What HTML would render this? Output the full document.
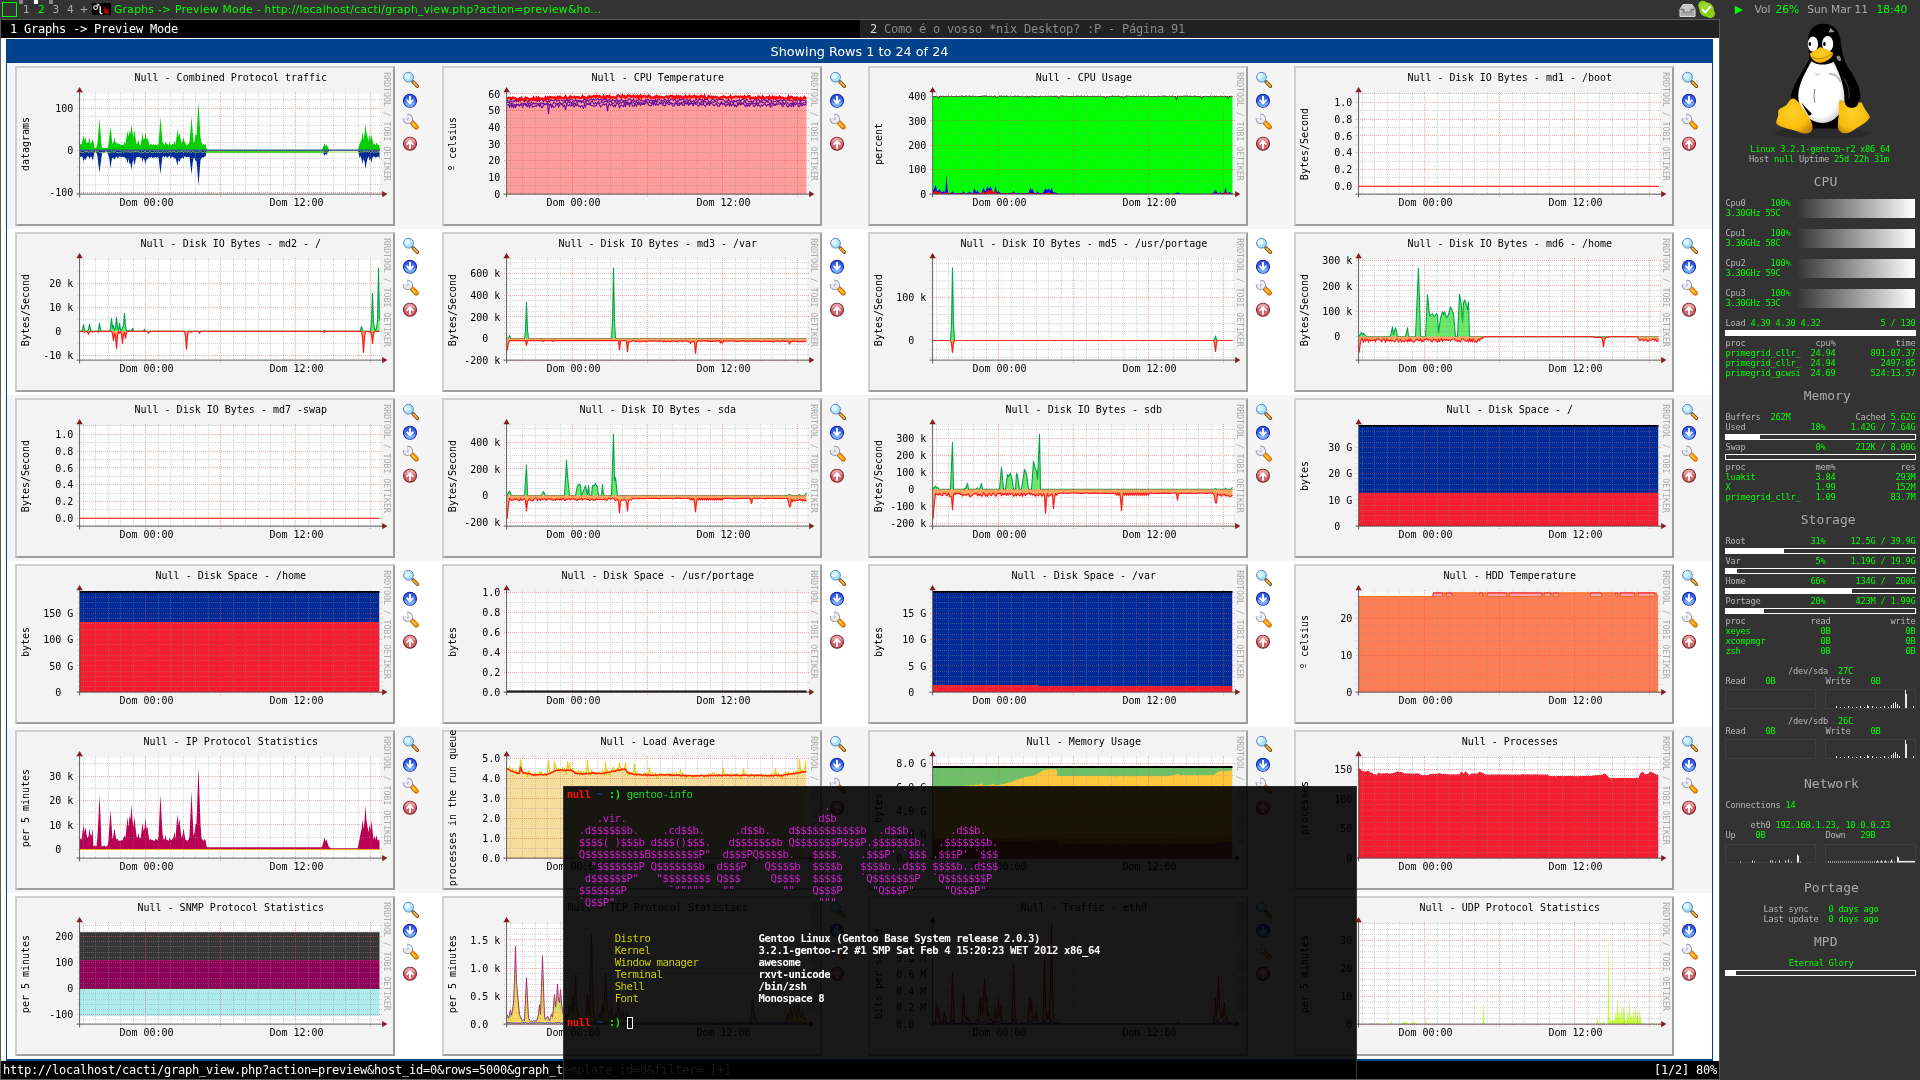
<!DOCTYPE html><html><head><meta charset="utf-8"><title>Graphs -&gt; Preview Mode</title><style>

html,body{margin:0;padding:0}
body{width:1920px;height:1080px;overflow:hidden;background:#333;position:relative;font-family:"DejaVu Sans Mono","Liberation Mono",monospace;will-change:transform}
div,svg,span{position:absolute;box-sizing:border-box}
span.i{position:static}
.g{overflow:visible}
.g text{font-family:"DejaVu Sans Mono","Liberation Mono",monospace;font-size:10px;fill:#000}
.g text.wm{font-size:8.2px;fill:#aaa}
.ic{overflow:visible}
#win{left:0;top:19px;width:1720px;height:1061px;background:#fff;border:1px solid #5a5a5a;overflow:hidden}
#tabs{left:1px;top:20px;width:1718px;height:17.5px;background:#000;font:12px/18.4px "DejaVu Sans Mono","Liberation Mono",monospace;letter-spacing:-0.224px;color:#fff;white-space:pre}
#tab2{left:859px;top:0;width:859px;height:17.5px;background:#222;color:#888}
#hdr{left:6px;top:39px;width:1707px;height:24px;background:#00438c;color:#fff;font:12.8px/25.6px "DejaVu Sans","Liberation Sans",sans-serif;text-align:center}
.row{left:7px;width:1705px;height:166px}
#tbl{left:6px;top:63px;width:1707px;height:998px;border:1px solid #00438c;border-top:0;border-bottom:2px solid #00438c}
#status{left:1px;top:1061px;width:1718px;height:18px;background:#000;color:#fff;font:12px/18.4px "DejaVu Sans Mono","Liberation Mono",monospace;letter-spacing:-0.224px;white-space:pre}

#side{left:1720px;top:19px;width:200px;height:1061px;background:#333}
.sl{left:1725.5px;height:10px;font:8.67px/10px "DejaVu Sans Mono","Liberation Mono",monospace;letter-spacing:-0.22px;white-space:pre;color:#b4b4b4}
.sl span{top:0}
.sl .v,.sl.v{color:#0f0}
.sh{font:13px/16px "DejaVu Sans Mono","Liberation Mono",monospace;color:#aaa;white-space:pre;height:16px}
.bar{left:1725px;width:191px;height:6px;border:1px solid #fff}
.bar div{left:0;top:0;height:4px;background:#fff}
.cpb{left:1795px;width:120px;height:19.5px;background:linear-gradient(90deg,#303030 0%,#3c3c3c 5%,#fff 100%)}
.mg{width:91px;height:20px;border:1px solid #3e3e3e}

#term{left:563px;top:786px;width:794px;height:293px;background:rgba(0,0,0,0.9);border-left:1px solid rgba(60,60,60,.9);border-right:1px solid rgba(60,60,60,.9);border-top:1px solid rgba(40,40,40,.9);font:10.67px/12px "DejaVu Sans Mono","Liberation Mono",monospace;letter-spacing:-0.424px;color:#e5e5e5;white-space:pre;overflow:hidden}
#term span{left:2.7px;height:12px}
#term b{font-weight:bold}
.tm{color:#cd1fcd}.ty{color:#cdcd00}.tw{color:#fff;font-weight:bold}

#top{left:0;top:0;width:1920px;height:19px;background:#333;color:#aaa;font:10.67px/19px "DejaVu Sans","Liberation Sans",sans-serif;white-space:pre}
#top span{top:0}
#top .gr{color:#0f0}
#top i{position:absolute;font-style:normal}

</style></head><body>
<div id="top"><div style="left:2px;top:2px;width:15px;height:15px;border:1px solid #0f0"></div><div style="left:19px;top:0;width:4px;height:3.5px;background:#8a8a8a"></div><div style="left:34px;top:0;width:4px;height:4px;background:#fff"></div><div style="left:49px;top:0;width:4px;height:3.5px;background:#8a8a8a"></div><span class="" style="left:23px">1</span><span class="gr" style="left:38px">2</span><span class="" style="left:52.5px">3</span><span class="" style="left:67px">4</span><span class="" style="left:79.5px">+</span><div style="left:92px;top:3px;width:19px;height:12px;background:#000"></div><svg style="left:92px;top:3px" width="19" height="12" viewBox="0 0 19 12"><circle cx="3.6" cy="4.6" r="1.9" fill="none" stroke="#fff" stroke-width="1.1"/><path d="M5 3.2L6.6 1.4M4.6 1.2h2.2v2" stroke="#fff" stroke-width=".9" fill="none"/><path d="M8.2 3.2v6.2q0 1.2 1.4 1.2h1" stroke="#fff" stroke-width="1.4" fill="none"/><path d="M13.2 4.2v6.6M16.6 6.2l-3 2.4 3.2 2.2" stroke="#e00000" stroke-width="1.5" fill="none"/></svg><span class="gr" style="left:114px;letter-spacing:0.33px">Graphs -&gt; Preview Mode - http://localhost/cacti/graph_view.php?action=preview&amp;ho...</span><svg style="left:1679px;top:3px" width="17" height="15" viewBox="0 0 17 15"><path d="M1 6.2L4 1.6h9l3 4.6v7.2H1z" fill="#a8a8a8" stroke="#e6e6e6" stroke-width="1"/><path d="M1.2 6.4h3.6v2.6h7.2V6.4h3.8" fill="none" stroke="#6e6e6e" stroke-width="1.1"/><path d="M4.6 2.2h7.8l2 3.6h-3v2.6H5.6V5.8h-3z" fill="#c8c8c8"/></svg><svg style="left:1697px;top:0" width="19" height="19" viewBox="0 0 19 19"><circle cx="5.8" cy="5.4" r="4.6" fill="#8ad01a"/><circle cx="13.4" cy="13.6" r="4.6" fill="#8ad01a"/><circle cx="9.6" cy="9.6" r="7.2" fill="#86cc18"/><circle cx="8" cy="7" r="4.6" fill="#a6e03c" opacity=".7"/><path d="M5.6 9.8l2.6 2.8 5-5.8" stroke="#fff" stroke-width="2" fill="none" stroke-linecap="round" stroke-linejoin="round"/></svg><svg style="left:1734px;top:5px" width="10" height="10" viewBox="0 0 10 10"><path d="M0.8 0.8L9 5 0.8 9.2z" fill="#0f0"/></svg><span style="left:1754.6px">Vol</span><span class="gr" style="left:1775.4px">26%</span><span style="left:1807.3px">Sun Mar 11</span><span class="gr" style="left:1876.6px">18:40</span></div>
<div id="win"></div>
<div id="tabs"><span style="left:9px">1 Graphs -&gt; Preview Mode</span><div id="tab2"><span style="left:10px;color:#ddd">2</span><span style="left:24px">Como é o vosso *nix Desktop? :P - Página 91</span></div></div>
<div id="hdr">Showing Rows 1 to 24 of 24</div>
<div class="row" style="top:63px;background:#f5f5f5"></div>
<div class="row" style="top:229px;background:#fff"></div>
<div class="row" style="top:395px;background:#f5f5f5"></div>
<div class="row" style="top:561px;background:#fff"></div>
<div class="row" style="top:727px;background:#f5f5f5"></div>
<div class="row" style="top:893px;background:#fff"></div>
<div id="tbl"></div>
<svg class="g" style="left:15px;top:66px" width="380" height="160" viewBox="0 0 380 160"><rect width="380" height="160" fill="#f3f3f3"/><path d="M0 0H380L378 2H2V158L0 160Z" fill="#cfcfcf"/><path d="M380 160H0L2 158H378V2L380 0Z" fill="#9e9e9e"/><rect x="65" y="28" width="300" height="100" fill="#fff"/><clipPath id="c0"><rect x="65" y="28" width="300" height="100"/></clipPath><clipPath id="c0o"><rect x="65" y="26" width="300" height="103"/></clipPath><g clip-path="url(#c0)"><path d="M65 78l1.5 .4 1 -4.6 1 -4.2 1 5.2 1 -3.7 1 5.7 1 .5 1 -1.2 1 -4.9 1 6.2 1 -.5 1 -4 1 2.8 1 6.3 1 1.6 1 -2.3 1 -4.5 1 -11.9 1 -12.5 1 13.7 1 13 1 3.3 1 1.2 1 -.4 1 -.1 1 .5 1 -1 1 -4 1 -9.4 1 -8.7 1 9.2 1 8.8 1 -2.4 1 -4.7 1 5.7 1 .2 1 0 1 .4 1 .3 1 .9 1 .2 1 -.1 1 .1 1 -3.6 1 2.8 1 -7.4 1 -5.9 1 5.7 1 -6.8 1 4.4 1 -10.1 1 8 1 5.6 1 -8.3 1 8.5 1 5.7 1 -.1 1 -4 1 4.9 1 1 1 -5 1 -7.3 1 6.3 1 -.4 1 -7.2 1 7.2 1 -.7 1 2.9 1 4 1 -1.5 1 .8 1 .6 1 -1.3 1 1.5 1 -1.2 1 1.2 1 -.7 1 -.7 1 -12.9 1 -14.7 1 13.5 1 12.1 1 1.6 1 1.6 1 -3.4 1 1.8 1 .6 1 1.3 1 -3.4 1 3.1 1 -.1 1 -1.3 1 .6 1 -3.6 1 4.2 1 -7.4 1 -8.9 1 8.5 1 -4.9 1 6.9 1 4.2 1 -2.5 1 -3.6 1 4.5 1 1.8 1 1.7 1 0 1 -1.8 1 -.9 1 -12.5 1 -13.7 1 12.5 1 13.3 1 -.6 1 -7.2 1 1.1 1 -16.9 1 -17.1 1 18.3 1 17.7 1 4.9 1 2.7 1 -1.1 1 1.1 1 -1.4 1 5.1 1 1.7 114 0 1 -2.1 1 -2.5 1 -2.6 1 2.6 1 -1.4 1 2.1 1 2.2 1 1.7 28 0 1 -2.6 1 -3.6 1 -2.3 1 -2.3 1 -7.7 1 8 1 -5.8 1 -10.2 1 8.7 1 4.3 1 4.4 1 -6.9 1 5.5 1 -5.7 1 5.6 1 4.7 1 -1.4 1 2.1 1 -2.9 1 1.9 1 1.1 1 -.6V84.5H65Z" fill="#00cf00"/><path d="M65 91.1l1.5 -.5 1 .4 1 5.1 1 -3.5 1 1.7 1 -2.8 1 -1.2 1 .2 1 2.8 1 -2.4 1 -.3 1 3.8 1 -3.3 1 -4.3 1 -1.8 1 2.1 1 3.1 1 9.1 1 7.5 1 -8.2 1 -7.4 1 -6 1 2 1 -.1 1 -2.1 1 1 1 1 1 2.8 1 4 1 8.8 1 -7.5 1 -3.2 1 -.5 1 2.3 1 -1.9 1 -1.3 1 1.6 1 -.3 1 -1.6 1 1 1 0 1 -.4 1 .3 1 .2 1 .8 1 1 1 4.5 1 -5.1 1 5.8 1 -1 1 6.9 1 -7.7 1 -3.3 1 6.4 1 -5.3 1 -3 1 -.3 1 .1 1 -.1 1 1.1 1 -.9 1 5.1 1 -4.4 1 2.1 1 4.4 1 -4.8 1 -.3 1 -1.3 1 -1.1 1 .9 1 -1.3 1 1.6 1 -.6 1 -.1 1 -.7 1 1.4 1 -1 1 .6 1 7.6 1 8.9 1 -10.5 1 -6.7 1 -1.1 1 1.9 1 -1.8 1 1.3 1 .4 1 -1.3 1 -.4 1 2.2 1 -.6 1 -1.2 1 1 1 1 1 -.2 1 3.4 1 4.1 1 -6.4 1 2.9 1 -3.4 1 -.7 1 -.7 1 1.9 1 -3.1 1 .5 1 .9 1 -.7 1 .2 1 -.4 1 9.4 1 8.3 1 -9.8 1 -6.8 1 .1 1 2.5 1 .7 1 11 1 13.6 1 -13 1 -12.6 1 -2.4 1 -.2 1 .1 1 -1 1 -.1 1 -4.8 1 -1.2 114 0 1 1.5 1 1.8 1 1.9 1 -1.9 1 1 1 -1.5 1 -1.6 1 -1.2 28 0 1 1.8 1 5.6 1 -1.8 1 2.9 1 5 1 -5.1 1 2.6 1 7.8 1 -6.9 1 -3.4 1 -2.7 1 4.3 1 -1.9 1 4.1 1 -5.2 1 -1.3 1 .5 1 .6 1 -.1 1 -.9 1 .4 1 1.4V84.5H65Z" fill="#002a97"/><rect x="191" y="84.8" width="118" height="2.3" fill="#00cf00"/><rect x="65" y="81.9" width="126" height="2.2" fill="#00cf00"/><rect x="344" y="81.9" width="21" height="2.2" fill="#00cf00"/><path d="M65 85.8l1.5 .6 1 0 1 .2 1 -.9 1 0 1 -.1 1 .1 1 .7 1 -.8 1 .5 1 -.4 1 .1 1 .2 1 .6 1 -.3 1 -.9 1 .4 1 -.2 1 1 1 -.1 1 0 1 .1 1 -.2 1 .3 1 -.2 1 -.7 1 .8 1 -.5 1 .4 1 -.3 1 -.2 1 -.1 1 .1 1 -.2 1 -.2 1 .9 1 0 1 .3 1 -.4 1 -.2 1 .2 1 -.8 1 .7 1 -.3 1 -.4 1 .1 1 .4 1 -.3 1 .2 1 .2 1 -.2 1 -.4 1 .5 1 -.4 2 0 1 .2 1 -.4 1 .8 1 .4 1 -.8 1 .5 1 .3 1 -1.2 1 .1 1 .9 1 .1 1 -.3 1 -.7 1 .4 1 .6 1 0 1 -.1 1 -.8 1 .9 1 -.7 1 .5 1 -.8 1 1.2 1 -.6 1 .2 1 -.7 1 .6 1 -.1 1 0 1 -.3 1 .5 1 -.5 1 -.1 1 -.2 1 .8 1 -.8 1 .1 1 -.2 1 .8 1 -.1 1 0 1 -.7 1 .5 1 -.1 1 -.4 1 -.1 1 1.4 1 -1.2 1 .2 1 0 1 .4 1 -.7 1 .6 1 -.2 1 .7 1 -1.2 1 .5 1 .2 1 .7 1 -.7 1 0 1 .2 1 -.5 1 -.4 1 .7 1 .6 1 -.3 1 -.6 1 .6 1 -.3 152 0 1 .5 1 -.8 1 .4 1 -.3 1 -.2 1 .1 1 -.1 1 .2 1 -.4 1 .5 1 -.5 1 1 1 -.3 1 -.8 1 1.1 1 -.8 1 .4 1 .1 1 -.3 1 -.1 1 .2" fill="none" stroke="#9fd65c" stroke-width="0.9" stroke-linejoin="round"/><path d="M65 84.2l299.5 0" fill="none" stroke="#1b5f8f" stroke-width="1.4" stroke-linejoin="round"/></g><path d="M62 118.5H367M62 109.5H367M62 101.5H367M62 92.5H367M62 76.5H367M62 67.5H367M62 59.5H367M62 50.5H367M62 33.5H367M68.5 26V130M80.5 26V130M93.5 26V130M105.5 26V130M118.5 26V130M143.5 26V130M155.5 26V130M168.5 26V130M180.5 26V130M193.5 26V130M218.5 26V130M230.5 26V130M243.5 26V130M255.5 26V130M268.5 26V130M293.5 26V130M305.5 26V130M318.5 26V130M330.5 26V130M343.5 26V130" stroke="rgba(143,143,143,0.38)" stroke-width="1" stroke-dasharray="1 1" fill="none" shape-rendering="crispEdges"/><path d="M62 126.5H367M62 84.5H367M62 42.5H367M130.5 26V132M205.5 26V132M280.5 26V132M355.5 26V132" stroke="rgba(222,79,79,0.47)" stroke-width="1" stroke-dasharray="1 1" fill="none" shape-rendering="crispEdges"/><path d="M64.6 26V131.4 M61.6 128.1H368" stroke="#4d4d4d" stroke-width="0.9" fill="none"/><path d="M64.6 21l-3.2 5.2h6.4z M372.4 128.1l-5.2 -3.2v6.4z" fill="#801f1f"/><text x="215.8" y="15.4" text-anchor="middle">Null - Combined Protocol traffic</text><text x="58.3" y="130.4" text-anchor="end">-100</text><text x="58.3" y="88.2" text-anchor="end">0</text><text x="58.3" y="46" text-anchor="end">100</text><text x="131.5" y="140.2" text-anchor="middle">Dom 00:00</text><text x="281.5" y="140.2" text-anchor="middle">Dom 12:00</text><text transform="translate(13.9 78) rotate(-90)" text-anchor="middle">datagrams</text><text class="wm" transform="translate(369.3 6.3) rotate(90)">RRDTOOL / TOBI OETIKER</text></svg>
<svg class="ic" style="left:403px;top:72px" width="17" height="17" viewBox="0 0 17 17"><path d="M10 9.8L14.4 14.2" stroke="#6e4410" stroke-width="3.4" stroke-linecap="round"/><path d="M10.2 10L14.3 14.1" stroke="#f2b03c" stroke-width="1.9" stroke-linecap="round"/><path d="M8.6 8.4l1.6 1.6" stroke="#6a6a8a" stroke-width="1.6"/><circle cx="5.5" cy="5.2" r="4.9" fill="#a8e2f8" stroke="#5f86c4" stroke-width="1"/><circle cx="4.4" cy="4.2" r="2.9" fill="#e6fbff" opacity=".8"/></svg>
<svg class="ic" style="left:403px;top:93px" width="17" height="17" viewBox="0 0 17 17"><circle cx="7" cy="7.8" r="6.5" fill="#3a6cf2" stroke="#141ea0" stroke-width="1.1"/><path d="M1.4 8.6a5.6 5.6 0 0 0 11.2 0c-3 2-8 2-11.2 0z" fill="#7ab2ff" opacity=".9"/><path d="M2.2 5.6a5 5 0 0 1 9.6 0c-3-1.4-6.6-1.4-9.6 0z" fill="#2448d0" opacity=".6"/><path d="M7 3.8v5.8M4.2 7.4l2.8 3 2.8-3" stroke="#fff" stroke-width="2" fill="none" stroke-linejoin="round" stroke-linecap="round"/></svg>
<svg class="ic" style="left:403px;top:114px" width="17" height="17" viewBox="0 0 17 17"><path d="M9.4 9L13.3 12.9" stroke="#b45a00" stroke-width="5" stroke-linecap="round"/><path d="M9.2 8.8L13.2 12.8" stroke="#ff9a0c" stroke-width="3.6" stroke-linecap="round"/><path d="M9.6 9.8L12 12.2" stroke="#ffd040" stroke-width="1.3" stroke-linecap="round"/><path d="M4.45 2.37A2.55 2.55 0 1 1 2.27 4.55" stroke="#8288aa" stroke-width="5.1" fill="none"/><path d="M4.45 2.37A2.55 2.55 0 1 1 2.27 4.55" stroke="#e9eaf1" stroke-width="3.5" fill="none"/><path d="M6.6 2.4A3.6 3.6 0 0 1 7.6 7.4" stroke="#fff" stroke-width="1.2" fill="none" opacity=".8"/></svg>
<svg class="ic" style="left:403px;top:136px" width="17" height="17" viewBox="0 0 17 17"><circle cx="7" cy="7.8" r="6.5" fill="#d2646c" stroke="#7a2226" stroke-width="1.1"/><path d="M1.4 7a5.6 5.6 0 0 1 11.2 0c-3-2-8-2-11.2 0z" fill="#ecb0b4" opacity=".75"/><path d="M7 12v-6.4M4.2 8.2l2.8-3 2.8 3" stroke="#fff" stroke-width="1.9" fill="none" stroke-linejoin="round" stroke-linecap="round"/></svg>
<svg class="g" style="left:442px;top:66px" width="380" height="160" viewBox="0 0 380 160"><rect width="380" height="160" fill="#f3f3f3"/><path d="M0 0H380L378 2H2V158L0 160Z" fill="#cfcfcf"/><path d="M380 160H0L2 158H378V2L380 0Z" fill="#9e9e9e"/><rect x="65" y="28" width="300" height="100" fill="#fff"/><clipPath id="c1"><rect x="65" y="28" width="300" height="100"/></clipPath><clipPath id="c1o"><rect x="65" y="26" width="300" height="103"/></clipPath><g clip-path="url(#c1)"><path d="M65 32.9l1.5 -1.3 1 .1 1 .5 1 .7 1 -1.4 1 0 1 .8 1 .1 1 .7 1 .7 1 -.9 1 -.5 1 1.4 1 -1.9 1 1.5 1 .1 1 .5 1 -2.4 1 .7 1 -.3 1 .7 1 1.4 1 -.8 1 -.4 1 .9 1 -2.2 1 1.5 1 .5 1 -1.8 1 1.8 1 -2.1 1 1.2 1 -.3 1 .5 1 -.4 1 .7 1 .4 1 -2.2 1 1.6 1 -1.5 1 1.5 1 -2 1 .1 1 .3 1 0 1 .4 1 -.4 1 1.5 1 -.9 1 -1 1 1.6 1 -1.9 1 .1 1 1.2 1 0 1 -.2 1 .1 1 -1.6 1 1.5 1 .9 1 -.2 1 -1.6 1 -.7 1 1.2 1 0 1 -.1 1 -.6 1 1.4 1 -1 1 .1 1 -.2 1 1.1 1 0 1 -.4 1 -1.6 1 1.5 1 -.6 1 .7 1 .5 1 .1 1 -2 1 .1 1 1 1 -.8 1 0 1 -.6 1 -.1 1 1.4 1 -1.6 1 .1 1 .9 1 -.7 1 1 1 .3 1 .3 1 -1.7 1 1.9 1 .2 1 -1.9 1 0 1 .8 1 -1 1 2 1 -.5 1 -.1 1 -.4 1 .7 1 .2 1 -.7 1 -1.5 1 -.2 1 .6 1 .7 1 .5 1 -1.8 1 1.1 1 -.5 1 1.8 1 -.5 1 -1.7 1 .1 1 -.2 1 .8 1 .4 1 -.4 1 -.7 1 1.4 1 -.5 1 .6 1 -1.2 1 1.9 1 -1.7 1 -.7 1 2.4 1 -1.4 1 -.2 1 -.5 1 .7 1 .9 1 -.4 1 -1.5 1 .2 1 2 1 .1 1 0 1 .2 1 -1.1 1 .8 1 -1.9 1 .6 1 1.4 1 -1.1 1 .6 1 -.5 1 .7 1 .2 1 0 1 -.5 1 -.9 1 .4 1 1.3 1 -1.7 1 -.4 1 .3 1 -.1 1 2.1 1 -1.2 1 1 1 -1.8 1 1.6 1 -1.4 1 1.2 1 -1.2 1 1 1 .7 1 -.9 1 .3 1 -1.6 1 1.6 1 -.5 1 -.1 1 -1.1 1 2.2 1 -1.3 1 .3 1 -.6 1 -.6 1 1.7 1 -1 1 .5 1 -.1 1 1.3 1 -2 1 -.4 1 1.6 1 .1 1 -1.7 1 2.3 1 .1 1 0 1 -1.9 1 .1 1 .9 1 -.5 1 1.6 1 -1.6 1 .5 1 -.2 1 .4 1 0 1 .4 1 .5 1 -1 1 .5 1 -1.2 1 -.3 1 .3 1 .7 1 .6 1 -.4 1 -.3 1 -.3 1 -.9 1 2.3 1 -1 1 0 1 -.6 1 -.4 1 .3 1 .4 1 -.4 1 .3 1 -.5 1 .4 1 .1 1 1.1 1 -1.7 1 1.4 1 -.6 1 -.5 1 -.4 1 0 1 2.5 1 -.8 1 0 1 -.2 1 .7 1 -1.1 1 1.3 1 -.6 1 -1.6 1 .5 1 .7 1 1 1 -2.2 1 .6 1 1.3 1 -.3 1 -.8 1 -.1 1 1.1 1 -1.7 1 1.6 1 .2 1 -1.5 1 1.8 1 -1.4 1 1.3 1 -1.1 1 .9 1 -.3 1 -1.4 1 1.2 1 .1 1 -.4 1 .8 1 .3 1 -.5 1 .3 1 .2 1 -2 1 2.4 1 -2 1 -.3 1 .6 1 1.8 1 -1.2 1 1.2 1 -1.5 1 -.2 1 1.2 1 .6 1 -1.4 1 1.2 1 -.5 1 -.4 1 -1.1 1 1.3 1 .6V128H65Z" fill="#ff9c9c"/><path d="M65 39.1l1.5 -.6 1 2.9 1 -3.6 1 3.5 1 -2.1 1 2.5 1 -2.9 1 2.7 1 -2.5 1 -.1 1 -.2 1 1.5 1 -1.9 1 -.6 1 3.9 1 -1.8 1 -2 1 1 1 1.3 1 .6 1 -2.9 1 3.8 1 -2.9 1 -.4 1 3 1 -.8 1 .1 1 -1 1 .7 1 -2.3 1 -.1 1 2.6 1 -2.5 1 3.6 1 -.1 1 -2.5 1 -.6 1 -.1 1 -.8 1 .6 1 9.6 1 -9.1 1 -.8 1 3.6 1 -1.8 1 1.5 1 .1 1 -1.5 1 -.9 1 -1.3 1 3.7 1 -1.7 1 -2.1 1 1 1 1 1 1.3 1 -1.8 1 4.7 1 -4.7 1 -.1 1 1.2 1 -1.8 1 1.7 1 -.3 1 -1.6 1 2.5 1 .3 1 -1.8 1 .6 1 -1.9 1 2.7 1 -.5 1 1.3 1 -1.7 1 .6 1 2.4 1 -4.4 1 3.1 1 -4.2 1 1.2 1 -.4 1 1.2 1 -.2 1 .7 1 0 1 .8 1 -.4 1 0 1 -.2 1 -2.5 1 .5 1 .6 1 2.8 1 -1.1 1 -1.3 1 -.6 1 1.1 1 -.9 1 -1.2 1 7.8 1 -5.6 1 -1.6 1 1.9 1 -1.8 1 1.4 1 1.6 1 -1.9 1 1.7 1 -3.2 1 -.3 1 1.4 1 3.4 1 -2 1 -1.1 1 1.2 1 .6 1 -3.5 1 3.4 1 -3.9 1 1.7 1 -.7 1 2.8 1 -3.7 1 .4 1 3.1 1 -.4 1 .2 1 -1.7 1 1.9 1 -3.2 1 1.3 1 -.9 1 2 1 -1.8 1 .9 1 -.9 1 1 1 -2.6 1 .7 1 0 1 2.1 1 .7 1 .1 1 .1 1 -3.7 1 3 1 -2.6 1 2.8 1 -1.7 1 1.6 1 -.2 1 -2 1 .7 1 -1.5 1 3.1 1 -.1 1 .9 1 -.7 1 -3.3 1 1.8 1 .4 1 .6 1 -1.8 1 .3 1 2.4 1 .5 1 -.6 1 -2.8 1 .4 1 2.2 1 0 1 -.3 1 -1.7 1 -.3 1 2.3 1 -.4 1 .4 1 -3.1 1 1.8 1 -1.7 1 3 1 -1.7 1 .3 1 -1.6 1 2.5 1 .7 1 -2.6 1 -.6 1 2 1 .7 1 1.1 1 -1.5 1 -2.1 1 2.5 1 -.4 1 -.5 1 1.4 1 .6 1 -1.8 1 -2 1 .5 1 2.5 1 -2.1 1 -.2 1 1.1 1 1 1 .7 1 -2.2 1 .1 1 2.1 1 .3 1 .1 1 -3.1 1 -.3 1 1.7 1 -.4 1 -.4 1 2.4 1 -1.6 1 .3 1 -1.8 1 3.1 1 -3 1 3.1 1 -2 1 -1.3 1 3.6 1 -1.7 1 2.1 1 -2.2 1 .1 1 -2.1 1 2.1 1 -1.9 1 .8 1 -.4 1 2.1 1 1.2 1 -2.4 1 2.3 1 -2.2 1 1.9 1 -1.8 1 -.7 1 -.9 1 3.4 1 .1 1 -1.1 1 -2.4 1 3.2 1 -1 1 .4 1 1.5 1 -2.1 1 1 1 -.7 1 -1.2 1 .4 1 1.8 1 -1.7 1 .5 1 -1 1 3.3 1 -1.2 1 -1.7 1 .5 1 .3 1 -.1 1 -.4 1 -.5 1 -.5 1 .3 1 -.6 1 1.5 1 1.8 1 -.9 1 -2.1 1 .4 1 .7 1 2.1 1 -.1 1 -2.2 1 1.1 1 1 1 -3.4 1 3.3 1 -3.1 1 1.4 1 -1.5 1 .8 1 2.5 1 -.1 1 -2.8 1 1.9 1 -.3 1 -1 1 .6 1 -.5 1 .9" fill="none" stroke="#6a0a9a" stroke-width="1.1" stroke-linejoin="round"/><path d="M65 36.5l1.5 -.1 1 .2 1 2.9 1 -1.9 1 .6 1 -.4 1 1.4 1 -.2 1 -.9 1 .8 1 -.9 1 1.5 1 -.2 1 -2.3 1 1.1 1 -.4 1 -.8 1 1.3 1 1.1 1 -2.6 1 .7 1 -.3 1 .1 1 -1.3 1 2.2 1 -1.4 1 1.4 1 -.8 1 -.3 1 1.2 1 .8 1 -1.4 1 -.9 1 .5 1 .5 1 -.8 1 1.7 1 0 1 -.5 1 -1.8 1 2.2 1 .3 1 0 1 .2 1 -.9 1 -1.1 1 -.9 1 1.8 1 -.2 1 .3 1 -.1 1 -1.7 1 .8 1 1.1 1 .5 1 -2.5 1 .3 1 -.5 1 2.2 1 -1.2 1 -1.3 1 1.1 1 -1.2 1 2.7 1 -2.9 1 3.3 1 -1.3 1 1.4 1 -2.8 1 .4 1 -1.1 1 .6 1 -.5 1 1.5 1 -1.7 1 .9 1 1.4 1 -2.3 1 2.2 1 .6 1 .4 1 -1.4 1 .9 1 -2.6 1 -.1 1 2.6 1 .4 1 -1.5 1 1.3 1 -1.4 1 -1 1 2 1 -.6 1 -1.8 1 1.7 1 .3 1 -2 1 .3 1 -.3 1 .7 1 1 1 -1 1 -.5 1 .7 1 1.5 1 -.2 1 -.5 1 -1.3 1 .8 1 0 1 -.9 1 2.5 1 -1.8 1 1 1 -.8 1 -1 1 2.1 1 -2.5 1 3.2 1 -1.8 1 .1 1 1.1 1 -1.2 1 .4 1 0 1 -.9 1 2.6 1 -1.4 1 -1.5 1 2.4 1 -2.6 1 2.3 1 -1.7 1 1.9 1 -1 1 .1 1 1.2 1 -2.2 1 .8 1 -.8 1 .6 1 -.1 1 .1 1 .8 1 -2.1 1 2.9 1 -2.8 1 0 1 1.3 1 -1 1 .4 1 .3 1 1.1 1 -.1 1 -.1 1 .2 1 -2.4 1 2.2 1 -.1 1 -.2 1 -1.4 1 1.2 1 -.2 1 1 1 0 1 .6 1 -.4 1 -.2 1 -2.1 1 1.3 1 1.4 1 -1.3 1 1.2 1 -1.6 1 .5 1 -1.5 1 2.2 1 -2.2 1 2.2 1 -2.6 1 1.2 1 2.2 1 -2.8 1 1.9 1 -.3 1 .8 1 -2.5 1 2.7 1 -2.3 1 1.2 1 -1 1 1.4 1 .8 1 -3.1 1 1 1 1.7 1 -2.9 1 .3 1 2.6 1 .6 1 -2.1 1 1.7 1 -2.2 1 1 1 -.9 1 .5 1 -.7 1 -.2 1 .8 1 0 1 1 1 .7 1 .2 1 -2.8 1 2.3 1 -.7 1 .4 1 -1.1 1 .3 1 -1.2 1 1.5 1 .3 1 -1 1 -.4 1 -.6 1 2.2 1 -2.1 1 -.3 1 0 1 3.1 1 -.9 1 -1.5 1 -.2 1 2.9 1 -1.3 1 -1.2 1 -.1 1 .8 1 1.2 1 -.7 1 1.2 1 -.9 1 -.4 1 -1.4 1 .8 1 .7 1 .6 1 -.3 1 -1.2 1 .8 1 1 1 -2.4 1 .9 1 -1.4 1 1.6 1 -.4 1 .8 1 -.7 1 -1.1 1 -.2 1 1.1 1 .9 1 1.3 1 -2.8 1 1.6 1 0 1 1.2 1 .1 1 -1.3 1 -2.1 1 .9 1 .1 1 .1 1 1.5 1 .3 1 -1.5 1 1.9 1 -1.9 1 .3 1 -.1 1 1.5 1 .2 1 -1.4 1 1.1 1 -1.7 1 1.2 1 -1.2 1 -.4 1 .5 1 .3 1 1.2 1 -.6 1 -2.2 1 2.5 1 0 1 -.8 1 -.2 1 -.8 1 1.7" fill="none" stroke="#6a0a9a" stroke-width="1.1" stroke-linejoin="round"/><path d="M65 33.5l1.5 2.6 1 .4 1 -3.1 1 2.6 1 .2 1 -1.7 1 .9 1 -1.7 1 2.1 1 -2.4 1 2.1 1 -.9 1 -1.1 1 .8 1 -.8 1 .7 1 2.1 1 -2.7 1 .9 1 .9 1 .4 1 -2.1 1 .8 1 -1.1 1 .5 1 -.6 1 1.2 1 -.4 1 .3 1 1.1 1 -2.3 1 2.1 1 -1.5 1 -.6 1 1 1 1.6 1 -2.2 1 .5 1 1.5 1 .4 1 -1.5 1 1.6 1 -2.9 1 1.3 1 0 1 .3 1 -.8 1 -.8 1 1.9 1 -.2 1 -.7 1 .9 1 -.9 1 .1 1 .4 1 -.8 1 .4 1 1.4 1 -2.9 1 2.1 1 -.3 1 .1 1 -1.7 1 -.1 1 1.4 1 .4 1 .9 1 -2.5 1 2.3 1 -1.2 1 .6 1 0 1 -.1 1 .5 1 .5 1 -1.6 1 -.8 1 .4 1 1.5 1 -1.6 1 2 1 -1.1 1 -1.4 1 -.3 1 1.5 1 -1.3 1 1.1 1 -.1 1 -.2 1 -1.3 1 .8 1 .9 1 -.9 1 .3 1 .9 1 -1.4 1 -.1 1 .7 1 -1.1 1 2.9 1 -1.5 1 -.4 1 .9 1 .6 1 -1.7 1 .8 1 .6 1 .7 1 -3 1 2 1 .7 1 -.3 1 -.1 1 -1.9 1 2.2 1 -.3 1 .5 1 -1.2 1 .9 1 -.5 1 -1.2 1 -.6 1 .3 1 2.5 1 -1 1 -1.6 1 2.7 1 -.6 1 -.9 1 .4 1 -1.2 1 .1 1 .8 1 .7 1 0 1 -.1 1 .7 1 -1.9 1 1.6 1 -2.3 1 .7 1 1.9 1 -1.4 1 -.3 1 1.8 1 -1.4 1 1.4 1 -2.3 1 2.4 1 -2 1 -1.1 1 .4 1 2 1 -1 1 1.3 1 -.7 1 -1.6 1 .1 1 2.6 1 -1.2 1 -.8 1 1.5 1 -2 1 -.3 1 1.1 1 .6 1 -1.5 1 1 1 1.1 1 -.3 1 .4 1 -2.2 1 1.1 1 -.6 1 -.4 1 -.5 1 2.5 1 -.7 1 -1.5 1 .4 1 1.2 1 -.9 1 1.5 1 .1 1 .4 1 -1.1 1 .5 1 -.9 1 -1.5 1 2.6 1 -1.3 1 -.9 1 .8 1 .2 1 -.7 1 2.4 1 -3 1 .8 1 -.3 1 -.1 1 2.3 1 .1 1 -.3 1 -1.1 1 -1.3 1 .1 1 1.6 1 -.7 1 -.4 1 1.3 1 -2 1 .1 1 .7 1 -.6 1 .3 1 .5 1 1.1 1 .1 1 .1 1 .6 1 -2.8 1 2.1 1 .8 1 -.9 1 .7 1 -1.1 1 .4 1 .5 1 -1 1 .2 1 .2 1 -1.5 1 1.7 1 -.8 1 -1.1 1 -.2 1 1.8 1 1.1 1 -2.9 1 1.4 1 1 1 .2 1 -.3 1 -.2 1 .5 1 .3 1 -3 1 .5 1 2.3 1 -1.2 1 -1 1 1 1 1.4 1 -.9 1 -.1 1 -1.7 1 1 1 .4 1 -.5 1 1.8 1 -2 1 -.4 1 .5 1 1 1 .2 1 .9 1 -.2 1 -.3 1 -.9 1 -1.1 1 1.8 1 -.8 1 -.5 1 0 1 2 1 -2.9 1 1.1 1 .9 1 .2 1 -1.5 1 -.7 1 1.9 1 -.2 1 -.5 1 1.2 1 -.7 1 -1.7 1 1.2 1 -.9 1 1.8 1 -1.9 1 .3 1 1.8 1 -1 1 -.5 1 .4 1 -.1 1 1.1 1 -1" fill="none" stroke="#6a0a9a" stroke-width="1.1" stroke-linejoin="round"/></g><path d="M62 119.5H367M62 102.5H367M62 86.5H367M62 69.5H367M62 52.5H367M62 36.5H367M68.5 26V130M80.5 26V130M93.5 26V130M105.5 26V130M118.5 26V130M143.5 26V130M155.5 26V130M168.5 26V130M180.5 26V130M193.5 26V130M218.5 26V130M230.5 26V130M243.5 26V130M255.5 26V130M268.5 26V130M293.5 26V130M305.5 26V130M318.5 26V130M330.5 26V130M343.5 26V130" stroke="rgba(143,143,143,0.38)" stroke-width="1" stroke-dasharray="1 1" fill="none" shape-rendering="crispEdges"/><path d="M62 128.5H367M62 111.5H367M62 94.5H367M62 77.5H367M62 61.5H367M62 44.5H367M62 27.5H367M130.5 26V132M205.5 26V132M280.5 26V132M355.5 26V132" stroke="rgba(222,79,79,0.47)" stroke-width="1" stroke-dasharray="1 1" fill="none" shape-rendering="crispEdges"/><path d="M65 32.9l1.5 -1.3 1 .1 1 .5 1 .7 1 -1.4 1 0 1 .8 1 .1 1 .7 1 .7 1 -.9 1 -.5 1 1.4 1 -1.9 1 1.5 1 .1 1 .5 1 -2.4 1 .7 1 -.3 1 .7 1 1.4 1 -.8 1 -.4 1 .9 1 -2.2 1 1.5 1 .5 1 -1.8 1 1.8 1 -2.1 1 1.2 1 -.3 1 .5 1 -.4 1 .7 1 .4 1 -2.2 1 1.6 1 -1.5 1 1.5 1 -2 1 .1 1 .3 1 0 1 .4 1 -.4 1 1.5 1 -.9 1 -1 1 1.6 1 -1.9 1 .1 1 1.2 1 0 1 -.2 1 .1 1 -1.6 1 1.5 1 .9 1 -.2 1 -1.6 1 -.7 1 1.2 1 0 1 -.1 1 -.6 1 1.4 1 -1 1 .1 1 -.2 1 1.1 1 0 1 -.4 1 -1.6 1 1.5 1 -.6 1 .7 1 .5 1 .1 1 -2 1 .1 1 1 1 -.8 1 0 1 -.6 1 -.1 1 1.4 1 -1.6 1 .1 1 .9 1 -.7 1 1 1 .3 1 .3 1 -1.7 1 1.9 1 .2 1 -1.9 1 0 1 .8 1 -1 1 2 1 -.5 1 -.1 1 -.4 1 .7 1 .2 1 -.7 1 -1.5 1 -.2 1 .6 1 .7 1 .5 1 -1.8 1 1.1 1 -.5 1 1.8 1 -.5 1 -1.7 1 .1 1 -.2 1 .8 1 .4 1 -.4 1 -.7 1 1.4 1 -.5 1 .6 1 -1.2 1 1.9 1 -1.7 1 -.7 1 2.4 1 -1.4 1 -.2 1 -.5 1 .7 1 .9 1 -.4 1 -1.5 1 .2 1 2 1 .1 1 0 1 .2 1 -1.1 1 .8 1 -1.9 1 .6 1 1.4 1 -1.1 1 .6 1 -.5 1 .7 1 .2 1 0 1 -.5 1 -.9 1 .4 1 1.3 1 -1.7 1 -.4 1 .3 1 -.1 1 2.1 1 -1.2 1 1 1 -1.8 1 1.6 1 -1.4 1 1.2 1 -1.2 1 1 1 .7 1 -.9 1 .3 1 -1.6 1 1.6 1 -.5 1 -.1 1 -1.1 1 2.2 1 -1.3 1 .3 1 -.6 1 -.6 1 1.7 1 -1 1 .5 1 -.1 1 1.3 1 -2 1 -.4 1 1.6 1 .1 1 -1.7 1 2.3 1 .1 1 0 1 -1.9 1 .1 1 .9 1 -.5 1 1.6 1 -1.6 1 .5 1 -.2 1 .4 1 0 1 .4 1 .5 1 -1 1 .5 1 -1.2 1 -.3 1 .3 1 .7 1 .6 1 -.4 1 -.3 1 -.3 1 -.9 1 2.3 1 -1 1 0 1 -.6 1 -.4 1 .3 1 .4 1 -.4 1 .3 1 -.5 1 .4 1 .1 1 1.1 1 -1.7 1 1.4 1 -.6 1 -.5 1 -.4 1 0 1 2.5 1 -.8 1 0 1 -.2 1 .7 1 -1.1 1 1.3 1 -.6 1 -1.6 1 .5 1 .7 1 1 1 -2.2 1 .6 1 1.3 1 -.3 1 -.8 1 -.1 1 1.1 1 -1.7 1 1.6 1 .2 1 -1.5 1 1.8 1 -1.4 1 1.3 1 -1.1 1 .9 1 -.3 1 -1.4 1 1.2 1 .1 1 -.4 1 .8 1 .3 1 -.5 1 .3 1 .2 1 -2 1 2.4 1 -2 1 -.3 1 .6 1 1.8 1 -1.2 1 1.2 1 -1.5 1 -.2 1 1.2 1 .6 1 -1.4 1 1.2 1 -.5 1 -.4 1 -1.1 1 1.3 1 .6" fill="none" stroke="#ff0000" stroke-width="2.2" clip-path="url(#c1o)"/><path d="M64.6 26V131.4 M61.6 128.1H368" stroke="#4d4d4d" stroke-width="0.9" fill="none"/><path d="M64.6 21l-3.2 5.2h6.4z M372.4 128.1l-5.2 -3.2v6.4z" fill="#801f1f"/><text x="215.8" y="15.4" text-anchor="middle">Null - CPU Temperature</text><text x="58.3" y="131.7" text-anchor="end">0</text><text x="58.3" y="115.03" text-anchor="end">10</text><text x="58.3" y="98.36" text-anchor="end">20</text><text x="58.3" y="81.69" text-anchor="end">30</text><text x="58.3" y="65.02" text-anchor="end">40</text><text x="58.3" y="48.35" text-anchor="end">50</text><text x="58.3" y="31.68" text-anchor="end">60</text><text x="131.5" y="140.2" text-anchor="middle">Dom 00:00</text><text x="281.5" y="140.2" text-anchor="middle">Dom 12:00</text><text transform="translate(13.9 78) rotate(-90)" text-anchor="middle">º celsius</text><text class="wm" transform="translate(369.3 6.3) rotate(90)">RRDTOOL / TOBI OETIKER</text></svg>
<svg class="ic" style="left:830px;top:72px" width="17" height="17" viewBox="0 0 17 17"><path d="M10 9.8L14.4 14.2" stroke="#6e4410" stroke-width="3.4" stroke-linecap="round"/><path d="M10.2 10L14.3 14.1" stroke="#f2b03c" stroke-width="1.9" stroke-linecap="round"/><path d="M8.6 8.4l1.6 1.6" stroke="#6a6a8a" stroke-width="1.6"/><circle cx="5.5" cy="5.2" r="4.9" fill="#a8e2f8" stroke="#5f86c4" stroke-width="1"/><circle cx="4.4" cy="4.2" r="2.9" fill="#e6fbff" opacity=".8"/></svg>
<svg class="ic" style="left:830px;top:93px" width="17" height="17" viewBox="0 0 17 17"><circle cx="7" cy="7.8" r="6.5" fill="#3a6cf2" stroke="#141ea0" stroke-width="1.1"/><path d="M1.4 8.6a5.6 5.6 0 0 0 11.2 0c-3 2-8 2-11.2 0z" fill="#7ab2ff" opacity=".9"/><path d="M2.2 5.6a5 5 0 0 1 9.6 0c-3-1.4-6.6-1.4-9.6 0z" fill="#2448d0" opacity=".6"/><path d="M7 3.8v5.8M4.2 7.4l2.8 3 2.8-3" stroke="#fff" stroke-width="2" fill="none" stroke-linejoin="round" stroke-linecap="round"/></svg>
<svg class="ic" style="left:830px;top:114px" width="17" height="17" viewBox="0 0 17 17"><path d="M9.4 9L13.3 12.9" stroke="#b45a00" stroke-width="5" stroke-linecap="round"/><path d="M9.2 8.8L13.2 12.8" stroke="#ff9a0c" stroke-width="3.6" stroke-linecap="round"/><path d="M9.6 9.8L12 12.2" stroke="#ffd040" stroke-width="1.3" stroke-linecap="round"/><path d="M4.45 2.37A2.55 2.55 0 1 1 2.27 4.55" stroke="#8288aa" stroke-width="5.1" fill="none"/><path d="M4.45 2.37A2.55 2.55 0 1 1 2.27 4.55" stroke="#e9eaf1" stroke-width="3.5" fill="none"/><path d="M6.6 2.4A3.6 3.6 0 0 1 7.6 7.4" stroke="#fff" stroke-width="1.2" fill="none" opacity=".8"/></svg>
<svg class="ic" style="left:830px;top:136px" width="17" height="17" viewBox="0 0 17 17"><circle cx="7" cy="7.8" r="6.5" fill="#d2646c" stroke="#7a2226" stroke-width="1.1"/><path d="M1.4 7a5.6 5.6 0 0 1 11.2 0c-3-2-8-2-11.2 0z" fill="#ecb0b4" opacity=".75"/><path d="M7 12v-6.4M4.2 8.2l2.8-3 2.8 3" stroke="#fff" stroke-width="1.9" fill="none" stroke-linejoin="round" stroke-linecap="round"/></svg>
<svg class="g" style="left:868px;top:66px" width="380" height="160" viewBox="0 0 380 160"><rect width="380" height="160" fill="#f3f3f3"/><path d="M0 0H380L378 2H2V158L0 160Z" fill="#cfcfcf"/><path d="M380 160H0L2 158H378V2L380 0Z" fill="#9e9e9e"/><rect x="65" y="28" width="300" height="100" fill="#fff"/><clipPath id="c2"><rect x="65" y="28" width="300" height="100"/></clipPath><clipPath id="c2o"><rect x="65" y="26" width="300" height="103"/></clipPath><g clip-path="url(#c2)"><path d="M65 30.8l1.5 -.1 1 -.2 1 -.3 1 .5 1 1.8 1 -1.9 1 -.4 1 .5 1 -.5 1 .1 1 .4 1 -.3 1 0 1 .1 1 -.5 1 .8 1 0 1 -.8 1 .5 1 .2 1 -.1 1 -.1 1 -.5 1 .7 1 0 1 -.4 1 .1 1 -.4 1 .1 1 .4 1 .2 1 -.6 1 -.1 1 .8 1 -.6 1 -.1 1 .2 1 .4 1 -.6 1 .1 1 .5 1 -.4 1 .4 1 .1 1 -.3 2 0 1 -.2 1 -.2 1 -.1 2 0 1 .1 1 .5 1 .1 1 -.4 1 .1 1 -.2 1 .6 1 -.1 1 -.7 1 .3 1 1.7 1 -1.2 1 -.3 1 -.5 1 .3 1 -.3 1 .7 1 -.3 1 -.3 1 .3 1 -.3 1 .2 1 .4 1 .1 1 -.8 1 .7 1 0 1 -.2 1 -.3 1 -.1 1 .3 1 0 1 -.3 1 .5 1 -.1 1 -.2 1 0 1 .5 1 -.1 1 0 1 -.5 1 0 1 1.6 1 -1.6 1 .4 1 -.4 1 -.2 1 .5 1 .3 1 -.3 1 .1 1 .1 1 .1 1 -.1 1 -.6 1 .7 1 -.5 1 .4 1 0 1 -.6 1 .5 1 .1 1 -.3 1 -.2 1 .2 1 -.3 1 .4 1 -.1 1 -.2 1 .2 1 -.2 1 .2 1 2.1 1 -1.8 1 -.6 1 .1 1 -.2 1 .2 1 .1 1 .4 1 -.6 1 .6 1 -.2 1 .2 1 -.2 1 .1 1 -.1 1 -.3 1 .2 1 .2 1 -.5 1 .1 1 -.1 1 .7 1 -.5 1 -.3 1 .6 1 .1 1 -.6 1 .4 1 0 1 -.4 1 .4 1 .2 1 0 1 -.2 1 -.3 1 .3 1 -.3 1 .6 1 -.2 1 -.3 1 .1 1 0 1 -.4 1 .6 1 .1 1 .1 1 -.4 1 2 1 -2 1 .4 1 0 1 -.3 1 -.3 1 .4 1 -.6 1 .3 1 .2 1 -.3 1 .4 1 -.3 1 -.2 1 .3 1 .2 1 .2 1 -.5 1 2.2 1 -2 1 -.1 1 -.4 1 .2 1 .2 1 -.3 1 .5 1 -.1 1 -.3 1 .2 1 .3 1 -.2 1 -.4 1 .5 1 -.4 1 .6 1 -.8 1 .2 1 .4 1 -.6 1 .1 1 .7 1 -.2 1 -.2 1 -.4 1 .7 1 .1 1 -.2 1 .2 1 -.3 1 -.1 1 .1 1 .2 1 .1 1 -.7 1 .4 1 -.1 1 0 1 -.2 1 -.2 1 .1 1 .1 1 .3 1 .2 1 .1 1 -.7 1 .7 1 -.5 1 -.3 1 .6 1 -.1 1 0 1 3.1 1 -3.4 1 -.1 1 .7 1 -.6 1 .2 1 .1 1 -.4 1 .1 1 -.2 1 .2 1 -.2 1 .5 1 -.2 1 -.2 1 .3 1 .3 1 -.4 1 -.2 1 0 1 .6 1 -.2 1 .1 1 -.1 1 -.5 1 2.3 1 -1.7 1 0 1 -.1 1 -.3 1 .3 1 .2 1 -.1 1 0 1 -.6 1 .7 1 -.5 1 .6 1 -.7 1 .5 1 -.5 1 .4 1 .3 1 0 1 -.7 1 .3 1 0 1 .1 1 -.3 1 .2 1 .4 1 -.5 1 2.1 1 -2.3 1 .3 1 -.2 1 .5V128H65Z" fill="#00ff00"/><path d="M65 125l1.5 -3 1 -3 1 3 1 3 1 -.3 1 -1.7 1 1.7 1 1.6 1 -.3 1 -1 1 1 1 -2.6 1 -15.4 1 15.4 1 3.6 2 0 1 -.5 1 -1.5 1 1.5 1 .5 7 0 1 -.5 1 -1.5 1 1.5 1 .5 2 0 1 -.5 1 -1.5 1 1.5 1 .5 1 0 1 -2 1 -3 1 3 1 1 1 -2 1 2 1 1 2 0 1 -2.5 1 -3.5 1 3.5 1 .8 1 -2.6 1 -2.7 1 2.7 1 0 1 -2.7 1 2.7 1 2.6 1 1.7 1 -2 1 -6 1 6 1 1 1 -1 1 1 1 1 11 0 1 -.5 1 -1.5 1 1.5 1 .5 13 0 1 -2.5 1 -3.5 1 3.5 1 -1.5 1 2.5 1 1.5 1 0 1 -.5 1 -1.5 1 1.5 1 .5 3 0 1 -1 1 -2 1 -2 1 2 1 0 1 -2 1 2 1 .5 1 -3.5 1 3.5 1 2.2 1 -.7 1 .7 1 .3 1 0 1 .8 116 0 1 -.5 1 -.6 1 -.7 1 .7 1 .6 1 .5 31 0 1 -.8 1 -.3 1 -1.4 1 -1.3 1 1.3 1 1.4 1 .3 1 0 1 -1 1 1 2 0 1 -1.3 1 -4.7 1 4.7 1 1.3 1 -.3 1 -.7 1 .7 1 .3 1 0V128H65Z" fill="#0000ff"/><path d="M65 126.7l1.5 -1.4 1 -1.3 1 1.3 1 1.4 1 -.7 1 -1 1 1 1 1 1 .6 2 0 1 -1.1 1 -1.5 1 1.5 1 1.1 32 0 1 -.6 1 -1 1 -1 1 1 1 .9 1 -1.1 1 -1.2 1 -1.1 1 1.1 1 .4 1 -1.5 1 1.5 1 1.5 1 -.2 1 -3.3 1 3.3 1 1.3 30 0 1 -.1 1 -.5 1 -.5 1 .5 1 .5 1 .1 11 0 1 -.4 1 -.4 1 -.4 1 -.4 1 .4 1 .4 1 .4 1 .4 5 0 1 .4 153 0 1 -.4 11 0 1 -.6 1 -2 1 2 1 .6 5 0V128H65Z" fill="#ff0000"/><path d="M65 30.8l1.5 -.1 1 -.2 1 -.3 1 .5 1 1.8 1 -1.9 1 -.4 1 .5 1 -.5 1 .1 1 .4 1 -.3 1 0 1 .1 1 -.5 1 .8 1 0 1 -.8 1 .5 1 .2 1 -.1 1 -.1 1 -.5 1 .7 1 0 1 -.4 1 .1 1 -.4 1 .1 1 .4 1 .2 1 -.6 1 -.1 1 .8 1 -.6 1 -.1 1 .2 1 .4 1 -.6 1 .1 1 .5 1 -.4 1 .4 1 .1 1 -.3 2 0 1 -.2 1 -.2 1 -.1 2 0 1 .1 1 .5 1 .1 1 -.4 1 .1 1 -.2 1 .6 1 -.1 1 -.7 1 .3 1 1.7 1 -1.2 1 -.3 1 -.5 1 .3 1 -.3 1 .7 1 -.3 1 -.3 1 .3 1 -.3 1 .2 1 .4 1 .1 1 -.8 1 .7 1 0 1 -.2 1 -.3 1 -.1 1 .3 1 0 1 -.3 1 .5 1 -.1 1 -.2 1 0 1 .5 1 -.1 1 0 1 -.5 1 0 1 1.6 1 -1.6 1 .4 1 -.4 1 -.2 1 .5 1 .3 1 -.3 1 .1 1 .1 1 .1 1 -.1 1 -.6 1 .7 1 -.5 1 .4 1 0 1 -.6 1 .5 1 .1 1 -.3 1 -.2 1 .2 1 -.3 1 .4 1 -.1 1 -.2 1 .2 1 -.2 1 .2 1 2.1 1 -1.8 1 -.6 1 .1 1 -.2 1 .2 1 .1 1 .4 1 -.6 1 .6 1 -.2 1 .2 1 -.2 1 .1 1 -.1 1 -.3 1 .2 1 .2 1 -.5 1 .1 1 -.1 1 .7 1 -.5 1 -.3 1 .6 1 .1 1 -.6 1 .4 1 0 1 -.4 1 .4 1 .2 1 0 1 -.2 1 -.3 1 .3 1 -.3 1 .6 1 -.2 1 -.3 1 .1 1 0 1 -.4 1 .6 1 .1 1 .1 1 -.4 1 2 1 -2 1 .4 1 0 1 -.3 1 -.3 1 .4 1 -.6 1 .3 1 .2 1 -.3 1 .4 1 -.3 1 -.2 1 .3 1 .2 1 .2 1 -.5 1 2.2 1 -2 1 -.1 1 -.4 1 .2 1 .2 1 -.3 1 .5 1 -.1 1 -.3 1 .2 1 .3 1 -.2 1 -.4 1 .5 1 -.4 1 .6 1 -.8 1 .2 1 .4 1 -.6 1 .1 1 .7 1 -.2 1 -.2 1 -.4 1 .7 1 .1 1 -.2 1 .2 1 -.3 1 -.1 1 .1 1 .2 1 .1 1 -.7 1 .4 1 -.1 1 0 1 -.2 1 -.2 1 .1 1 .1 1 .3 1 .2 1 .1 1 -.7 1 .7 1 -.5 1 -.3 1 .6 1 -.1 1 0 1 3.1 1 -3.4 1 -.1 1 .7 1 -.6 1 .2 1 .1 1 -.4 1 .1 1 -.2 1 .2 1 -.2 1 .5 1 -.2 1 -.2 1 .3 1 .3 1 -.4 1 -.2 1 0 1 .6 1 -.2 1 .1 1 -.1 1 -.5 1 2.3 1 -1.7 1 0 1 -.1 1 -.3 1 .3 1 .2 1 -.1 1 0 1 -.6 1 .7 1 -.5 1 .6 1 -.7 1 .5 1 -.5 1 .4 1 .3 1 0 1 -.7 1 .3 1 0 1 .1 1 -.3 1 .2 1 .4 1 -.5 1 2.1 1 -2.3 1 .3 1 -.2 1 .5" fill="none" stroke="#000" stroke-width="0.9" stroke-linejoin="round"/></g><path d="M62 115.5H367M62 91.5H367M62 67.5H367M62 42.5H367M68.5 26V130M80.5 26V130M93.5 26V130M105.5 26V130M118.5 26V130M143.5 26V130M155.5 26V130M168.5 26V130M180.5 26V130M193.5 26V130M218.5 26V130M230.5 26V130M243.5 26V130M255.5 26V130M268.5 26V130M293.5 26V130M305.5 26V130M318.5 26V130M330.5 26V130M343.5 26V130" stroke="rgba(143,143,143,0.38)" stroke-width="1" stroke-dasharray="1 1" fill="none" shape-rendering="crispEdges"/><path d="M62 128.5H367M62 103.5H367M62 79.5H367M62 54.5H367M62 30.5H367M130.5 26V132M205.5 26V132M280.5 26V132M355.5 26V132" stroke="rgba(222,79,79,0.47)" stroke-width="1" stroke-dasharray="1 1" fill="none" shape-rendering="crispEdges"/><path d="M64.6 26V131.4 M61.6 128.1H368" stroke="#4d4d4d" stroke-width="0.9" fill="none"/><path d="M64.6 21l-3.2 5.2h6.4z M372.4 128.1l-5.2 -3.2v6.4z" fill="#801f1f"/><text x="215.8" y="15.4" text-anchor="middle">Null - CPU Usage</text><text x="58.3" y="131.7" text-anchor="end">0</text><text x="58.3" y="107.3" text-anchor="end">100</text><text x="58.3" y="82.9" text-anchor="end">200</text><text x="58.3" y="58.5" text-anchor="end">300</text><text x="58.3" y="34.1" text-anchor="end">400</text><text x="131.5" y="140.2" text-anchor="middle">Dom 00:00</text><text x="281.5" y="140.2" text-anchor="middle">Dom 12:00</text><text transform="translate(13.9 78) rotate(-90)" text-anchor="middle">percent</text><text class="wm" transform="translate(369.3 6.3) rotate(90)">RRDTOOL / TOBI OETIKER</text></svg>
<svg class="ic" style="left:1256px;top:72px" width="17" height="17" viewBox="0 0 17 17"><path d="M10 9.8L14.4 14.2" stroke="#6e4410" stroke-width="3.4" stroke-linecap="round"/><path d="M10.2 10L14.3 14.1" stroke="#f2b03c" stroke-width="1.9" stroke-linecap="round"/><path d="M8.6 8.4l1.6 1.6" stroke="#6a6a8a" stroke-width="1.6"/><circle cx="5.5" cy="5.2" r="4.9" fill="#a8e2f8" stroke="#5f86c4" stroke-width="1"/><circle cx="4.4" cy="4.2" r="2.9" fill="#e6fbff" opacity=".8"/></svg>
<svg class="ic" style="left:1256px;top:93px" width="17" height="17" viewBox="0 0 17 17"><circle cx="7" cy="7.8" r="6.5" fill="#3a6cf2" stroke="#141ea0" stroke-width="1.1"/><path d="M1.4 8.6a5.6 5.6 0 0 0 11.2 0c-3 2-8 2-11.2 0z" fill="#7ab2ff" opacity=".9"/><path d="M2.2 5.6a5 5 0 0 1 9.6 0c-3-1.4-6.6-1.4-9.6 0z" fill="#2448d0" opacity=".6"/><path d="M7 3.8v5.8M4.2 7.4l2.8 3 2.8-3" stroke="#fff" stroke-width="2" fill="none" stroke-linejoin="round" stroke-linecap="round"/></svg>
<svg class="ic" style="left:1256px;top:114px" width="17" height="17" viewBox="0 0 17 17"><path d="M9.4 9L13.3 12.9" stroke="#b45a00" stroke-width="5" stroke-linecap="round"/><path d="M9.2 8.8L13.2 12.8" stroke="#ff9a0c" stroke-width="3.6" stroke-linecap="round"/><path d="M9.6 9.8L12 12.2" stroke="#ffd040" stroke-width="1.3" stroke-linecap="round"/><path d="M4.45 2.37A2.55 2.55 0 1 1 2.27 4.55" stroke="#8288aa" stroke-width="5.1" fill="none"/><path d="M4.45 2.37A2.55 2.55 0 1 1 2.27 4.55" stroke="#e9eaf1" stroke-width="3.5" fill="none"/><path d="M6.6 2.4A3.6 3.6 0 0 1 7.6 7.4" stroke="#fff" stroke-width="1.2" fill="none" opacity=".8"/></svg>
<svg class="ic" style="left:1256px;top:136px" width="17" height="17" viewBox="0 0 17 17"><circle cx="7" cy="7.8" r="6.5" fill="#d2646c" stroke="#7a2226" stroke-width="1.1"/><path d="M1.4 7a5.6 5.6 0 0 1 11.2 0c-3-2-8-2-11.2 0z" fill="#ecb0b4" opacity=".75"/><path d="M7 12v-6.4M4.2 8.2l2.8-3 2.8 3" stroke="#fff" stroke-width="1.9" fill="none" stroke-linejoin="round" stroke-linecap="round"/></svg>
<svg class="g" style="left:1294px;top:66px" width="380" height="160" viewBox="0 0 380 160"><rect width="380" height="160" fill="#f3f3f3"/><path d="M0 0H380L378 2H2V158L0 160Z" fill="#cfcfcf"/><path d="M380 160H0L2 158H378V2L380 0Z" fill="#9e9e9e"/><rect x="65" y="28" width="300" height="100" fill="#fff"/><clipPath id="c3"><rect x="65" y="28" width="300" height="100"/></clipPath><clipPath id="c3o"><rect x="65" y="26" width="300" height="103"/></clipPath><g clip-path="url(#c3)"></g><path d="M62 128.5H367M62 111.5H367M62 95.5H367M62 78.5H367M62 61.5H367M62 44.5H367M62 27.5H367M68.5 26V130M80.5 26V130M93.5 26V130M105.5 26V130M118.5 26V130M143.5 26V130M155.5 26V130M168.5 26V130M180.5 26V130M193.5 26V130M218.5 26V130M230.5 26V130M243.5 26V130M255.5 26V130M268.5 26V130M293.5 26V130M305.5 26V130M318.5 26V130M330.5 26V130M343.5 26V130" stroke="rgba(143,143,143,0.38)" stroke-width="1" stroke-dasharray="1 1" fill="none" shape-rendering="crispEdges"/><path d="M62 120.5H367M62 103.5H367M62 86.5H367M62 69.5H367M62 53.5H367M62 36.5H367M130.5 26V132M205.5 26V132M280.5 26V132M355.5 26V132" stroke="rgba(222,79,79,0.47)" stroke-width="1" stroke-dasharray="1 1" fill="none" shape-rendering="crispEdges"/><path d="M65 120.3l299.5 0" fill="none" stroke="#ff0000" stroke-width="1.1" clip-path="url(#c3o)"/><path d="M64.6 26V131.4 M61.6 128.1H368" stroke="#4d4d4d" stroke-width="0.9" fill="none"/><path d="M64.6 21l-3.2 5.2h6.4z M372.4 128.1l-5.2 -3.2v6.4z" fill="#801f1f"/><text x="215.8" y="15.4" text-anchor="middle">Null - Disk IO Bytes - md1 - /boot</text><text x="58.3" y="124" text-anchor="end">0.0</text><text x="58.3" y="107.2" text-anchor="end">0.2</text><text x="58.3" y="90.4" text-anchor="end">0.4</text><text x="58.3" y="73.6" text-anchor="end">0.6</text><text x="58.3" y="56.8" text-anchor="end">0.8</text><text x="58.3" y="40" text-anchor="end">1.0</text><text x="131.5" y="140.2" text-anchor="middle">Dom 00:00</text><text x="281.5" y="140.2" text-anchor="middle">Dom 12:00</text><text transform="translate(13.9 78) rotate(-90)" text-anchor="middle">Bytes/Second</text><text class="wm" transform="translate(369.3 6.3) rotate(90)">RRDTOOL / TOBI OETIKER</text></svg>
<svg class="ic" style="left:1682px;top:72px" width="17" height="17" viewBox="0 0 17 17"><path d="M10 9.8L14.4 14.2" stroke="#6e4410" stroke-width="3.4" stroke-linecap="round"/><path d="M10.2 10L14.3 14.1" stroke="#f2b03c" stroke-width="1.9" stroke-linecap="round"/><path d="M8.6 8.4l1.6 1.6" stroke="#6a6a8a" stroke-width="1.6"/><circle cx="5.5" cy="5.2" r="4.9" fill="#a8e2f8" stroke="#5f86c4" stroke-width="1"/><circle cx="4.4" cy="4.2" r="2.9" fill="#e6fbff" opacity=".8"/></svg>
<svg class="ic" style="left:1682px;top:93px" width="17" height="17" viewBox="0 0 17 17"><circle cx="7" cy="7.8" r="6.5" fill="#3a6cf2" stroke="#141ea0" stroke-width="1.1"/><path d="M1.4 8.6a5.6 5.6 0 0 0 11.2 0c-3 2-8 2-11.2 0z" fill="#7ab2ff" opacity=".9"/><path d="M2.2 5.6a5 5 0 0 1 9.6 0c-3-1.4-6.6-1.4-9.6 0z" fill="#2448d0" opacity=".6"/><path d="M7 3.8v5.8M4.2 7.4l2.8 3 2.8-3" stroke="#fff" stroke-width="2" fill="none" stroke-linejoin="round" stroke-linecap="round"/></svg>
<svg class="ic" style="left:1682px;top:114px" width="17" height="17" viewBox="0 0 17 17"><path d="M9.4 9L13.3 12.9" stroke="#b45a00" stroke-width="5" stroke-linecap="round"/><path d="M9.2 8.8L13.2 12.8" stroke="#ff9a0c" stroke-width="3.6" stroke-linecap="round"/><path d="M9.6 9.8L12 12.2" stroke="#ffd040" stroke-width="1.3" stroke-linecap="round"/><path d="M4.45 2.37A2.55 2.55 0 1 1 2.27 4.55" stroke="#8288aa" stroke-width="5.1" fill="none"/><path d="M4.45 2.37A2.55 2.55 0 1 1 2.27 4.55" stroke="#e9eaf1" stroke-width="3.5" fill="none"/><path d="M6.6 2.4A3.6 3.6 0 0 1 7.6 7.4" stroke="#fff" stroke-width="1.2" fill="none" opacity=".8"/></svg>
<svg class="ic" style="left:1682px;top:136px" width="17" height="17" viewBox="0 0 17 17"><circle cx="7" cy="7.8" r="6.5" fill="#d2646c" stroke="#7a2226" stroke-width="1.1"/><path d="M1.4 7a5.6 5.6 0 0 1 11.2 0c-3-2-8-2-11.2 0z" fill="#ecb0b4" opacity=".75"/><path d="M7 12v-6.4M4.2 8.2l2.8-3 2.8 3" stroke="#fff" stroke-width="1.9" fill="none" stroke-linejoin="round" stroke-linecap="round"/></svg>
<svg class="g" style="left:15px;top:232px" width="380" height="160" viewBox="0 0 380 160"><rect width="380" height="160" fill="#f3f3f3"/><path d="M0 0H380L378 2H2V158L0 160Z" fill="#cfcfcf"/><path d="M380 160H0L2 158H378V2L380 0Z" fill="#9e9e9e"/><rect x="65" y="28" width="300" height="100" fill="#fff"/><clipPath id="c4"><rect x="65" y="28" width="300" height="100"/></clipPath><clipPath id="c4o"><rect x="65" y="26" width="300" height="103"/></clipPath><g clip-path="url(#c4)"><path d="M65 99.3l1.5 0 1 -1.6 1 -5.4 1 5.4 1 1.6 2 0 1 -1.6 1 -5.4 1 5.4 1 1.6 6 0 1 -1.8 1 -6.2 1 6.2 1 1.8 8 0 1 -3 1 -10 1 10 1 -3 1 5 1 -2.2 1 -10.8 1 10.8 1 1.9 1 -6.7 1 6.7 1 .6 1 -3.3 1 -1.1 1 -12.9 1 12.9 1 5.1 1 -.5 1 -.5 1 .5 1 .5 1 -.5 1 -2.5 1 2.5 1 .5 8 0 1 -.3 1 -1.7 1 1.7 1 .3 176 0 1 -.2 1 -.8 1 .8 1 .2 33 0 1 -1.2 1 -3.8 1 3.8 1 1.2 7 0 1 -8.8 1 -29.2 1 29.2 1 5.8 1 2 1 -2 1 -7.5 1 -52.5 1 52.5V99.3H65Z" fill="#6aea6a"/><path d="M65 99.3l1.5 0 1 -1.6 1 -5.4 1 5.4 1 1.6 2 0 1 -1.6 1 -5.4 1 5.4 1 1.6 6 0 1 -1.8 1 -6.2 1 6.2 1 1.8 8 0 1 -3 1 -10 1 10 1 -3 1 5 1 -2.2 1 -10.8 1 10.8 1 1.9 1 -6.7 1 6.7 1 .6 1 -3.3 1 -1.1 1 -12.9 1 12.9 1 5.1 1 -.5 1 -.5 1 .5 1 .5 1 -.5 1 -2.5 1 2.5 1 .5 8 0 1 -.3 1 -1.7 1 1.7 1 .3 176 0 1 -.2 1 -.8 1 .8 1 .2 33 0 1 -1.2 1 -3.8 1 3.8 1 1.2 7 0 1 -8.8 1 -29.2 1 29.2 1 5.8 1 2 1 -2 1 -7.5 1 -52.5 1 52.5" fill="none" stroke="#00a348" stroke-width="1.1" stroke-linejoin="round"/><path d="M65 99.3l2.5 0 1 .2 1 .8 1 -.8 1 -.2 1 .7 1 2.3 1 -2.3 1 -.7 1 .2 1 .8 1 -.8 1 -.2 2 0 1 .2 1 .8 1 -.8 1 -.2 11 0 1 2.1 1 6.9 1 -6.9 1 2.8 1 12.1 1 -12.1 1 -4.6 1 1.7 1 -1.7 1 2.5 1 9.2 1 -9.2 1 -1.6 1 5.8 1 -5.8 1 -1.2 19 0 1 .3 1 1.7 1 -1.7 1 -.3 34 0 1 4.2 1 13.8 1 -13.8 1 -4.2 1 0 1 .2 1 .8 1 -.8 1 -.2 4 0 1 .3 1 1.7 1 -1.7 1 -.3 121 0 1 .2 1 .8 1 -.8 1 -.2 35 0 1 6 1 15 1 -15 1 -6 2 0 1 .2 1 .8 1 -.8 1 2.6 1 9.2 1 -9.2 1 -2.8 5 0V99.3H65Z" fill="#ffa660"/><path d="M65 99.3l2.5 0 1 .2 1 .8 1 -.8 1 -.2 1 .7 1 2.3 1 -2.3 1 -.7 1 .2 1 .8 1 -.8 1 -.2 2 0 1 .2 1 .8 1 -.8 1 -.2 11 0 1 2.1 1 6.9 1 -6.9 1 2.8 1 12.1 1 -12.1 1 -4.6 1 1.7 1 -1.7 1 2.5 1 9.2 1 -9.2 1 -1.6 1 5.8 1 -5.8 1 -1.2 19 0 1 .3 1 1.7 1 -1.7 1 -.3 34 0 1 4.2 1 13.8 1 -13.8 1 -4.2 1 0 1 .2 1 .8 1 -.8 1 -.2 4 0 1 .3 1 1.7 1 -1.7 1 -.3 121 0 1 .2 1 .8 1 -.8 1 -.2 35 0 1 6 1 15 1 -15 1 -6 2 0 1 .2 1 .8 1 -.8 1 2.6 1 9.2 1 -9.2 1 -2.8 5 0" fill="none" stroke="#ff1a1a" stroke-width="1.2" stroke-linejoin="round"/></g><path d="M62 111.5H367M62 87.5H367M62 63.5H367M62 39.5H367M68.5 26V130M80.5 26V130M93.5 26V130M105.5 26V130M118.5 26V130M143.5 26V130M155.5 26V130M168.5 26V130M180.5 26V130M193.5 26V130M218.5 26V130M230.5 26V130M243.5 26V130M255.5 26V130M268.5 26V130M293.5 26V130M305.5 26V130M318.5 26V130M330.5 26V130M343.5 26V130" stroke="rgba(143,143,143,0.38)" stroke-width="1" stroke-dasharray="1 1" fill="none" shape-rendering="crispEdges"/><path d="M62 123.5H367M62 99.5H367M62 75.5H367M62 51.5H367M130.5 26V132M205.5 26V132M280.5 26V132M355.5 26V132" stroke="rgba(222,79,79,0.47)" stroke-width="1" stroke-dasharray="1 1" fill="none" shape-rendering="crispEdges"/><path d="M64.6 26V131.4 M61.6 128.1H368" stroke="#4d4d4d" stroke-width="0.9" fill="none"/><path d="M64.6 21l-3.2 5.2h6.4z M372.4 128.1l-5.2 -3.2v6.4z" fill="#801f1f"/><text x="215.8" y="15.4" text-anchor="middle">Null - Disk IO Bytes - md2 - /</text><text x="58.3" y="127" text-anchor="end">-10 k</text><text x="46.3" y="103" text-anchor="end">0</text><text x="58.3" y="79" text-anchor="end">10 k</text><text x="58.3" y="55" text-anchor="end">20 k</text><text x="131.5" y="140.2" text-anchor="middle">Dom 00:00</text><text x="281.5" y="140.2" text-anchor="middle">Dom 12:00</text><text transform="translate(13.9 78) rotate(-90)" text-anchor="middle">Bytes/Second</text><text class="wm" transform="translate(369.3 6.3) rotate(90)">RRDTOOL / TOBI OETIKER</text></svg>
<svg class="ic" style="left:403px;top:238px" width="17" height="17" viewBox="0 0 17 17"><path d="M10 9.8L14.4 14.2" stroke="#6e4410" stroke-width="3.4" stroke-linecap="round"/><path d="M10.2 10L14.3 14.1" stroke="#f2b03c" stroke-width="1.9" stroke-linecap="round"/><path d="M8.6 8.4l1.6 1.6" stroke="#6a6a8a" stroke-width="1.6"/><circle cx="5.5" cy="5.2" r="4.9" fill="#a8e2f8" stroke="#5f86c4" stroke-width="1"/><circle cx="4.4" cy="4.2" r="2.9" fill="#e6fbff" opacity=".8"/></svg>
<svg class="ic" style="left:403px;top:259px" width="17" height="17" viewBox="0 0 17 17"><circle cx="7" cy="7.8" r="6.5" fill="#3a6cf2" stroke="#141ea0" stroke-width="1.1"/><path d="M1.4 8.6a5.6 5.6 0 0 0 11.2 0c-3 2-8 2-11.2 0z" fill="#7ab2ff" opacity=".9"/><path d="M2.2 5.6a5 5 0 0 1 9.6 0c-3-1.4-6.6-1.4-9.6 0z" fill="#2448d0" opacity=".6"/><path d="M7 3.8v5.8M4.2 7.4l2.8 3 2.8-3" stroke="#fff" stroke-width="2" fill="none" stroke-linejoin="round" stroke-linecap="round"/></svg>
<svg class="ic" style="left:403px;top:280px" width="17" height="17" viewBox="0 0 17 17"><path d="M9.4 9L13.3 12.9" stroke="#b45a00" stroke-width="5" stroke-linecap="round"/><path d="M9.2 8.8L13.2 12.8" stroke="#ff9a0c" stroke-width="3.6" stroke-linecap="round"/><path d="M9.6 9.8L12 12.2" stroke="#ffd040" stroke-width="1.3" stroke-linecap="round"/><path d="M4.45 2.37A2.55 2.55 0 1 1 2.27 4.55" stroke="#8288aa" stroke-width="5.1" fill="none"/><path d="M4.45 2.37A2.55 2.55 0 1 1 2.27 4.55" stroke="#e9eaf1" stroke-width="3.5" fill="none"/><path d="M6.6 2.4A3.6 3.6 0 0 1 7.6 7.4" stroke="#fff" stroke-width="1.2" fill="none" opacity=".8"/></svg>
<svg class="ic" style="left:403px;top:302px" width="17" height="17" viewBox="0 0 17 17"><circle cx="7" cy="7.8" r="6.5" fill="#d2646c" stroke="#7a2226" stroke-width="1.1"/><path d="M1.4 7a5.6 5.6 0 0 1 11.2 0c-3-2-8-2-11.2 0z" fill="#ecb0b4" opacity=".75"/><path d="M7 12v-6.4M4.2 8.2l2.8-3 2.8 3" stroke="#fff" stroke-width="1.9" fill="none" stroke-linejoin="round" stroke-linecap="round"/></svg>
<svg class="g" style="left:442px;top:232px" width="380" height="160" viewBox="0 0 380 160"><rect width="380" height="160" fill="#f3f3f3"/><path d="M0 0H380L378 2H2V158L0 160Z" fill="#cfcfcf"/><path d="M380 160H0L2 158H378V2L380 0Z" fill="#9e9e9e"/><rect x="65" y="28" width="300" height="100" fill="#fff"/><clipPath id="c5"><rect x="65" y="28" width="300" height="100"/></clipPath><clipPath id="c5o"><rect x="65" y="26" width="300" height="103"/></clipPath><g clip-path="url(#c5)"><path d="M65 106.6l1.5 -.7 1 -2.3 1 2.3 1 .7 13 0 1 -8.4 1 -28 1 28 1 8.4 83 0 1 -16.3 1 -54.3 1 54.3 1 16.3 191 0V106.6H65Z" fill="#6aea6a"/><path d="M65 106.6l1.5 -.7 1 -2.3 1 2.3 1 .7 13 0 1 -8.4 1 -28 1 28 1 8.4 83 0 1 -16.3 1 -54.3 1 54.3 1 16.3 191 0" fill="none" stroke="#00a348" stroke-width="1.1" stroke-linejoin="round"/><path d="M65 118.6l1.5 -8 1 -2 16 0 1 5 1 -5 15 0 1 1 1 -1 7 0 1 1 1 -1 64 0 1 .5 1 8.5 1 -8.5 1 -.5 4 0 1 .8 1 10.2 1 -10 1 0 1 .1 1 -.5 1 -.5 1 -.1 1 .8 1 -.2 1 .2 1 -.4 1 0 1 .9 1 -.3 1 -.7 1 .8 1 -.5 1 0 1 .4 1 .1 1 -1.1 1 .2 1 .4 1 -.3 1 .4 1 -.5 1 .3 1 -.1 1 -.1 1 .4 1 -.3 1 -.3 1 .9 1 -.9 1 .3 1 .2 1 .6 1 -.7 1 .5 1 -.2 2 0 1 .2 1 .1 1 -.9 1 .4 1 -.2 1 -.1 1 .6 1 -.2 1 .6 1 -1 1 .1 1 0 1 -.3 1 1.1 1 -.9 1 -.1 1 .1 1 -.2 1 .9 1 -.2 1 .3 1 1.8 1 -1.7 1 -.1 1 -.7 1 1.7 1 10.8 1 -9.8 1 -2.9 1 -.1 1 .1 1 .8 1 -.6 1 .1 1 -.4 1 -.1 1 .6 1 -.5 1 .8 1 -.8 1 .7 1 .2 1 -.5 1 .3 1 -.7 1 .6 1 .3 1 -.9 1 -.1 1 .6 1 -.5 1 2.3 1 -1.7 1 1.8 1 -2.2 1 -.2 1 .6 1 -.4 1 .1 1 .5 1 -.7 1 0 1 .4 1 -.5 1 .4 1 -.2 1 .2 1 .4 1 -.2 1 .4 1 -.9 1 .4 1 .1 1 -.3 1 -.3 1 .1 1 1 1 -.5 1 -.7 1 1 1 -.1 1 -.9 1 .3 1 .2 1 .7 1 -1 1 .4 1 -.2 1 .1 1 -.3 1 .7 2 0 1 .1 1 -.6 1 .6 1 -.8 1 .7 1 0 1 -.5 1 .4 1 -.1 1 .5 1 -.8 1 .9 1 -.3 1 -.9 1 .4 1 -.4 1 .3 1 .7 1 0 1 -.7 1 -.4 1 .7 1 -.1 1 .2 1 -.7 1 .4 1 .6 1 2.2 1 -2.5 1 .2 1 0 1 -.7 1 .8 1 -.3 1 .1 1 -.5 1 .8 1 -.3 1 .2 1 -.4 1 .5 1 -.1 1 -.8 1 .4 1 -.3V106.6H65Z" fill="#ffa660"/><path d="M65 118.6l1.5 -8 1 -2 16 0 1 5 1 -5 15 0 1 1 1 -1 7 0 1 1 1 -1 64 0 1 .5 1 8.5 1 -8.5 1 -.5 4 0 1 .8 1 10.2 1 -10 1 0 1 .1 1 -.5 1 -.5 1 -.1 1 .8 1 -.2 1 .2 1 -.4 1 0 1 .9 1 -.3 1 -.7 1 .8 1 -.5 1 0 1 .4 1 .1 1 -1.1 1 .2 1 .4 1 -.3 1 .4 1 -.5 1 .3 1 -.1 1 -.1 1 .4 1 -.3 1 -.3 1 .9 1 -.9 1 .3 1 .2 1 .6 1 -.7 1 .5 1 -.2 2 0 1 .2 1 .1 1 -.9 1 .4 1 -.2 1 -.1 1 .6 1 -.2 1 .6 1 -1 1 .1 1 0 1 -.3 1 1.1 1 -.9 1 -.1 1 .1 1 -.2 1 .9 1 -.2 1 .3 1 1.8 1 -1.7 1 -.1 1 -.7 1 1.7 1 10.8 1 -9.8 1 -2.9 1 -.1 1 .1 1 .8 1 -.6 1 .1 1 -.4 1 -.1 1 .6 1 -.5 1 .8 1 -.8 1 .7 1 .2 1 -.5 1 .3 1 -.7 1 .6 1 .3 1 -.9 1 -.1 1 .6 1 -.5 1 2.3 1 -1.7 1 1.8 1 -2.2 1 -.2 1 .6 1 -.4 1 .1 1 .5 1 -.7 1 0 1 .4 1 -.5 1 .4 1 -.2 1 .2 1 .4 1 -.2 1 .4 1 -.9 1 .4 1 .1 1 -.3 1 -.3 1 .1 1 1 1 -.5 1 -.7 1 1 1 -.1 1 -.9 1 .3 1 .2 1 .7 1 -1 1 .4 1 -.2 1 .1 1 -.3 1 .7 2 0 1 .1 1 -.6 1 .6 1 -.8 1 .7 1 0 1 -.5 1 .4 1 -.1 1 .5 1 -.8 1 .9 1 -.3 1 -.9 1 .4 1 -.4 1 .3 1 .7 1 0 1 -.7 1 -.4 1 .7 1 -.1 1 .2 1 -.7 1 .4 1 .6 1 2.2 1 -2.5 1 .2 1 0 1 -.7 1 .8 1 -.3 1 .1 1 -.5 1 .8 1 -.3 1 .2 1 -.4 1 .5 1 -.1 1 -.8 1 .4 1 -.3" fill="none" stroke="#ff1a1a" stroke-width="1.2" stroke-linejoin="round"/></g><path d="M62 122.5H367M62 117.5H367M62 112.5H367M62 101.5H367M62 95.5H367M62 90.5H367M62 79.5H367M62 74.5H367M62 68.5H367M62 57.5H367M62 52.5H367M62 46.5H367M62 36.5H367M62 30.5H367M68.5 26V130M80.5 26V130M93.5 26V130M105.5 26V130M118.5 26V130M143.5 26V130M155.5 26V130M168.5 26V130M180.5 26V130M193.5 26V130M218.5 26V130M230.5 26V130M243.5 26V130M255.5 26V130M268.5 26V130M293.5 26V130M305.5 26V130M318.5 26V130M330.5 26V130M343.5 26V130" stroke="rgba(143,143,143,0.38)" stroke-width="1" stroke-dasharray="1 1" fill="none" shape-rendering="crispEdges"/><path d="M62 128.5H367M62 106.5H367M62 84.5H367M62 63.5H367M62 41.5H367M130.5 26V132M205.5 26V132M280.5 26V132M355.5 26V132" stroke="rgba(222,79,79,0.47)" stroke-width="1" stroke-dasharray="1 1" fill="none" shape-rendering="crispEdges"/><path d="M64.6 26V131.4 M61.6 128.1H368" stroke="#4d4d4d" stroke-width="0.9" fill="none"/><path d="M64.6 21l-3.2 5.2h6.4z M372.4 128.1l-5.2 -3.2v6.4z" fill="#801f1f"/><text x="215.8" y="15.4" text-anchor="middle">Null - Disk IO Bytes - md3 - /var</text><text x="58.3" y="132" text-anchor="end">-200 k</text><text x="46.3" y="110.3" text-anchor="end">0</text><text x="58.3" y="88.6" text-anchor="end">200 k</text><text x="58.3" y="66.9" text-anchor="end">400 k</text><text x="58.3" y="45.2" text-anchor="end">600 k</text><text x="131.5" y="140.2" text-anchor="middle">Dom 00:00</text><text x="281.5" y="140.2" text-anchor="middle">Dom 12:00</text><text transform="translate(13.9 78) rotate(-90)" text-anchor="middle">Bytes/Second</text><text class="wm" transform="translate(369.3 6.3) rotate(90)">RRDTOOL / TOBI OETIKER</text></svg>
<svg class="ic" style="left:830px;top:238px" width="17" height="17" viewBox="0 0 17 17"><path d="M10 9.8L14.4 14.2" stroke="#6e4410" stroke-width="3.4" stroke-linecap="round"/><path d="M10.2 10L14.3 14.1" stroke="#f2b03c" stroke-width="1.9" stroke-linecap="round"/><path d="M8.6 8.4l1.6 1.6" stroke="#6a6a8a" stroke-width="1.6"/><circle cx="5.5" cy="5.2" r="4.9" fill="#a8e2f8" stroke="#5f86c4" stroke-width="1"/><circle cx="4.4" cy="4.2" r="2.9" fill="#e6fbff" opacity=".8"/></svg>
<svg class="ic" style="left:830px;top:259px" width="17" height="17" viewBox="0 0 17 17"><circle cx="7" cy="7.8" r="6.5" fill="#3a6cf2" stroke="#141ea0" stroke-width="1.1"/><path d="M1.4 8.6a5.6 5.6 0 0 0 11.2 0c-3 2-8 2-11.2 0z" fill="#7ab2ff" opacity=".9"/><path d="M2.2 5.6a5 5 0 0 1 9.6 0c-3-1.4-6.6-1.4-9.6 0z" fill="#2448d0" opacity=".6"/><path d="M7 3.8v5.8M4.2 7.4l2.8 3 2.8-3" stroke="#fff" stroke-width="2" fill="none" stroke-linejoin="round" stroke-linecap="round"/></svg>
<svg class="ic" style="left:830px;top:280px" width="17" height="17" viewBox="0 0 17 17"><path d="M9.4 9L13.3 12.9" stroke="#b45a00" stroke-width="5" stroke-linecap="round"/><path d="M9.2 8.8L13.2 12.8" stroke="#ff9a0c" stroke-width="3.6" stroke-linecap="round"/><path d="M9.6 9.8L12 12.2" stroke="#ffd040" stroke-width="1.3" stroke-linecap="round"/><path d="M4.45 2.37A2.55 2.55 0 1 1 2.27 4.55" stroke="#8288aa" stroke-width="5.1" fill="none"/><path d="M4.45 2.37A2.55 2.55 0 1 1 2.27 4.55" stroke="#e9eaf1" stroke-width="3.5" fill="none"/><path d="M6.6 2.4A3.6 3.6 0 0 1 7.6 7.4" stroke="#fff" stroke-width="1.2" fill="none" opacity=".8"/></svg>
<svg class="ic" style="left:830px;top:302px" width="17" height="17" viewBox="0 0 17 17"><circle cx="7" cy="7.8" r="6.5" fill="#d2646c" stroke="#7a2226" stroke-width="1.1"/><path d="M1.4 7a5.6 5.6 0 0 1 11.2 0c-3-2-8-2-11.2 0z" fill="#ecb0b4" opacity=".75"/><path d="M7 12v-6.4M4.2 8.2l2.8-3 2.8 3" stroke="#fff" stroke-width="1.9" fill="none" stroke-linejoin="round" stroke-linecap="round"/></svg>
<svg class="g" style="left:868px;top:232px" width="380" height="160" viewBox="0 0 380 160"><rect width="380" height="160" fill="#f3f3f3"/><path d="M0 0H380L378 2H2V158L0 160Z" fill="#cfcfcf"/><path d="M380 160H0L2 158H378V2L380 0Z" fill="#9e9e9e"/><rect x="65" y="28" width="300" height="100" fill="#fff"/><clipPath id="c6"><rect x="65" y="28" width="300" height="100"/></clipPath><clipPath id="c6o"><rect x="65" y="26" width="300" height="103"/></clipPath><g clip-path="url(#c6)"><path d="M65 108.5l17.5 0 1 -16.8 1 -55.8 1 55.8 1 16.8 259 0 1 -.7 1 -3.8 1 3.8 1 .7 15 0V108.5H65Z" fill="#6aea6a"/><path d="M65 108.5l17.5 0 1 -16.8 1 -55.8 1 55.8 1 16.8 259 0 1 -.7 1 -3.8 1 3.8 1 .7 15 0" fill="none" stroke="#00a348" stroke-width="1.1" stroke-linejoin="round"/><path d="M65 108.5l17.5 0 1 2.8 1 9.2 1 -9.2 1 -2.8 259 0 1 2.5 1 8.5 1 -8.5 1 -2.5 15 0V108.5H65Z" fill="#ffa660"/><path d="M65 108.5l17.5 0 1 2.8 1 9.2 1 -9.2 1 -2.8 259 0 1 2.5 1 8.5 1 -8.5 1 -2.5 15 0" fill="none" stroke="#ff1a1a" stroke-width="1.2" stroke-linejoin="round"/></g><path d="M62 125.5H367M62 117.5H367M62 99.5H367M62 91.5H367M62 82.5H367M62 74.5H367M62 56.5H367M62 48.5H367M62 39.5H367M62 31.5H367M68.5 26V130M80.5 26V130M93.5 26V130M105.5 26V130M118.5 26V130M143.5 26V130M155.5 26V130M168.5 26V130M180.5 26V130M193.5 26V130M218.5 26V130M230.5 26V130M243.5 26V130M255.5 26V130M268.5 26V130M293.5 26V130M305.5 26V130M318.5 26V130M330.5 26V130M343.5 26V130" stroke="rgba(143,143,143,0.38)" stroke-width="1" stroke-dasharray="1 1" fill="none" shape-rendering="crispEdges"/><path d="M62 108.5H367M62 65.5H367M130.5 26V132M205.5 26V132M280.5 26V132M355.5 26V132" stroke="rgba(222,79,79,0.47)" stroke-width="1" stroke-dasharray="1 1" fill="none" shape-rendering="crispEdges"/><path d="M64.6 26V131.4 M61.6 128.1H368" stroke="#4d4d4d" stroke-width="0.9" fill="none"/><path d="M64.6 21l-3.2 5.2h6.4z M372.4 128.1l-5.2 -3.2v6.4z" fill="#801f1f"/><text x="215.8" y="15.4" text-anchor="middle">Null - Disk IO Bytes - md5 - /usr/portage</text><text x="46.3" y="112.2" text-anchor="end">0</text><text x="58.3" y="69.2" text-anchor="end">100 k</text><text x="131.5" y="140.2" text-anchor="middle">Dom 00:00</text><text x="281.5" y="140.2" text-anchor="middle">Dom 12:00</text><text transform="translate(13.9 78) rotate(-90)" text-anchor="middle">Bytes/Second</text><text class="wm" transform="translate(369.3 6.3) rotate(90)">RRDTOOL / TOBI OETIKER</text></svg>
<svg class="ic" style="left:1256px;top:238px" width="17" height="17" viewBox="0 0 17 17"><path d="M10 9.8L14.4 14.2" stroke="#6e4410" stroke-width="3.4" stroke-linecap="round"/><path d="M10.2 10L14.3 14.1" stroke="#f2b03c" stroke-width="1.9" stroke-linecap="round"/><path d="M8.6 8.4l1.6 1.6" stroke="#6a6a8a" stroke-width="1.6"/><circle cx="5.5" cy="5.2" r="4.9" fill="#a8e2f8" stroke="#5f86c4" stroke-width="1"/><circle cx="4.4" cy="4.2" r="2.9" fill="#e6fbff" opacity=".8"/></svg>
<svg class="ic" style="left:1256px;top:259px" width="17" height="17" viewBox="0 0 17 17"><circle cx="7" cy="7.8" r="6.5" fill="#3a6cf2" stroke="#141ea0" stroke-width="1.1"/><path d="M1.4 8.6a5.6 5.6 0 0 0 11.2 0c-3 2-8 2-11.2 0z" fill="#7ab2ff" opacity=".9"/><path d="M2.2 5.6a5 5 0 0 1 9.6 0c-3-1.4-6.6-1.4-9.6 0z" fill="#2448d0" opacity=".6"/><path d="M7 3.8v5.8M4.2 7.4l2.8 3 2.8-3" stroke="#fff" stroke-width="2" fill="none" stroke-linejoin="round" stroke-linecap="round"/></svg>
<svg class="ic" style="left:1256px;top:280px" width="17" height="17" viewBox="0 0 17 17"><path d="M9.4 9L13.3 12.9" stroke="#b45a00" stroke-width="5" stroke-linecap="round"/><path d="M9.2 8.8L13.2 12.8" stroke="#ff9a0c" stroke-width="3.6" stroke-linecap="round"/><path d="M9.6 9.8L12 12.2" stroke="#ffd040" stroke-width="1.3" stroke-linecap="round"/><path d="M4.45 2.37A2.55 2.55 0 1 1 2.27 4.55" stroke="#8288aa" stroke-width="5.1" fill="none"/><path d="M4.45 2.37A2.55 2.55 0 1 1 2.27 4.55" stroke="#e9eaf1" stroke-width="3.5" fill="none"/><path d="M6.6 2.4A3.6 3.6 0 0 1 7.6 7.4" stroke="#fff" stroke-width="1.2" fill="none" opacity=".8"/></svg>
<svg class="ic" style="left:1256px;top:302px" width="17" height="17" viewBox="0 0 17 17"><circle cx="7" cy="7.8" r="6.5" fill="#d2646c" stroke="#7a2226" stroke-width="1.1"/><path d="M1.4 7a5.6 5.6 0 0 1 11.2 0c-3-2-8-2-11.2 0z" fill="#ecb0b4" opacity=".75"/><path d="M7 12v-6.4M4.2 8.2l2.8-3 2.8 3" stroke="#fff" stroke-width="1.9" fill="none" stroke-linejoin="round" stroke-linecap="round"/></svg>
<svg class="g" style="left:1294px;top:232px" width="380" height="160" viewBox="0 0 380 160"><rect width="380" height="160" fill="#f3f3f3"/><path d="M0 0H380L378 2H2V158L0 160Z" fill="#cfcfcf"/><path d="M380 160H0L2 158H378V2L380 0Z" fill="#9e9e9e"/><rect x="65" y="28" width="300" height="100" fill="#fff"/><clipPath id="c7"><rect x="65" y="28" width="300" height="100"/></clipPath><clipPath id="c7o"><rect x="65" y="26" width="300" height="103"/></clipPath><g clip-path="url(#c7)"><path d="M65 104.7l1.5 -3 1 -1 1 2 1 -1.5 1 1.5 1 1 1 1 24 0 1 -5 1 -5 1 8 1 -3.5 1 -3.5 1 4.5 1 4.5 8 0 1 -4.5 1 -4.5 1 9 7 0 1 -22.8 1 -22.9 1 -22.8 1 34.2 1 34.3 5 0 1 -20.9 1 -20.9 1 10.4 1 10.4 1 -.7 1 -.6 1 -.7 1 1.5 1 1.5 1 -1.5 1 -1.5 1 1 1 18 1 -7 1 -7 1 -3.5 1 -3.5 1 3 1 -3 1 3 1 3 1 -1.5 1 -1.5 1 -4 1 -4 1 2 1 2.5 1 2.5 1 11.5 1 11.5 2 0 1 -21.3 1 -21.2 1 6.2 1 6.3 1 16 1 -19 1 -4 1 2 1 4 1 4 1 -8 1 35 189 0V104.7H65Z" fill="#6aea6a"/><path d="M65 104.7l1.5 -3 1 -1 1 2 1 -1.5 1 1.5 1 1 1 1 24 0 1 -5 1 -5 1 8 1 -3.5 1 -3.5 1 4.5 1 4.5 8 0 1 -4.5 1 -4.5 1 9 7 0 1 -22.8 1 -22.9 1 -22.8 1 34.2 1 34.3 5 0 1 -20.9 1 -20.9 1 10.4 1 10.4 1 -.7 1 -.6 1 -.7 1 1.5 1 1.5 1 -1.5 1 -1.5 1 1 1 18 1 -7 1 -7 1 -3.5 1 -3.5 1 3 1 -3 1 3 1 3 1 -1.5 1 -1.5 1 -4 1 -4 1 2 1 2.5 1 2.5 1 11.5 1 11.5 2 0 1 -21.3 1 -21.2 1 6.2 1 6.3 1 16 1 -19 1 -4 1 2 1 4 1 4 1 -8 1 35 189 0" fill="none" stroke="#00a348" stroke-width="1.1" stroke-linejoin="round"/><path d="M65 120.7l1.5 -10.7 1 -3.3 1 .8 1 2.7 1 -3 1 2 1 -2.2 1 .6 1 2.7 1 -2.8 1 1.5 1 -.6 1 -.1 1 .2 1 -1.1 1 2.3 1 -2.7 1 .5 1 -.7 1 .9 1 .5 1 1.7 1 -1.8 1 -1 1 .5 1 2.7 1 -3.4 1 2 1 -.8 1 1 1 -1.2 1 1.3 1 -.7 1 .5 1 .9 1 -1.1 1 -1.6 1 -.3 1 3.2 1 -1.6 1 -1.1 1 2.7 1 -1.3 1 .5 1 .6 1 -2.2 1 .3 1 1.9 1 -2.7 1 2.3 1 -2.4 1 2.1 1 0 1 .9 1 -.4 1 -1.2 1 -1.1 1 -.2 1 1.4 1 -.1 1 -1.5 1 3 1 -1.5 1 .7 1 -1.7 1 .1 1 -.9 1 1.2 1 -.2 1 .5 1 -.1 1 1.6 1 .2 1 -2.6 1 .8 1 -.8 1 1.8 1 1.1 1 -2.8 1 2.1 1 -1.7 1 -1.1 1 2.8 1 -1.6 1 -.6 1 1 1 -.8 1 .7 1 .1 1 -.1 1 .6 1 -1.1 1 -.7 1 0 1 .1 1 1.5 1 -.6 1 1.6 1 -1.1 1 .7 1 1 1 -3.3 1 -.1 1 .4 1 .9 1 .7 1 .6 1 -1.4 1 2.2 1 -3.5 1 3 1 -2.2 1 2.4 1 -3.1 1 3.4 1 -.8 1 .9 1 -1.5 1 -1.8 1 1.8 1 -1.9 1 -1 1 .4 1 -1.1 1 -.5 109 0 1 .8 7 0 1 2.5 1 6.7 1 -6.7 1 -2.5 3 0 1 -.8 28 0 1 2 1 1.8 1 -.1 1 -1.1 1 -.2 1 1.7 1 -.5 1 -1.1 1 1.1 1 1 1 0 1 -.9 1 -.3 1 -.1 1 -.5 1 -.1 1 .9 1 -1.2 1 2.2 1 -.1 1 -2.5V104.7H65Z" fill="#ffa660"/><path d="M65 120.7l1.5 -10.7 1 -3.3 1 .8 1 2.7 1 -3 1 2 1 -2.2 1 .6 1 2.7 1 -2.8 1 1.5 1 -.6 1 -.1 1 .2 1 -1.1 1 2.3 1 -2.7 1 .5 1 -.7 1 .9 1 .5 1 1.7 1 -1.8 1 -1 1 .5 1 2.7 1 -3.4 1 2 1 -.8 1 1 1 -1.2 1 1.3 1 -.7 1 .5 1 .9 1 -1.1 1 -1.6 1 -.3 1 3.2 1 -1.6 1 -1.1 1 2.7 1 -1.3 1 .5 1 .6 1 -2.2 1 .3 1 1.9 1 -2.7 1 2.3 1 -2.4 1 2.1 1 0 1 .9 1 -.4 1 -1.2 1 -1.1 1 -.2 1 1.4 1 -.1 1 -1.5 1 3 1 -1.5 1 .7 1 -1.7 1 .1 1 -.9 1 1.2 1 -.2 1 .5 1 -.1 1 1.6 1 .2 1 -2.6 1 .8 1 -.8 1 1.8 1 1.1 1 -2.8 1 2.1 1 -1.7 1 -1.1 1 2.8 1 -1.6 1 -.6 1 1 1 -.8 1 .7 1 .1 1 -.1 1 .6 1 -1.1 1 -.7 1 0 1 .1 1 1.5 1 -.6 1 1.6 1 -1.1 1 .7 1 1 1 -3.3 1 -.1 1 .4 1 .9 1 .7 1 .6 1 -1.4 1 2.2 1 -3.5 1 3 1 -2.2 1 2.4 1 -3.1 1 3.4 1 -.8 1 .9 1 -1.5 1 -1.8 1 1.8 1 -1.9 1 -1 1 .4 1 -1.1 1 -.5 109 0 1 .8 7 0 1 2.5 1 6.7 1 -6.7 1 -2.5 3 0 1 -.8 28 0 1 2 1 1.8 1 -.1 1 -1.1 1 -.2 1 1.7 1 -.5 1 -1.1 1 1.1 1 1 1 0 1 -.9 1 -.3 1 -.1 1 -.5 1 -.1 1 .9 1 -1.2 1 2.2 1 -.1 1 -2.5" fill="none" stroke="#ff1a1a" stroke-width="1.2" stroke-linejoin="round"/></g><path d="M62 125.5H367M62 119.5H367M62 114.5H367M62 109.5H367M62 99.5H367M62 94.5H367M62 89.5H367M62 84.5H367M62 74.5H367M62 69.5H367M62 64.5H367M62 58.5H367M62 48.5H367M62 43.5H367M62 38.5H367M62 33.5H367M68.5 26V130M80.5 26V130M93.5 26V130M105.5 26V130M118.5 26V130M143.5 26V130M155.5 26V130M168.5 26V130M180.5 26V130M193.5 26V130M218.5 26V130M230.5 26V130M243.5 26V130M255.5 26V130M268.5 26V130M293.5 26V130M305.5 26V130M318.5 26V130M330.5 26V130M343.5 26V130" stroke="rgba(143,143,143,0.38)" stroke-width="1" stroke-dasharray="1 1" fill="none" shape-rendering="crispEdges"/><path d="M62 104.5H367M62 79.5H367M62 53.5H367M62 28.5H367M130.5 26V132M205.5 26V132M280.5 26V132M355.5 26V132" stroke="rgba(222,79,79,0.47)" stroke-width="1" stroke-dasharray="1 1" fill="none" shape-rendering="crispEdges"/><path d="M64.6 26V131.4 M61.6 128.1H368" stroke="#4d4d4d" stroke-width="0.9" fill="none"/><path d="M64.6 21l-3.2 5.2h6.4z M372.4 128.1l-5.2 -3.2v6.4z" fill="#801f1f"/><text x="215.8" y="15.4" text-anchor="middle">Null - Disk IO Bytes - md6 - /home</text><text x="46.3" y="108.4" text-anchor="end">0</text><text x="58.3" y="83" text-anchor="end">100 k</text><text x="58.3" y="57.6" text-anchor="end">200 k</text><text x="58.3" y="32.2" text-anchor="end">300 k</text><text x="131.5" y="140.2" text-anchor="middle">Dom 00:00</text><text x="281.5" y="140.2" text-anchor="middle">Dom 12:00</text><text transform="translate(13.9 78) rotate(-90)" text-anchor="middle">Bytes/Second</text><text class="wm" transform="translate(369.3 6.3) rotate(90)">RRDTOOL / TOBI OETIKER</text></svg>
<svg class="ic" style="left:1682px;top:238px" width="17" height="17" viewBox="0 0 17 17"><path d="M10 9.8L14.4 14.2" stroke="#6e4410" stroke-width="3.4" stroke-linecap="round"/><path d="M10.2 10L14.3 14.1" stroke="#f2b03c" stroke-width="1.9" stroke-linecap="round"/><path d="M8.6 8.4l1.6 1.6" stroke="#6a6a8a" stroke-width="1.6"/><circle cx="5.5" cy="5.2" r="4.9" fill="#a8e2f8" stroke="#5f86c4" stroke-width="1"/><circle cx="4.4" cy="4.2" r="2.9" fill="#e6fbff" opacity=".8"/></svg>
<svg class="ic" style="left:1682px;top:259px" width="17" height="17" viewBox="0 0 17 17"><circle cx="7" cy="7.8" r="6.5" fill="#3a6cf2" stroke="#141ea0" stroke-width="1.1"/><path d="M1.4 8.6a5.6 5.6 0 0 0 11.2 0c-3 2-8 2-11.2 0z" fill="#7ab2ff" opacity=".9"/><path d="M2.2 5.6a5 5 0 0 1 9.6 0c-3-1.4-6.6-1.4-9.6 0z" fill="#2448d0" opacity=".6"/><path d="M7 3.8v5.8M4.2 7.4l2.8 3 2.8-3" stroke="#fff" stroke-width="2" fill="none" stroke-linejoin="round" stroke-linecap="round"/></svg>
<svg class="ic" style="left:1682px;top:280px" width="17" height="17" viewBox="0 0 17 17"><path d="M9.4 9L13.3 12.9" stroke="#b45a00" stroke-width="5" stroke-linecap="round"/><path d="M9.2 8.8L13.2 12.8" stroke="#ff9a0c" stroke-width="3.6" stroke-linecap="round"/><path d="M9.6 9.8L12 12.2" stroke="#ffd040" stroke-width="1.3" stroke-linecap="round"/><path d="M4.45 2.37A2.55 2.55 0 1 1 2.27 4.55" stroke="#8288aa" stroke-width="5.1" fill="none"/><path d="M4.45 2.37A2.55 2.55 0 1 1 2.27 4.55" stroke="#e9eaf1" stroke-width="3.5" fill="none"/><path d="M6.6 2.4A3.6 3.6 0 0 1 7.6 7.4" stroke="#fff" stroke-width="1.2" fill="none" opacity=".8"/></svg>
<svg class="ic" style="left:1682px;top:302px" width="17" height="17" viewBox="0 0 17 17"><circle cx="7" cy="7.8" r="6.5" fill="#d2646c" stroke="#7a2226" stroke-width="1.1"/><path d="M1.4 7a5.6 5.6 0 0 1 11.2 0c-3-2-8-2-11.2 0z" fill="#ecb0b4" opacity=".75"/><path d="M7 12v-6.4M4.2 8.2l2.8-3 2.8 3" stroke="#fff" stroke-width="1.9" fill="none" stroke-linejoin="round" stroke-linecap="round"/></svg>
<svg class="g" style="left:15px;top:398px" width="380" height="160" viewBox="0 0 380 160"><rect width="380" height="160" fill="#f3f3f3"/><path d="M0 0H380L378 2H2V158L0 160Z" fill="#cfcfcf"/><path d="M380 160H0L2 158H378V2L380 0Z" fill="#9e9e9e"/><rect x="65" y="28" width="300" height="100" fill="#fff"/><clipPath id="c8"><rect x="65" y="28" width="300" height="100"/></clipPath><clipPath id="c8o"><rect x="65" y="26" width="300" height="103"/></clipPath><g clip-path="url(#c8)"></g><path d="M62 128.5H367M62 111.5H367M62 95.5H367M62 78.5H367M62 61.5H367M62 44.5H367M62 27.5H367M68.5 26V130M80.5 26V130M93.5 26V130M105.5 26V130M118.5 26V130M143.5 26V130M155.5 26V130M168.5 26V130M180.5 26V130M193.5 26V130M218.5 26V130M230.5 26V130M243.5 26V130M255.5 26V130M268.5 26V130M293.5 26V130M305.5 26V130M318.5 26V130M330.5 26V130M343.5 26V130" stroke="rgba(143,143,143,0.38)" stroke-width="1" stroke-dasharray="1 1" fill="none" shape-rendering="crispEdges"/><path d="M62 120.5H367M62 103.5H367M62 86.5H367M62 69.5H367M62 53.5H367M62 36.5H367M130.5 26V132M205.5 26V132M280.5 26V132M355.5 26V132" stroke="rgba(222,79,79,0.47)" stroke-width="1" stroke-dasharray="1 1" fill="none" shape-rendering="crispEdges"/><path d="M65 120.3l299.5 0" fill="none" stroke="#ff0000" stroke-width="1.1" clip-path="url(#c8o)"/><path d="M64.6 26V131.4 M61.6 128.1H368" stroke="#4d4d4d" stroke-width="0.9" fill="none"/><path d="M64.6 21l-3.2 5.2h6.4z M372.4 128.1l-5.2 -3.2v6.4z" fill="#801f1f"/><text x="215.8" y="15.4" text-anchor="middle">Null - Disk IO Bytes - md7 -swap</text><text x="58.3" y="124" text-anchor="end">0.0</text><text x="58.3" y="107.2" text-anchor="end">0.2</text><text x="58.3" y="90.4" text-anchor="end">0.4</text><text x="58.3" y="73.6" text-anchor="end">0.6</text><text x="58.3" y="56.8" text-anchor="end">0.8</text><text x="58.3" y="40" text-anchor="end">1.0</text><text x="131.5" y="140.2" text-anchor="middle">Dom 00:00</text><text x="281.5" y="140.2" text-anchor="middle">Dom 12:00</text><text transform="translate(13.9 78) rotate(-90)" text-anchor="middle">Bytes/Second</text><text class="wm" transform="translate(369.3 6.3) rotate(90)">RRDTOOL / TOBI OETIKER</text></svg>
<svg class="ic" style="left:403px;top:404px" width="17" height="17" viewBox="0 0 17 17"><path d="M10 9.8L14.4 14.2" stroke="#6e4410" stroke-width="3.4" stroke-linecap="round"/><path d="M10.2 10L14.3 14.1" stroke="#f2b03c" stroke-width="1.9" stroke-linecap="round"/><path d="M8.6 8.4l1.6 1.6" stroke="#6a6a8a" stroke-width="1.6"/><circle cx="5.5" cy="5.2" r="4.9" fill="#a8e2f8" stroke="#5f86c4" stroke-width="1"/><circle cx="4.4" cy="4.2" r="2.9" fill="#e6fbff" opacity=".8"/></svg>
<svg class="ic" style="left:403px;top:425px" width="17" height="17" viewBox="0 0 17 17"><circle cx="7" cy="7.8" r="6.5" fill="#3a6cf2" stroke="#141ea0" stroke-width="1.1"/><path d="M1.4 8.6a5.6 5.6 0 0 0 11.2 0c-3 2-8 2-11.2 0z" fill="#7ab2ff" opacity=".9"/><path d="M2.2 5.6a5 5 0 0 1 9.6 0c-3-1.4-6.6-1.4-9.6 0z" fill="#2448d0" opacity=".6"/><path d="M7 3.8v5.8M4.2 7.4l2.8 3 2.8-3" stroke="#fff" stroke-width="2" fill="none" stroke-linejoin="round" stroke-linecap="round"/></svg>
<svg class="ic" style="left:403px;top:446px" width="17" height="17" viewBox="0 0 17 17"><path d="M9.4 9L13.3 12.9" stroke="#b45a00" stroke-width="5" stroke-linecap="round"/><path d="M9.2 8.8L13.2 12.8" stroke="#ff9a0c" stroke-width="3.6" stroke-linecap="round"/><path d="M9.6 9.8L12 12.2" stroke="#ffd040" stroke-width="1.3" stroke-linecap="round"/><path d="M4.45 2.37A2.55 2.55 0 1 1 2.27 4.55" stroke="#8288aa" stroke-width="5.1" fill="none"/><path d="M4.45 2.37A2.55 2.55 0 1 1 2.27 4.55" stroke="#e9eaf1" stroke-width="3.5" fill="none"/><path d="M6.6 2.4A3.6 3.6 0 0 1 7.6 7.4" stroke="#fff" stroke-width="1.2" fill="none" opacity=".8"/></svg>
<svg class="ic" style="left:403px;top:468px" width="17" height="17" viewBox="0 0 17 17"><circle cx="7" cy="7.8" r="6.5" fill="#d2646c" stroke="#7a2226" stroke-width="1.1"/><path d="M1.4 7a5.6 5.6 0 0 1 11.2 0c-3-2-8-2-11.2 0z" fill="#ecb0b4" opacity=".75"/><path d="M7 12v-6.4M4.2 8.2l2.8-3 2.8 3" stroke="#fff" stroke-width="1.9" fill="none" stroke-linejoin="round" stroke-linecap="round"/></svg>
<svg class="g" style="left:442px;top:398px" width="380" height="160" viewBox="0 0 380 160"><rect width="380" height="160" fill="#f3f3f3"/><path d="M0 0H380L378 2H2V158L0 160Z" fill="#cfcfcf"/><path d="M380 160H0L2 158H378V2L380 0Z" fill="#9e9e9e"/><rect x="65" y="28" width="300" height="100" fill="#fff"/><clipPath id="c9"><rect x="65" y="28" width="300" height="100"/></clipPath><clipPath id="c9o"><rect x="65" y="26" width="300" height="103"/></clipPath><g clip-path="url(#c9)"><path d="M65 97.6l1.5 -3 1 -1.5 1 2.3 1 2.2 13 0 1 -15.2 1 -15.3 1 30.5 14 0 1 -2 1 -2 1 2 1 2 19 0 1 -17.7 1 -17.7 1 15.4 1 10 1 10 6 0 1 -5 1 -5 1 -.8 1 -.7 1 1.5 1 10 1 -2.5 1 -2.5 1 -2.5 1 -2.5 1 4.5 1 4.5 1 -9 1 10 2 0 1 -10 2 0 1 -2 1 2 1 2 1 8 3 0 1 -11 1 11 8 0 1 -30.7 1 -30.7 1 46.4 1 -3 1 9 1 9 170 0 1 -.5 1 -.5 1 .5 1 .5 7 0 1 -1.2 1 1.2 4 0 1 -1.5 1 -1.5V97.6H65Z" fill="#6aea6a"/><path d="M65 97.6l1.5 -3 1 -1.5 1 2.3 1 2.2 13 0 1 -15.2 1 -15.3 1 30.5 14 0 1 -2 1 -2 1 2 1 2 19 0 1 -17.7 1 -17.7 1 15.4 1 10 1 10 6 0 1 -5 1 -5 1 -.8 1 -.7 1 1.5 1 10 1 -2.5 1 -2.5 1 -2.5 1 -2.5 1 4.5 1 4.5 1 -9 1 10 2 0 1 -10 2 0 1 -2 1 2 1 2 1 8 3 0 1 -11 1 11 8 0 1 -30.7 1 -30.7 1 46.4 1 -3 1 9 1 9 170 0 1 -.5 1 -.5 1 .5 1 .5 7 0 1 -1.2 1 1.2 4 0 1 -1.5 1 -1.5" fill="none" stroke="#00a348" stroke-width="1.1" stroke-linejoin="round"/><path d="M65 120.9l1.5 -14.5 1 -5.9 1 .2 1 1.6 1 0 1 -.4 1 -1.3 1 1 1 -.5 1 -.3 1 1.9 1 .1 1 -2.5 1 2.1 1 -.6 1 -.6 1 -.3 1 2.5 1 9.4 1 -9.4 1 -1.5 1 -1.4 1 1.7 1 .6 1 -.1 1 -.9 1 -1.5 1 -.1 1 .3 1 2.1 1 -1.6 1 .2 1 1.3 1 -1.5 1 .6 1 -.3 1 -.9 1 1.3 1 .7 1 -1.8 1 .2 1 .5 1 -1 1 1.2 1 .8 1 -.4 1 -.3 1 .8 1 -1.8 1 1.1 1 -.5 1 .6 1 -1.3 1 1.7 1 -1.7 1 .1 1 1.7 1 .4 1 -1.4 1 0 1 -.5 1 .1 1 .9 1 -1.1 1 -.2 1 .9 1 -.8 1 1.3 1 .4 1 -.1 1 -.8 1 -.3 1 .2 1 -1.1 1 1.9 1 -1 1 -.1 1 -.6 1 1 1 .3 1 -.5 1 1.3 1 -.5 1 -1.2 1 .8 1 1 1 -1 1 .2 1 -1.4 1 1.1 1 -.1 1 -.2 1 .1 1 .4 1 -.1 1 -.1 1 -.9 1 .7 1 1.4 1 -1.4 1 -1 1 -.1 1 1.4 1 -1.3 1 .1 1 .1 1 .9 1 1.4 1 -1.3 1 -.1 1 1.9 1 11.6 1 -11.6 1 -1.2 1 .4 1 -.5 1 -.7 1 .6 1 2.4 1 8.7 1 -10.5 1 -.7 1 .2 1 -.1 1 -1.4 1 .1 1 -.2 1 .2 1 .1 1 -.3 1 .2 2 0 1 -.4 1 .5 1 -.1 1 .1 1 0 1 -.4 1 .2 1 -.2 1 .2 1 .2 1 -.4 1 .1 1 -.2 1 .1 1 0 1 -.1 1 .5 1 -.1 1 -.2 1 .2 1 -.1 1 0 1 -.1 1 .1 1 0 1 -.2 1 .1 1 .1 1 0 1 -.2 1 .2 1 .1 1 0 1 -.1 1 -.3 1 .2 1 -.2 1 0 1 .1 1 .1 1 .2 1 -.1 1 -.2 1 .2 2 0 1 -.2 1 .1 1 0 1 1.6 1 -1.6 1 1.6 1 -1.6 1 3.6 1 9.8 1 -9.8 1 -3.6 1 1.6 1 -1.6 1 1.6 1 -1.6 1 1.6 1 -1.6 1 1.6 1 -1.6 1 1.6 1 -1.6 1 1.6 1 -1.6 1 1.6 1 -1.6 1 1.6 1 -1.6 1 1.6 1 -1.6 1 1.6 1 -1.6 1 1.6 1 -1.6 1 1.6 1 -1.6 1 1.6 1 -1.6 1 .2 1 -.2 3 0 1 .1 1 .1 1 0 1 -.2 1 .2 1 .1 1 0 1 -.1 1 -.4 1 .4 1 0 1 -.4 1 .2 1 0 1 .2 1 -.1 1 -.2 2 0 1 -.1 1 .4 1 .5 1 4.6 1 -4.7 1 -.3 1 -.4 1 .2 1 -.1 1 .3 1 -.1 1 -.4 1 .1 1 .3 1 -.1 1 0 1 .1 1 0 1 .1 1 -.3 1 -.2 1 .3 1 -.3 1 .3 1 .1 1 -.2 1 .1 1 -.2 1 0 1 .2 1 .1 1 .1 1 -.5 1 .5 1 -.2 1 -.1 1 0 1 .1 1 -.1 1 -.1 1 3.7 1 5 1 -1.1 1 -6.6 1 2.1 1 -1.8 1 1.4 1 0 1 -1 1 .4 1 -.2 1 -.6 1 .6 1 -.7 1 1.8 1 -1.7 1 1 1 -.1 1 .8V97.6H65Z" fill="#ffa660"/><path d="M65 120.9l1.5 -14.5 1 -5.9 1 .2 1 1.6 1 0 1 -.4 1 -1.3 1 1 1 -.5 1 -.3 1 1.9 1 .1 1 -2.5 1 2.1 1 -.6 1 -.6 1 -.3 1 2.5 1 9.4 1 -9.4 1 -1.5 1 -1.4 1 1.7 1 .6 1 -.1 1 -.9 1 -1.5 1 -.1 1 .3 1 2.1 1 -1.6 1 .2 1 1.3 1 -1.5 1 .6 1 -.3 1 -.9 1 1.3 1 .7 1 -1.8 1 .2 1 .5 1 -1 1 1.2 1 .8 1 -.4 1 -.3 1 .8 1 -1.8 1 1.1 1 -.5 1 .6 1 -1.3 1 1.7 1 -1.7 1 .1 1 1.7 1 .4 1 -1.4 1 0 1 -.5 1 .1 1 .9 1 -1.1 1 -.2 1 .9 1 -.8 1 1.3 1 .4 1 -.1 1 -.8 1 -.3 1 .2 1 -1.1 1 1.9 1 -1 1 -.1 1 -.6 1 1 1 .3 1 -.5 1 1.3 1 -.5 1 -1.2 1 .8 1 1 1 -1 1 .2 1 -1.4 1 1.1 1 -.1 1 -.2 1 .1 1 .4 1 -.1 1 -.1 1 -.9 1 .7 1 1.4 1 -1.4 1 -1 1 -.1 1 1.4 1 -1.3 1 .1 1 .1 1 .9 1 1.4 1 -1.3 1 -.1 1 1.9 1 11.6 1 -11.6 1 -1.2 1 .4 1 -.5 1 -.7 1 .6 1 2.4 1 8.7 1 -10.5 1 -.7 1 .2 1 -.1 1 -1.4 1 .1 1 -.2 1 .2 1 .1 1 -.3 1 .2 2 0 1 -.4 1 .5 1 -.1 1 .1 1 0 1 -.4 1 .2 1 -.2 1 .2 1 .2 1 -.4 1 .1 1 -.2 1 .1 1 0 1 -.1 1 .5 1 -.1 1 -.2 1 .2 1 -.1 1 0 1 -.1 1 .1 1 0 1 -.2 1 .1 1 .1 1 0 1 -.2 1 .2 1 .1 1 0 1 -.1 1 -.3 1 .2 1 -.2 1 0 1 .1 1 .1 1 .2 1 -.1 1 -.2 1 .2 2 0 1 -.2 1 .1 1 0 1 1.6 1 -1.6 1 1.6 1 -1.6 1 3.6 1 9.8 1 -9.8 1 -3.6 1 1.6 1 -1.6 1 1.6 1 -1.6 1 1.6 1 -1.6 1 1.6 1 -1.6 1 1.6 1 -1.6 1 1.6 1 -1.6 1 1.6 1 -1.6 1 1.6 1 -1.6 1 1.6 1 -1.6 1 1.6 1 -1.6 1 1.6 1 -1.6 1 1.6 1 -1.6 1 1.6 1 -1.6 1 .2 1 -.2 3 0 1 .1 1 .1 1 0 1 -.2 1 .2 1 .1 1 0 1 -.1 1 -.4 1 .4 1 0 1 -.4 1 .2 1 0 1 .2 1 -.1 1 -.2 2 0 1 -.1 1 .4 1 .5 1 4.6 1 -4.7 1 -.3 1 -.4 1 .2 1 -.1 1 .3 1 -.1 1 -.4 1 .1 1 .3 1 -.1 1 0 1 .1 1 0 1 .1 1 -.3 1 -.2 1 .3 1 -.3 1 .3 1 .1 1 -.2 1 .1 1 -.2 1 0 1 .2 1 .1 1 .1 1 -.5 1 .5 1 -.2 1 -.1 1 0 1 .1 1 -.1 1 -.1 1 3.7 1 5 1 -1.1 1 -6.6 1 2.1 1 -1.8 1 1.4 1 0 1 -1 1 .4 1 -.2 1 -.6 1 .6 1 -.7 1 1.8 1 -1.7 1 1 1 -.1 1 .8" fill="none" stroke="#ff1a1a" stroke-width="1.2" stroke-linejoin="round"/></g><path d="M62 117.5H367M62 110.5H367M62 104.5H367M62 90.5H367M62 84.5H367M62 77.5H367M62 64.5H367M62 57.5H367M62 50.5H367M62 37.5H367M62 30.5H367M68.5 26V130M80.5 26V130M93.5 26V130M105.5 26V130M118.5 26V130M143.5 26V130M155.5 26V130M168.5 26V130M180.5 26V130M193.5 26V130M218.5 26V130M230.5 26V130M243.5 26V130M255.5 26V130M268.5 26V130M293.5 26V130M305.5 26V130M318.5 26V130M330.5 26V130M343.5 26V130" stroke="rgba(143,143,143,0.38)" stroke-width="1" stroke-dasharray="1 1" fill="none" shape-rendering="crispEdges"/><path d="M62 124.5H367M62 97.5H367M62 70.5H367M62 44.5H367M130.5 26V132M205.5 26V132M280.5 26V132M355.5 26V132" stroke="rgba(222,79,79,0.47)" stroke-width="1" stroke-dasharray="1 1" fill="none" shape-rendering="crispEdges"/><path d="M64.6 26V131.4 M61.6 128.1H368" stroke="#4d4d4d" stroke-width="0.9" fill="none"/><path d="M64.6 21l-3.2 5.2h6.4z M372.4 128.1l-5.2 -3.2v6.4z" fill="#801f1f"/><text x="215.8" y="15.4" text-anchor="middle">Null - Disk IO Bytes - sda</text><text x="58.3" y="128" text-anchor="end">-200 k</text><text x="46.3" y="101.3" text-anchor="end">0</text><text x="58.3" y="74.6" text-anchor="end">200 k</text><text x="58.3" y="47.9" text-anchor="end">400 k</text><text x="131.5" y="140.2" text-anchor="middle">Dom 00:00</text><text x="281.5" y="140.2" text-anchor="middle">Dom 12:00</text><text transform="translate(13.9 78) rotate(-90)" text-anchor="middle">Bytes/Second</text><text class="wm" transform="translate(369.3 6.3) rotate(90)">RRDTOOL / TOBI OETIKER</text></svg>
<svg class="ic" style="left:830px;top:404px" width="17" height="17" viewBox="0 0 17 17"><path d="M10 9.8L14.4 14.2" stroke="#6e4410" stroke-width="3.4" stroke-linecap="round"/><path d="M10.2 10L14.3 14.1" stroke="#f2b03c" stroke-width="1.9" stroke-linecap="round"/><path d="M8.6 8.4l1.6 1.6" stroke="#6a6a8a" stroke-width="1.6"/><circle cx="5.5" cy="5.2" r="4.9" fill="#a8e2f8" stroke="#5f86c4" stroke-width="1"/><circle cx="4.4" cy="4.2" r="2.9" fill="#e6fbff" opacity=".8"/></svg>
<svg class="ic" style="left:830px;top:425px" width="17" height="17" viewBox="0 0 17 17"><circle cx="7" cy="7.8" r="6.5" fill="#3a6cf2" stroke="#141ea0" stroke-width="1.1"/><path d="M1.4 8.6a5.6 5.6 0 0 0 11.2 0c-3 2-8 2-11.2 0z" fill="#7ab2ff" opacity=".9"/><path d="M2.2 5.6a5 5 0 0 1 9.6 0c-3-1.4-6.6-1.4-9.6 0z" fill="#2448d0" opacity=".6"/><path d="M7 3.8v5.8M4.2 7.4l2.8 3 2.8-3" stroke="#fff" stroke-width="2" fill="none" stroke-linejoin="round" stroke-linecap="round"/></svg>
<svg class="ic" style="left:830px;top:446px" width="17" height="17" viewBox="0 0 17 17"><path d="M9.4 9L13.3 12.9" stroke="#b45a00" stroke-width="5" stroke-linecap="round"/><path d="M9.2 8.8L13.2 12.8" stroke="#ff9a0c" stroke-width="3.6" stroke-linecap="round"/><path d="M9.6 9.8L12 12.2" stroke="#ffd040" stroke-width="1.3" stroke-linecap="round"/><path d="M4.45 2.37A2.55 2.55 0 1 1 2.27 4.55" stroke="#8288aa" stroke-width="5.1" fill="none"/><path d="M4.45 2.37A2.55 2.55 0 1 1 2.27 4.55" stroke="#e9eaf1" stroke-width="3.5" fill="none"/><path d="M6.6 2.4A3.6 3.6 0 0 1 7.6 7.4" stroke="#fff" stroke-width="1.2" fill="none" opacity=".8"/></svg>
<svg class="ic" style="left:830px;top:468px" width="17" height="17" viewBox="0 0 17 17"><circle cx="7" cy="7.8" r="6.5" fill="#d2646c" stroke="#7a2226" stroke-width="1.1"/><path d="M1.4 7a5.6 5.6 0 0 1 11.2 0c-3-2-8-2-11.2 0z" fill="#ecb0b4" opacity=".75"/><path d="M7 12v-6.4M4.2 8.2l2.8-3 2.8 3" stroke="#fff" stroke-width="1.9" fill="none" stroke-linejoin="round" stroke-linecap="round"/></svg>
<svg class="g" style="left:868px;top:398px" width="380" height="160" viewBox="0 0 380 160"><rect width="380" height="160" fill="#f3f3f3"/><path d="M0 0H380L378 2H2V158L0 160Z" fill="#cfcfcf"/><path d="M380 160H0L2 158H378V2L380 0Z" fill="#9e9e9e"/><rect x="65" y="28" width="300" height="100" fill="#fff"/><clipPath id="c10"><rect x="65" y="28" width="300" height="100"/></clipPath><clipPath id="c10o"><rect x="65" y="26" width="300" height="103"/></clipPath><g clip-path="url(#c10)"><path d="M65 91.4l1.5 -2.5 1 -.7 1 1.7 1 -.5 1 1 1 1 11 0 1 -23.5 1 -23.5 1 47 10 0 1 -1 1 .5 1 -2.7 1 -2.8 1 6 7 0 1 -.8 1 -.7 1 1.5 1 0 1 -3 1 -3 1 6 17 0 1 -11 1 -11 1 11 1 11 2 0 1 -7.5 1 -7.5 1 2 1 -1.5 1 -1.5 1 3 1 6.5 1 6.5 2 0 1 -16 1 2 1 7 1 7 2 0 1 -6.7 1 -6.6 1 -6.7 1 2 1 2 1 8 1 8 3 0 1 -14 1 -14 1 4 1 4 1 1 1 9 1 -22.5 1 -22.5 1 55 173 0 1 -.5 1 -.5 1 .5 1 .5 7 0 1 -1.2 1 1.2 4 0 1 -1 1 -1V91.4H65Z" fill="#6aea6a"/><path d="M65 91.4l1.5 -2.5 1 -.7 1 1.7 1 -.5 1 1 1 1 11 0 1 -23.5 1 -23.5 1 47 10 0 1 -1 1 .5 1 -2.7 1 -2.8 1 6 7 0 1 -.8 1 -.7 1 1.5 1 0 1 -3 1 -3 1 6 17 0 1 -11 1 -11 1 11 1 11 2 0 1 -7.5 1 -7.5 1 2 1 -1.5 1 -1.5 1 3 1 6.5 1 6.5 2 0 1 -16 1 2 1 7 1 7 2 0 1 -6.7 1 -6.6 1 -6.7 1 2 1 2 1 8 1 8 3 0 1 -14 1 -14 1 4 1 4 1 1 1 9 1 -22.5 1 -22.5 1 55 173 0 1 -.5 1 -.5 1 .5 1 .5 7 0 1 -1.2 1 1.2 4 0 1 -1 1 -1" fill="none" stroke="#00a348" stroke-width="1.1" stroke-linejoin="round"/><path d="M65 121.3l1.5 -18.4 1 -7.4 1 1 1 .1 1 .3 1 -1.4 1 1.1 1 .5 1 .6 1 -2.6 1 .8 1 -.8 1 2.6 1 -.4 1 -2.3 1 3.3 1 0 1 .6 1 12.7 1 -14.5 1 -2.2 1 1.8 1 -1.7 1 .5 1 .2 1 -.8 1 1.6 1 -.1 1 1.4 1 -1.1 1 .4 1 -.5 1 .6 1 -.8 1 -.6 1 2.6 1 0 1 -.6 1 -.5 1 -1.4 1 -.3 1 .2 1 -.7 1 2.5 1 -1.4 1 1.6 1 -1.6 1 2 1 -.3 1 -3.1 1 .8 1 2.5 1 -1.6 1 1.8 1 -2.1 1 -1.1 1 2 1 .5 1 -1.8 1 -.7 1 .9 1 2.3 1 -.8 1 -2.3 1 .5 1 -.5 1 -.2 1 2.7 1 -2.3 1 1.4 1 -.4 1 -.9 1 1.9 1 -2.1 1 1.8 1 -1.9 1 1.1 1 -.7 1 .2 1 2.5 1 -.6 1 -1.8 1 2.1 1 -2.4 1 .6 1 1.7 1 -.8 1 -1.9 1 3.2 1 -2.8 1 .1 1 1.9 1 -1.6 1 -.1 1 -.8 1 0 1 1.8 1 -1.2 1 1.3 1 -.9 1 .3 1 1.9 1 -1.8 1 .4 1 1 1 -2.4 1 -.1 1 2.7 1 -.4 1 -2 1 2.4 1 17 1 -14.3 1 -5.3 1 2.7 1 -.2 1 -1 1 -.7 1 .9 1 13.3 1 -10.2 1 -4.6 1 1.6 1 -1.6 1 -.2 1 -.2 1 -.3 1 -.1 1 .5 1 -.5 1 .1 1 .2 1 .3 1 -.2 1 -.3 1 .5 1 -.5 1 -.2 1 .2 1 .2 1 -.4 1 .1 1 .2 1 .2 1 -.4 1 .2 1 .4 1 .1 1 -.3 1 .1 1 -.1 1 -.4 1 -.1 1 0 1 .7 1 -.1 1 .2 1 -.8 1 .5 1 -.1 1 .2 1 -.3 1 .5 1 -.7 1 .3 1 .2 1 .1 1 -.1 2 0 1 .1 1 -.4 1 .2 1 .2 1 0 1 -.4 1 .3 1 .1 1 -.2 1 0 1 -.2 1 .2 1 1.9 1 -2.2 1 2.2 1 -2.2 1 4.8 1 12.8 1 -12.8 1 -4.8 1 2.2 1 -2.2 1 2.2 1 -2.2 1 2.2 1 -2.2 1 2.2 1 -2.2 1 2.2 1 -2.2 1 2.2 1 -2.2 1 2.2 1 -2.2 1 2.2 1 -2.2 1 2.2 1 -2.2 1 2.2 1 -2.2 1 2.2 1 -2.2 1 2.2 1 -2.2 1 2.2 1 -2.2 1 .3 1 -.4 1 .4 1 .3 1 -.1 1 -.1 1 -.3 1 .3 1 -.1 1 -.1 1 .3 1 -.6 1 .5 1 -.6 1 .5 1 -.1 1 -.2 1 .4 1 -.2 1 .1 1 .2 1 -.5 1 -.2 1 .2 1 .3 1 -.3 1 .3 1 6.8 1 -6.4 1 -.5 1 .3 1 -.4 1 .2 1 -.3 1 .1 1 .3 1 .1 1 0 1 -.4 1 .2 1 -.2 1 -.2 1 .3 1 .3 1 0 1 -.1 1 .2 1 -.6 1 -.1 1 .3 1 -.2 1 0 1 .1 1 .2 1 -.1 1 -.1 1 .4 1 .1 1 -.4 1 -.3 1 -.1 1 .7 1 -.7 1 .6 1 3.5 1 5.7 1 .4 1 -9.3 1 .9 1 .8 1 -1 1 1.9 1 -1.4 1 -.3 1 -.2 1 1.4 1 -.4 1 .4 1 .1 1 .3 1 .4 1 -.7 1 -1.1V91.4H65Z" fill="#ffa660"/><path d="M65 121.3l1.5 -18.4 1 -7.4 1 1 1 .1 1 .3 1 -1.4 1 1.1 1 .5 1 .6 1 -2.6 1 .8 1 -.8 1 2.6 1 -.4 1 -2.3 1 3.3 1 0 1 .6 1 12.7 1 -14.5 1 -2.2 1 1.8 1 -1.7 1 .5 1 .2 1 -.8 1 1.6 1 -.1 1 1.4 1 -1.1 1 .4 1 -.5 1 .6 1 -.8 1 -.6 1 2.6 1 0 1 -.6 1 -.5 1 -1.4 1 -.3 1 .2 1 -.7 1 2.5 1 -1.4 1 1.6 1 -1.6 1 2 1 -.3 1 -3.1 1 .8 1 2.5 1 -1.6 1 1.8 1 -2.1 1 -1.1 1 2 1 .5 1 -1.8 1 -.7 1 .9 1 2.3 1 -.8 1 -2.3 1 .5 1 -.5 1 -.2 1 2.7 1 -2.3 1 1.4 1 -.4 1 -.9 1 1.9 1 -2.1 1 1.8 1 -1.9 1 1.1 1 -.7 1 .2 1 2.5 1 -.6 1 -1.8 1 2.1 1 -2.4 1 .6 1 1.7 1 -.8 1 -1.9 1 3.2 1 -2.8 1 .1 1 1.9 1 -1.6 1 -.1 1 -.8 1 0 1 1.8 1 -1.2 1 1.3 1 -.9 1 .3 1 1.9 1 -1.8 1 .4 1 1 1 -2.4 1 -.1 1 2.7 1 -.4 1 -2 1 2.4 1 17 1 -14.3 1 -5.3 1 2.7 1 -.2 1 -1 1 -.7 1 .9 1 13.3 1 -10.2 1 -4.6 1 1.6 1 -1.6 1 -.2 1 -.2 1 -.3 1 -.1 1 .5 1 -.5 1 .1 1 .2 1 .3 1 -.2 1 -.3 1 .5 1 -.5 1 -.2 1 .2 1 .2 1 -.4 1 .1 1 .2 1 .2 1 -.4 1 .2 1 .4 1 .1 1 -.3 1 .1 1 -.1 1 -.4 1 -.1 1 0 1 .7 1 -.1 1 .2 1 -.8 1 .5 1 -.1 1 .2 1 -.3 1 .5 1 -.7 1 .3 1 .2 1 .1 1 -.1 2 0 1 .1 1 -.4 1 .2 1 .2 1 0 1 -.4 1 .3 1 .1 1 -.2 1 0 1 -.2 1 .2 1 1.9 1 -2.2 1 2.2 1 -2.2 1 4.8 1 12.8 1 -12.8 1 -4.8 1 2.2 1 -2.2 1 2.2 1 -2.2 1 2.2 1 -2.2 1 2.2 1 -2.2 1 2.2 1 -2.2 1 2.2 1 -2.2 1 2.2 1 -2.2 1 2.2 1 -2.2 1 2.2 1 -2.2 1 2.2 1 -2.2 1 2.2 1 -2.2 1 2.2 1 -2.2 1 2.2 1 -2.2 1 .3 1 -.4 1 .4 1 .3 1 -.1 1 -.1 1 -.3 1 .3 1 -.1 1 -.1 1 .3 1 -.6 1 .5 1 -.6 1 .5 1 -.1 1 -.2 1 .4 1 -.2 1 .1 1 .2 1 -.5 1 -.2 1 .2 1 .3 1 -.3 1 .3 1 6.8 1 -6.4 1 -.5 1 .3 1 -.4 1 .2 1 -.3 1 .1 1 .3 1 .1 1 0 1 -.4 1 .2 1 -.2 1 -.2 1 .3 1 .3 1 0 1 -.1 1 .2 1 -.6 1 -.1 1 .3 1 -.2 1 0 1 .1 1 .2 1 -.1 1 -.1 1 .4 1 .1 1 -.4 1 -.3 1 -.1 1 .7 1 -.7 1 .6 1 3.5 1 5.7 1 .4 1 -9.3 1 .9 1 .8 1 -1 1 1.9 1 -1.4 1 -.3 1 -.2 1 1.4 1 -.4 1 .4 1 .1 1 .3 1 .4 1 -.7 1 -1.1" fill="none" stroke="#ff1a1a" stroke-width="1.2" stroke-linejoin="round"/></g><path d="M62 117.5H367M62 99.5H367M62 82.5H367M62 65.5H367M62 48.5H367M62 31.5H367M68.5 26V130M80.5 26V130M93.5 26V130M105.5 26V130M118.5 26V130M143.5 26V130M155.5 26V130M168.5 26V130M180.5 26V130M193.5 26V130M218.5 26V130M230.5 26V130M243.5 26V130M255.5 26V130M268.5 26V130M293.5 26V130M305.5 26V130M318.5 26V130M330.5 26V130M343.5 26V130" stroke="rgba(143,143,143,0.38)" stroke-width="1" stroke-dasharray="1 1" fill="none" shape-rendering="crispEdges"/><path d="M62 125.5H367M62 108.5H367M62 91.5H367M62 74.5H367M62 57.5H367M62 40.5H367M130.5 26V132M205.5 26V132M280.5 26V132M355.5 26V132" stroke="rgba(222,79,79,0.47)" stroke-width="1" stroke-dasharray="1 1" fill="none" shape-rendering="crispEdges"/><path d="M64.6 26V131.4 M61.6 128.1H368" stroke="#4d4d4d" stroke-width="0.9" fill="none"/><path d="M64.6 21l-3.2 5.2h6.4z M372.4 128.1l-5.2 -3.2v6.4z" fill="#801f1f"/><text x="215.8" y="15.4" text-anchor="middle">Null - Disk IO Bytes - sdb</text><text x="58.3" y="129.3" text-anchor="end">-200 k</text><text x="58.3" y="112.2" text-anchor="end">-100 k</text><text x="46.3" y="95.1" text-anchor="end">0</text><text x="58.3" y="78" text-anchor="end">100 k</text><text x="58.3" y="60.9" text-anchor="end">200 k</text><text x="58.3" y="43.8" text-anchor="end">300 k</text><text x="131.5" y="140.2" text-anchor="middle">Dom 00:00</text><text x="281.5" y="140.2" text-anchor="middle">Dom 12:00</text><text transform="translate(13.9 78) rotate(-90)" text-anchor="middle">Bytes/Second</text><text class="wm" transform="translate(369.3 6.3) rotate(90)">RRDTOOL / TOBI OETIKER</text></svg>
<svg class="ic" style="left:1256px;top:404px" width="17" height="17" viewBox="0 0 17 17"><path d="M10 9.8L14.4 14.2" stroke="#6e4410" stroke-width="3.4" stroke-linecap="round"/><path d="M10.2 10L14.3 14.1" stroke="#f2b03c" stroke-width="1.9" stroke-linecap="round"/><path d="M8.6 8.4l1.6 1.6" stroke="#6a6a8a" stroke-width="1.6"/><circle cx="5.5" cy="5.2" r="4.9" fill="#a8e2f8" stroke="#5f86c4" stroke-width="1"/><circle cx="4.4" cy="4.2" r="2.9" fill="#e6fbff" opacity=".8"/></svg>
<svg class="ic" style="left:1256px;top:425px" width="17" height="17" viewBox="0 0 17 17"><circle cx="7" cy="7.8" r="6.5" fill="#3a6cf2" stroke="#141ea0" stroke-width="1.1"/><path d="M1.4 8.6a5.6 5.6 0 0 0 11.2 0c-3 2-8 2-11.2 0z" fill="#7ab2ff" opacity=".9"/><path d="M2.2 5.6a5 5 0 0 1 9.6 0c-3-1.4-6.6-1.4-9.6 0z" fill="#2448d0" opacity=".6"/><path d="M7 3.8v5.8M4.2 7.4l2.8 3 2.8-3" stroke="#fff" stroke-width="2" fill="none" stroke-linejoin="round" stroke-linecap="round"/></svg>
<svg class="ic" style="left:1256px;top:446px" width="17" height="17" viewBox="0 0 17 17"><path d="M9.4 9L13.3 12.9" stroke="#b45a00" stroke-width="5" stroke-linecap="round"/><path d="M9.2 8.8L13.2 12.8" stroke="#ff9a0c" stroke-width="3.6" stroke-linecap="round"/><path d="M9.6 9.8L12 12.2" stroke="#ffd040" stroke-width="1.3" stroke-linecap="round"/><path d="M4.45 2.37A2.55 2.55 0 1 1 2.27 4.55" stroke="#8288aa" stroke-width="5.1" fill="none"/><path d="M4.45 2.37A2.55 2.55 0 1 1 2.27 4.55" stroke="#e9eaf1" stroke-width="3.5" fill="none"/><path d="M6.6 2.4A3.6 3.6 0 0 1 7.6 7.4" stroke="#fff" stroke-width="1.2" fill="none" opacity=".8"/></svg>
<svg class="ic" style="left:1256px;top:468px" width="17" height="17" viewBox="0 0 17 17"><circle cx="7" cy="7.8" r="6.5" fill="#d2646c" stroke="#7a2226" stroke-width="1.1"/><path d="M1.4 7a5.6 5.6 0 0 1 11.2 0c-3-2-8-2-11.2 0z" fill="#ecb0b4" opacity=".75"/><path d="M7 12v-6.4M4.2 8.2l2.8-3 2.8 3" stroke="#fff" stroke-width="1.9" fill="none" stroke-linejoin="round" stroke-linecap="round"/></svg>
<svg class="g" style="left:1294px;top:398px" width="380" height="160" viewBox="0 0 380 160"><rect width="380" height="160" fill="#f3f3f3"/><path d="M0 0H380L378 2H2V158L0 160Z" fill="#cfcfcf"/><path d="M380 160H0L2 158H378V2L380 0Z" fill="#9e9e9e"/><rect x="65" y="28" width="300" height="100" fill="#fff"/><clipPath id="c11"><rect x="65" y="28" width="300" height="100"/></clipPath><clipPath id="c11o"><rect x="65" y="26" width="300" height="103"/></clipPath><g clip-path="url(#c11)"><rect x="65" y="27" width="299.5" height="102" fill="#002a97"/><path d="M65 94.8l299.5 0V129.2H65Z" fill="#f51d30"/><rect x="364.5" y="27" width="1" height="102" fill="#fff"/></g><path d="M62 122.5H367M62 117.5H367M62 112.5H367M62 107.5H367M62 96.5H367M62 91.5H367M62 86.5H367M62 80.5H367M62 70.5H367M62 65.5H367M62 59.5H367M62 54.5H367M62 44.5H367M62 38.5H367M62 33.5H367M62 28.5H367M68.5 26V130M80.5 26V130M93.5 26V130M105.5 26V130M118.5 26V130M143.5 26V130M155.5 26V130M168.5 26V130M180.5 26V130M193.5 26V130M218.5 26V130M230.5 26V130M243.5 26V130M255.5 26V130M268.5 26V130M293.5 26V130M305.5 26V130M318.5 26V130M330.5 26V130M343.5 26V130" stroke="rgba(143,143,143,0.38)" stroke-width="1" stroke-dasharray="1 1" fill="none" shape-rendering="crispEdges"/><path d="M62 128.5H367M62 101.5H367M62 75.5H367M62 49.5H367M130.5 26V132M205.5 26V132M280.5 26V132M355.5 26V132" stroke="rgba(222,79,79,0.47)" stroke-width="1" stroke-dasharray="1 1" fill="none" shape-rendering="crispEdges"/><path d="M65 27.9l299.5 0" fill="none" stroke="#000" stroke-width="1.9" clip-path="url(#c11o)"/><path d="M64.6 26V131.4 M61.6 128.1H368" stroke="#4d4d4d" stroke-width="0.9" fill="none"/><path d="M64.6 21l-3.2 5.2h6.4z M372.4 128.1l-5.2 -3.2v6.4z" fill="#801f1f"/><text x="215.8" y="15.4" text-anchor="middle">Null - Disk Space - /</text><text x="46.3" y="131.9" text-anchor="end">0</text><text x="58.3" y="105.6" text-anchor="end">10 G</text><text x="58.3" y="79.3" text-anchor="end">20 G</text><text x="58.3" y="53" text-anchor="end">30 G</text><text x="131.5" y="140.2" text-anchor="middle">Dom 00:00</text><text x="281.5" y="140.2" text-anchor="middle">Dom 12:00</text><text transform="translate(13.9 78) rotate(-90)" text-anchor="middle">bytes</text><text class="wm" transform="translate(369.3 6.3) rotate(90)">RRDTOOL / TOBI OETIKER</text></svg>
<svg class="ic" style="left:1682px;top:404px" width="17" height="17" viewBox="0 0 17 17"><path d="M10 9.8L14.4 14.2" stroke="#6e4410" stroke-width="3.4" stroke-linecap="round"/><path d="M10.2 10L14.3 14.1" stroke="#f2b03c" stroke-width="1.9" stroke-linecap="round"/><path d="M8.6 8.4l1.6 1.6" stroke="#6a6a8a" stroke-width="1.6"/><circle cx="5.5" cy="5.2" r="4.9" fill="#a8e2f8" stroke="#5f86c4" stroke-width="1"/><circle cx="4.4" cy="4.2" r="2.9" fill="#e6fbff" opacity=".8"/></svg>
<svg class="ic" style="left:1682px;top:425px" width="17" height="17" viewBox="0 0 17 17"><circle cx="7" cy="7.8" r="6.5" fill="#3a6cf2" stroke="#141ea0" stroke-width="1.1"/><path d="M1.4 8.6a5.6 5.6 0 0 0 11.2 0c-3 2-8 2-11.2 0z" fill="#7ab2ff" opacity=".9"/><path d="M2.2 5.6a5 5 0 0 1 9.6 0c-3-1.4-6.6-1.4-9.6 0z" fill="#2448d0" opacity=".6"/><path d="M7 3.8v5.8M4.2 7.4l2.8 3 2.8-3" stroke="#fff" stroke-width="2" fill="none" stroke-linejoin="round" stroke-linecap="round"/></svg>
<svg class="ic" style="left:1682px;top:446px" width="17" height="17" viewBox="0 0 17 17"><path d="M9.4 9L13.3 12.9" stroke="#b45a00" stroke-width="5" stroke-linecap="round"/><path d="M9.2 8.8L13.2 12.8" stroke="#ff9a0c" stroke-width="3.6" stroke-linecap="round"/><path d="M9.6 9.8L12 12.2" stroke="#ffd040" stroke-width="1.3" stroke-linecap="round"/><path d="M4.45 2.37A2.55 2.55 0 1 1 2.27 4.55" stroke="#8288aa" stroke-width="5.1" fill="none"/><path d="M4.45 2.37A2.55 2.55 0 1 1 2.27 4.55" stroke="#e9eaf1" stroke-width="3.5" fill="none"/><path d="M6.6 2.4A3.6 3.6 0 0 1 7.6 7.4" stroke="#fff" stroke-width="1.2" fill="none" opacity=".8"/></svg>
<svg class="ic" style="left:1682px;top:468px" width="17" height="17" viewBox="0 0 17 17"><circle cx="7" cy="7.8" r="6.5" fill="#d2646c" stroke="#7a2226" stroke-width="1.1"/><path d="M1.4 7a5.6 5.6 0 0 1 11.2 0c-3-2-8-2-11.2 0z" fill="#ecb0b4" opacity=".75"/><path d="M7 12v-6.4M4.2 8.2l2.8-3 2.8 3" stroke="#fff" stroke-width="1.9" fill="none" stroke-linejoin="round" stroke-linecap="round"/></svg>
<svg class="g" style="left:15px;top:564px" width="380" height="160" viewBox="0 0 380 160"><rect width="380" height="160" fill="#f3f3f3"/><path d="M0 0H380L378 2H2V158L0 160Z" fill="#cfcfcf"/><path d="M380 160H0L2 158H378V2L380 0Z" fill="#9e9e9e"/><rect x="65" y="28" width="300" height="100" fill="#fff"/><clipPath id="c12"><rect x="65" y="28" width="300" height="100"/></clipPath><clipPath id="c12o"><rect x="65" y="26" width="300" height="103"/></clipPath><g clip-path="url(#c12)"><rect x="65" y="27" width="299.5" height="102" fill="#002a97"/><path d="M65 58l299.5 0V129.2H65Z" fill="#f51d30"/><rect x="364.5" y="27" width="1" height="102" fill="#fff"/></g><path d="M62 122.5H367M62 117.5H367M62 112.5H367M62 107.5H367M62 96.5H367M62 91.5H367M62 86.5H367M62 80.5H367M62 70.5H367M62 65.5H367M62 59.5H367M62 54.5H367M62 44.5H367M62 38.5H367M62 33.5H367M62 28.5H367M68.5 26V130M80.5 26V130M93.5 26V130M105.5 26V130M118.5 26V130M143.5 26V130M155.5 26V130M168.5 26V130M180.5 26V130M193.5 26V130M218.5 26V130M230.5 26V130M243.5 26V130M255.5 26V130M268.5 26V130M293.5 26V130M305.5 26V130M318.5 26V130M330.5 26V130M343.5 26V130" stroke="rgba(143,143,143,0.38)" stroke-width="1" stroke-dasharray="1 1" fill="none" shape-rendering="crispEdges"/><path d="M62 128.5H367M62 101.5H367M62 75.5H367M62 49.5H367M130.5 26V132M205.5 26V132M280.5 26V132M355.5 26V132" stroke="rgba(222,79,79,0.47)" stroke-width="1" stroke-dasharray="1 1" fill="none" shape-rendering="crispEdges"/><path d="M65 27.9l299.5 0" fill="none" stroke="#000" stroke-width="1.9" clip-path="url(#c12o)"/><path d="M64.6 26V131.4 M61.6 128.1H368" stroke="#4d4d4d" stroke-width="0.9" fill="none"/><path d="M64.6 21l-3.2 5.2h6.4z M372.4 128.1l-5.2 -3.2v6.4z" fill="#801f1f"/><text x="215.8" y="15.4" text-anchor="middle">Null - Disk Space - /home</text><text x="46.3" y="131.9" text-anchor="end">0</text><text x="58.3" y="105.6" text-anchor="end">50 G</text><text x="58.3" y="79.3" text-anchor="end">100 G</text><text x="58.3" y="53" text-anchor="end">150 G</text><text x="131.5" y="140.2" text-anchor="middle">Dom 00:00</text><text x="281.5" y="140.2" text-anchor="middle">Dom 12:00</text><text transform="translate(13.9 78) rotate(-90)" text-anchor="middle">bytes</text><text class="wm" transform="translate(369.3 6.3) rotate(90)">RRDTOOL / TOBI OETIKER</text></svg>
<svg class="ic" style="left:403px;top:570px" width="17" height="17" viewBox="0 0 17 17"><path d="M10 9.8L14.4 14.2" stroke="#6e4410" stroke-width="3.4" stroke-linecap="round"/><path d="M10.2 10L14.3 14.1" stroke="#f2b03c" stroke-width="1.9" stroke-linecap="round"/><path d="M8.6 8.4l1.6 1.6" stroke="#6a6a8a" stroke-width="1.6"/><circle cx="5.5" cy="5.2" r="4.9" fill="#a8e2f8" stroke="#5f86c4" stroke-width="1"/><circle cx="4.4" cy="4.2" r="2.9" fill="#e6fbff" opacity=".8"/></svg>
<svg class="ic" style="left:403px;top:591px" width="17" height="17" viewBox="0 0 17 17"><circle cx="7" cy="7.8" r="6.5" fill="#3a6cf2" stroke="#141ea0" stroke-width="1.1"/><path d="M1.4 8.6a5.6 5.6 0 0 0 11.2 0c-3 2-8 2-11.2 0z" fill="#7ab2ff" opacity=".9"/><path d="M2.2 5.6a5 5 0 0 1 9.6 0c-3-1.4-6.6-1.4-9.6 0z" fill="#2448d0" opacity=".6"/><path d="M7 3.8v5.8M4.2 7.4l2.8 3 2.8-3" stroke="#fff" stroke-width="2" fill="none" stroke-linejoin="round" stroke-linecap="round"/></svg>
<svg class="ic" style="left:403px;top:612px" width="17" height="17" viewBox="0 0 17 17"><path d="M9.4 9L13.3 12.9" stroke="#b45a00" stroke-width="5" stroke-linecap="round"/><path d="M9.2 8.8L13.2 12.8" stroke="#ff9a0c" stroke-width="3.6" stroke-linecap="round"/><path d="M9.6 9.8L12 12.2" stroke="#ffd040" stroke-width="1.3" stroke-linecap="round"/><path d="M4.45 2.37A2.55 2.55 0 1 1 2.27 4.55" stroke="#8288aa" stroke-width="5.1" fill="none"/><path d="M4.45 2.37A2.55 2.55 0 1 1 2.27 4.55" stroke="#e9eaf1" stroke-width="3.5" fill="none"/><path d="M6.6 2.4A3.6 3.6 0 0 1 7.6 7.4" stroke="#fff" stroke-width="1.2" fill="none" opacity=".8"/></svg>
<svg class="ic" style="left:403px;top:634px" width="17" height="17" viewBox="0 0 17 17"><circle cx="7" cy="7.8" r="6.5" fill="#d2646c" stroke="#7a2226" stroke-width="1.1"/><path d="M1.4 7a5.6 5.6 0 0 1 11.2 0c-3-2-8-2-11.2 0z" fill="#ecb0b4" opacity=".75"/><path d="M7 12v-6.4M4.2 8.2l2.8-3 2.8 3" stroke="#fff" stroke-width="1.9" fill="none" stroke-linejoin="round" stroke-linecap="round"/></svg>
<svg class="g" style="left:442px;top:564px" width="380" height="160" viewBox="0 0 380 160"><rect width="380" height="160" fill="#f3f3f3"/><path d="M0 0H380L378 2H2V158L0 160Z" fill="#cfcfcf"/><path d="M380 160H0L2 158H378V2L380 0Z" fill="#9e9e9e"/><rect x="65" y="28" width="300" height="100" fill="#fff"/><clipPath id="c13"><rect x="65" y="28" width="300" height="100"/></clipPath><clipPath id="c13o"><rect x="65" y="26" width="300" height="103"/></clipPath><g clip-path="url(#c13)"></g><path d="M62 118.5H367M62 98.5H367M62 78.5H367M62 58.5H367M62 38.5H367M68.5 26V130M80.5 26V130M93.5 26V130M105.5 26V130M118.5 26V130M143.5 26V130M155.5 26V130M168.5 26V130M180.5 26V130M193.5 26V130M218.5 26V130M230.5 26V130M243.5 26V130M255.5 26V130M268.5 26V130M293.5 26V130M305.5 26V130M318.5 26V130M330.5 26V130M343.5 26V130" stroke="rgba(143,143,143,0.38)" stroke-width="1" stroke-dasharray="1 1" fill="none" shape-rendering="crispEdges"/><path d="M62 128.5H367M62 108.5H367M62 88.5H367M62 68.5H367M62 48.5H367M62 28.5H367M130.5 26V132M205.5 26V132M280.5 26V132M355.5 26V132" stroke="rgba(222,79,79,0.47)" stroke-width="1" stroke-dasharray="1 1" fill="none" shape-rendering="crispEdges"/><path d="M65 127.6l299.5 0" fill="none" stroke="#000" stroke-width="2.0" clip-path="url(#c13o)"/><path d="M64.6 26V131.4 M61.6 128.1H368" stroke="#4d4d4d" stroke-width="0.9" fill="none"/><path d="M64.6 21l-3.2 5.2h6.4z M372.4 128.1l-5.2 -3.2v6.4z" fill="#801f1f"/><text x="215.8" y="15.4" text-anchor="middle">Null - Disk Space - /usr/portage</text><text x="58.3" y="131.9" text-anchor="end">0.0</text><text x="58.3" y="111.9" text-anchor="end">0.2</text><text x="58.3" y="91.9" text-anchor="end">0.4</text><text x="58.3" y="71.9" text-anchor="end">0.6</text><text x="58.3" y="51.9" text-anchor="end">0.8</text><text x="58.3" y="31.9" text-anchor="end">1.0</text><text x="131.5" y="140.2" text-anchor="middle">Dom 00:00</text><text x="281.5" y="140.2" text-anchor="middle">Dom 12:00</text><text transform="translate(13.9 78) rotate(-90)" text-anchor="middle">bytes</text><text class="wm" transform="translate(369.3 6.3) rotate(90)">RRDTOOL / TOBI OETIKER</text></svg>
<svg class="ic" style="left:830px;top:570px" width="17" height="17" viewBox="0 0 17 17"><path d="M10 9.8L14.4 14.2" stroke="#6e4410" stroke-width="3.4" stroke-linecap="round"/><path d="M10.2 10L14.3 14.1" stroke="#f2b03c" stroke-width="1.9" stroke-linecap="round"/><path d="M8.6 8.4l1.6 1.6" stroke="#6a6a8a" stroke-width="1.6"/><circle cx="5.5" cy="5.2" r="4.9" fill="#a8e2f8" stroke="#5f86c4" stroke-width="1"/><circle cx="4.4" cy="4.2" r="2.9" fill="#e6fbff" opacity=".8"/></svg>
<svg class="ic" style="left:830px;top:591px" width="17" height="17" viewBox="0 0 17 17"><circle cx="7" cy="7.8" r="6.5" fill="#3a6cf2" stroke="#141ea0" stroke-width="1.1"/><path d="M1.4 8.6a5.6 5.6 0 0 0 11.2 0c-3 2-8 2-11.2 0z" fill="#7ab2ff" opacity=".9"/><path d="M2.2 5.6a5 5 0 0 1 9.6 0c-3-1.4-6.6-1.4-9.6 0z" fill="#2448d0" opacity=".6"/><path d="M7 3.8v5.8M4.2 7.4l2.8 3 2.8-3" stroke="#fff" stroke-width="2" fill="none" stroke-linejoin="round" stroke-linecap="round"/></svg>
<svg class="ic" style="left:830px;top:612px" width="17" height="17" viewBox="0 0 17 17"><path d="M9.4 9L13.3 12.9" stroke="#b45a00" stroke-width="5" stroke-linecap="round"/><path d="M9.2 8.8L13.2 12.8" stroke="#ff9a0c" stroke-width="3.6" stroke-linecap="round"/><path d="M9.6 9.8L12 12.2" stroke="#ffd040" stroke-width="1.3" stroke-linecap="round"/><path d="M4.45 2.37A2.55 2.55 0 1 1 2.27 4.55" stroke="#8288aa" stroke-width="5.1" fill="none"/><path d="M4.45 2.37A2.55 2.55 0 1 1 2.27 4.55" stroke="#e9eaf1" stroke-width="3.5" fill="none"/><path d="M6.6 2.4A3.6 3.6 0 0 1 7.6 7.4" stroke="#fff" stroke-width="1.2" fill="none" opacity=".8"/></svg>
<svg class="ic" style="left:830px;top:634px" width="17" height="17" viewBox="0 0 17 17"><circle cx="7" cy="7.8" r="6.5" fill="#d2646c" stroke="#7a2226" stroke-width="1.1"/><path d="M1.4 7a5.6 5.6 0 0 1 11.2 0c-3-2-8-2-11.2 0z" fill="#ecb0b4" opacity=".75"/><path d="M7 12v-6.4M4.2 8.2l2.8-3 2.8 3" stroke="#fff" stroke-width="1.9" fill="none" stroke-linejoin="round" stroke-linecap="round"/></svg>
<svg class="g" style="left:868px;top:564px" width="380" height="160" viewBox="0 0 380 160"><rect width="380" height="160" fill="#f3f3f3"/><path d="M0 0H380L378 2H2V158L0 160Z" fill="#cfcfcf"/><path d="M380 160H0L2 158H378V2L380 0Z" fill="#9e9e9e"/><rect x="65" y="28" width="300" height="100" fill="#fff"/><clipPath id="c14"><rect x="65" y="28" width="300" height="100"/></clipPath><clipPath id="c14o"><rect x="65" y="26" width="300" height="103"/></clipPath><g clip-path="url(#c14)"><rect x="65" y="27" width="299.5" height="102" fill="#002a97"/><path d="M65 120.9l105.5 0 1 1.2 193 0V129.2H65Z" fill="#f51d30"/><rect x="364.5" y="27" width="1" height="102" fill="#fff"/></g><path d="M62 122.5H367M62 117.5H367M62 112.5H367M62 107.5H367M62 96.5H367M62 91.5H367M62 86.5H367M62 80.5H367M62 70.5H367M62 65.5H367M62 59.5H367M62 54.5H367M62 44.5H367M62 38.5H367M62 33.5H367M62 28.5H367M68.5 26V130M80.5 26V130M93.5 26V130M105.5 26V130M118.5 26V130M143.5 26V130M155.5 26V130M168.5 26V130M180.5 26V130M193.5 26V130M218.5 26V130M230.5 26V130M243.5 26V130M255.5 26V130M268.5 26V130M293.5 26V130M305.5 26V130M318.5 26V130M330.5 26V130M343.5 26V130" stroke="rgba(143,143,143,0.38)" stroke-width="1" stroke-dasharray="1 1" fill="none" shape-rendering="crispEdges"/><path d="M62 128.5H367M62 101.5H367M62 75.5H367M62 49.5H367M130.5 26V132M205.5 26V132M280.5 26V132M355.5 26V132" stroke="rgba(222,79,79,0.47)" stroke-width="1" stroke-dasharray="1 1" fill="none" shape-rendering="crispEdges"/><path d="M65 27.9l299.5 0" fill="none" stroke="#000" stroke-width="1.9" clip-path="url(#c14o)"/><path d="M64.6 26V131.4 M61.6 128.1H368" stroke="#4d4d4d" stroke-width="0.9" fill="none"/><path d="M64.6 21l-3.2 5.2h6.4z M372.4 128.1l-5.2 -3.2v6.4z" fill="#801f1f"/><text x="215.8" y="15.4" text-anchor="middle">Null - Disk Space - /var</text><text x="46.3" y="131.9" text-anchor="end">0</text><text x="58.3" y="105.6" text-anchor="end">5 G</text><text x="58.3" y="79.3" text-anchor="end">10 G</text><text x="58.3" y="53" text-anchor="end">15 G</text><text x="131.5" y="140.2" text-anchor="middle">Dom 00:00</text><text x="281.5" y="140.2" text-anchor="middle">Dom 12:00</text><text transform="translate(13.9 78) rotate(-90)" text-anchor="middle">bytes</text><text class="wm" transform="translate(369.3 6.3) rotate(90)">RRDTOOL / TOBI OETIKER</text></svg>
<svg class="ic" style="left:1256px;top:570px" width="17" height="17" viewBox="0 0 17 17"><path d="M10 9.8L14.4 14.2" stroke="#6e4410" stroke-width="3.4" stroke-linecap="round"/><path d="M10.2 10L14.3 14.1" stroke="#f2b03c" stroke-width="1.9" stroke-linecap="round"/><path d="M8.6 8.4l1.6 1.6" stroke="#6a6a8a" stroke-width="1.6"/><circle cx="5.5" cy="5.2" r="4.9" fill="#a8e2f8" stroke="#5f86c4" stroke-width="1"/><circle cx="4.4" cy="4.2" r="2.9" fill="#e6fbff" opacity=".8"/></svg>
<svg class="ic" style="left:1256px;top:591px" width="17" height="17" viewBox="0 0 17 17"><circle cx="7" cy="7.8" r="6.5" fill="#3a6cf2" stroke="#141ea0" stroke-width="1.1"/><path d="M1.4 8.6a5.6 5.6 0 0 0 11.2 0c-3 2-8 2-11.2 0z" fill="#7ab2ff" opacity=".9"/><path d="M2.2 5.6a5 5 0 0 1 9.6 0c-3-1.4-6.6-1.4-9.6 0z" fill="#2448d0" opacity=".6"/><path d="M7 3.8v5.8M4.2 7.4l2.8 3 2.8-3" stroke="#fff" stroke-width="2" fill="none" stroke-linejoin="round" stroke-linecap="round"/></svg>
<svg class="ic" style="left:1256px;top:612px" width="17" height="17" viewBox="0 0 17 17"><path d="M9.4 9L13.3 12.9" stroke="#b45a00" stroke-width="5" stroke-linecap="round"/><path d="M9.2 8.8L13.2 12.8" stroke="#ff9a0c" stroke-width="3.6" stroke-linecap="round"/><path d="M9.6 9.8L12 12.2" stroke="#ffd040" stroke-width="1.3" stroke-linecap="round"/><path d="M4.45 2.37A2.55 2.55 0 1 1 2.27 4.55" stroke="#8288aa" stroke-width="5.1" fill="none"/><path d="M4.45 2.37A2.55 2.55 0 1 1 2.27 4.55" stroke="#e9eaf1" stroke-width="3.5" fill="none"/><path d="M6.6 2.4A3.6 3.6 0 0 1 7.6 7.4" stroke="#fff" stroke-width="1.2" fill="none" opacity=".8"/></svg>
<svg class="ic" style="left:1256px;top:634px" width="17" height="17" viewBox="0 0 17 17"><circle cx="7" cy="7.8" r="6.5" fill="#d2646c" stroke="#7a2226" stroke-width="1.1"/><path d="M1.4 7a5.6 5.6 0 0 1 11.2 0c-3-2-8-2-11.2 0z" fill="#ecb0b4" opacity=".75"/><path d="M7 12v-6.4M4.2 8.2l2.8-3 2.8 3" stroke="#fff" stroke-width="1.9" fill="none" stroke-linejoin="round" stroke-linecap="round"/></svg>
<svg class="g" style="left:1294px;top:564px" width="380" height="160" viewBox="0 0 380 160"><rect width="380" height="160" fill="#f3f3f3"/><path d="M0 0H380L378 2H2V158L0 160Z" fill="#cfcfcf"/><path d="M380 160H0L2 158H378V2L380 0Z" fill="#9e9e9e"/><rect x="65" y="28" width="300" height="100" fill="#fff"/><clipPath id="c15"><rect x="65" y="28" width="300" height="100"/></clipPath><clipPath id="c15o"><rect x="65" y="26" width="300" height="103"/></clipPath><g clip-path="url(#c15)"><path d="M65 228l73.5 0 1 -199.2 9 0 1 199.2 2 0 1 -199.2 5 0 1 199.2 26 0 1 -199.2 3 0 1 199.2 3 0 1 -199.2 19 0 1 199.2 1 0 1 -199.2 32 0 1 199.2 1 0 1 -199.2 6 0 1 199.2 1 0 1 -199.2 5 0 1 199.2 30 0 1 -199.2 11 0 1 199.2 12 0 1 -199.2 2 0 1 199.2 1 0 1 -199.2 14 0 1 199.2 2 0 1 -199.2 16 0 1 199.2 3 0V128.2H65Z" fill="#f7a3a8"/><path d="M65 32.7l73.5 0 1 -3.9 9 0 1 3.9 2 0 1 -3.9 5 0 1 3.9 26 0 1 -3.9 3 0 1 3.9 3 0 1 -3.9 19 0 1 3.9 1 0 1 -3.9 32 0 1 3.9 1 0 1 -3.9 6 0 1 3.9 1 0 1 -3.9 5 0 1 3.9 30 0 1 -3.9 11 0 1 3.9 12 0 1 -3.9 2 0 1 3.9 1 0 1 -3.9 14 0 1 3.9 2 0 1 -3.9 16 0 1 3.9 3 0" fill="none" stroke="#ff1a1a" stroke-width="1.2" stroke-linejoin="round"/><path d="M65 32.5l83.5 0 1 -3.7 2 0 1 3.7 5 0 1 -3.7 26 0 1 3.7 3 0 1 -3.7 3 0 1 3.7 19 0 1 -3.7 1 0 1 3.7 32 0 1 -3.7 1 0 1 3.7 6 0 1 -3.7 1 0 1 3.7 5 0 1 -3.7 30 0 1 3.7 11 0 1 -3.7 12 0 1 3.7 2 0 1 -3.7 1 0 1 3.7 14 0 1 -3.7 2 0 1 3.7 16 0 1 -3.7 1 0 1 3.7 1 0V129.2H65Z" fill="#ff7d55"/><path d="M65 32.5l83.5 0 1 -3.7 2 0 1 3.7 5 0 1 -3.7 26 0 1 3.7 3 0 1 -3.7 3 0 1 3.7 19 0 1 -3.7 1 0 1 3.7 32 0 1 -3.7 1 0 1 3.7 6 0 1 -3.7 1 0 1 3.7 5 0 1 -3.7 30 0 1 3.7 11 0 1 -3.7 12 0 1 3.7 2 0 1 -3.7 1 0 1 3.7 14 0 1 -3.7 2 0 1 3.7 16 0 1 -3.7 1 0 1 3.7 1 0" fill="none" stroke="#ff6a10" stroke-width="1.0" stroke-linejoin="round"/><rect x="364.5" y="27" width="1" height="102" fill="#fff"/></g><path d="M62 120.5H367M62 113.5H367M62 106.5H367M62 98.5H367M62 84.5H367M62 76.5H367M62 69.5H367M62 61.5H367M62 47.5H367M62 39.5H367M62 32.5H367M68.5 26V130M80.5 26V130M93.5 26V130M105.5 26V130M118.5 26V130M143.5 26V130M155.5 26V130M168.5 26V130M180.5 26V130M193.5 26V130M218.5 26V130M230.5 26V130M243.5 26V130M255.5 26V130M268.5 26V130M293.5 26V130M305.5 26V130M318.5 26V130M330.5 26V130M343.5 26V130" stroke="rgba(143,143,143,0.38)" stroke-width="1" stroke-dasharray="1 1" fill="none" shape-rendering="crispEdges"/><path d="M62 128.5H367M62 91.5H367M62 54.5H367M130.5 26V132M205.5 26V132M280.5 26V132M355.5 26V132" stroke="rgba(222,79,79,0.47)" stroke-width="1" stroke-dasharray="1 1" fill="none" shape-rendering="crispEdges"/><path d="M64.6 26V131.4 M61.6 128.1H368" stroke="#4d4d4d" stroke-width="0.9" fill="none"/><path d="M64.6 21l-3.2 5.2h6.4z M372.4 128.1l-5.2 -3.2v6.4z" fill="#801f1f"/><text x="215.8" y="15.4" text-anchor="middle">Null - HDD Temperature</text><text x="58.3" y="131.9" text-anchor="end">0</text><text x="58.3" y="95.1" text-anchor="end">10</text><text x="58.3" y="58.3" text-anchor="end">20</text><text x="131.5" y="140.2" text-anchor="middle">Dom 00:00</text><text x="281.5" y="140.2" text-anchor="middle">Dom 12:00</text><text transform="translate(13.9 78) rotate(-90)" text-anchor="middle">º celsius</text><text class="wm" transform="translate(369.3 6.3) rotate(90)">RRDTOOL / TOBI OETIKER</text></svg>
<svg class="ic" style="left:1682px;top:570px" width="17" height="17" viewBox="0 0 17 17"><path d="M10 9.8L14.4 14.2" stroke="#6e4410" stroke-width="3.4" stroke-linecap="round"/><path d="M10.2 10L14.3 14.1" stroke="#f2b03c" stroke-width="1.9" stroke-linecap="round"/><path d="M8.6 8.4l1.6 1.6" stroke="#6a6a8a" stroke-width="1.6"/><circle cx="5.5" cy="5.2" r="4.9" fill="#a8e2f8" stroke="#5f86c4" stroke-width="1"/><circle cx="4.4" cy="4.2" r="2.9" fill="#e6fbff" opacity=".8"/></svg>
<svg class="ic" style="left:1682px;top:591px" width="17" height="17" viewBox="0 0 17 17"><circle cx="7" cy="7.8" r="6.5" fill="#3a6cf2" stroke="#141ea0" stroke-width="1.1"/><path d="M1.4 8.6a5.6 5.6 0 0 0 11.2 0c-3 2-8 2-11.2 0z" fill="#7ab2ff" opacity=".9"/><path d="M2.2 5.6a5 5 0 0 1 9.6 0c-3-1.4-6.6-1.4-9.6 0z" fill="#2448d0" opacity=".6"/><path d="M7 3.8v5.8M4.2 7.4l2.8 3 2.8-3" stroke="#fff" stroke-width="2" fill="none" stroke-linejoin="round" stroke-linecap="round"/></svg>
<svg class="ic" style="left:1682px;top:612px" width="17" height="17" viewBox="0 0 17 17"><path d="M9.4 9L13.3 12.9" stroke="#b45a00" stroke-width="5" stroke-linecap="round"/><path d="M9.2 8.8L13.2 12.8" stroke="#ff9a0c" stroke-width="3.6" stroke-linecap="round"/><path d="M9.6 9.8L12 12.2" stroke="#ffd040" stroke-width="1.3" stroke-linecap="round"/><path d="M4.45 2.37A2.55 2.55 0 1 1 2.27 4.55" stroke="#8288aa" stroke-width="5.1" fill="none"/><path d="M4.45 2.37A2.55 2.55 0 1 1 2.27 4.55" stroke="#e9eaf1" stroke-width="3.5" fill="none"/><path d="M6.6 2.4A3.6 3.6 0 0 1 7.6 7.4" stroke="#fff" stroke-width="1.2" fill="none" opacity=".8"/></svg>
<svg class="ic" style="left:1682px;top:634px" width="17" height="17" viewBox="0 0 17 17"><circle cx="7" cy="7.8" r="6.5" fill="#d2646c" stroke="#7a2226" stroke-width="1.1"/><path d="M1.4 7a5.6 5.6 0 0 1 11.2 0c-3-2-8-2-11.2 0z" fill="#ecb0b4" opacity=".75"/><path d="M7 12v-6.4M4.2 8.2l2.8-3 2.8 3" stroke="#fff" stroke-width="1.9" fill="none" stroke-linejoin="round" stroke-linecap="round"/></svg>
<svg class="g" style="left:15px;top:730px" width="380" height="160" viewBox="0 0 380 160"><rect width="380" height="160" fill="#f3f3f3"/><path d="M0 0H380L378 2H2V158L0 160Z" fill="#cfcfcf"/><path d="M380 160H0L2 158H378V2L380 0Z" fill="#9e9e9e"/><rect x="65" y="28" width="300" height="100" fill="#fff"/><clipPath id="c16"><rect x="65" y="28" width="300" height="100"/></clipPath><clipPath id="c16o"><rect x="65" y="26" width="300" height="103"/></clipPath><g clip-path="url(#c16)"><path d="M65 108.3l1.5 1.5 1 -7.6 1 -7.6 1 7.9 1 -5.5 1 7.6 1 3.3 1 -1.6 1 -7.8 1 6.6 1 .8 1 -7.6 1 18.3 1 -.9 1 -.1 1 .9 1 -10.4 1 -18.8 1 -21.5 1 20.2 1 30.9 1 -.9 1 .2 1 -.6 1 1.2 1 -.6 1 -.5 1 -6 1 -14.8 1 -14.9 1 13.9 1 15.4 1 -4.4 1 -7 1 7.3 1 4.6 1 -1.2 1 2.5 1 -.6 1 .5 1 -1.1 1 .6 1 -2.7 1 -2.3 1 2.6 1 -11 1 -10.4 1 10.9 1 -12 1 4.2 1 -15.3 1 15.7 1 7 1 -10.4 1 10.7 1 8.7 1 1.9 1 -5.2 1 5 1 .7 1 -6.7 1 -9.3 1 8.4 1 -2.8 1 -10.5 1 11.4 1 -2.2 1 8.2 1 5.3 1 -1.7 1 1.4 1 -.2 1 .7 1 .4 1 -2.5 1 1.1 1 1.2 1 -4.5 1 -21.2 1 -20.6 1 20.5 1 18.6 1 5.7 1 .3 1 -4.8 1 5.1 1 0 1 1 1 -3.1 1 2 1 .4 1 -1.4 1 -1.3 1 -5.7 1 7 1 -13.8 1 -11 1 11.3 1 -6.5 1 10.6 1 8.1 1 -1.9 1 -7.6 1 6.7 1 5 1 .5 1 .5 1 -.9 1 -3.7 1 -22.9 1 -21.9 1 22.4 1 22.1 1 -3 1 -8.5 1 -.4 1 -29.1 1 -27.9 1 29.1 1 28.1 1 13.9 1 1.5 1 1.6 1 -2.2 1 1.3 1 6 1 1.1 114 0 1 -1.7 1 -4.2 1 -4.1 1 4.1 1 -2.1 1 3.4 1 3.5 1 1.1 1 1 27 0 1 -3.7 1 -5 1 -5.9 1 -3.8 1 -10.7 1 9.8 1 -8.6 1 -15.3 1 15.6 1 5.8 1 6 1 -7.9 1 5.9 1 -10.3 1 10.1 1 9.8 1 -4.3 1 4.2 1 -5 1 4.7 1 .7 1 -1V119.3H65Z" fill="#b90054"/><path d="M65 119.5l299.5 0" fill="none" stroke="#f5d000" stroke-width="1.0" stroke-linejoin="round"/></g><path d="M62 107.5H367M62 82.5H367M62 58.5H367M62 33.5H367M68.5 26V130M80.5 26V130M93.5 26V130M105.5 26V130M118.5 26V130M143.5 26V130M155.5 26V130M168.5 26V130M180.5 26V130M193.5 26V130M218.5 26V130M230.5 26V130M243.5 26V130M255.5 26V130M268.5 26V130M293.5 26V130M305.5 26V130M318.5 26V130M330.5 26V130M343.5 26V130" stroke="rgba(143,143,143,0.38)" stroke-width="1" stroke-dasharray="1 1" fill="none" shape-rendering="crispEdges"/><path d="M62 119.5H367M62 94.5H367M62 70.5H367M62 46.5H367M130.5 26V132M205.5 26V132M280.5 26V132M355.5 26V132" stroke="rgba(222,79,79,0.47)" stroke-width="1" stroke-dasharray="1 1" fill="none" shape-rendering="crispEdges"/><path d="M64.6 26V131.4 M61.6 128.1H368" stroke="#4d4d4d" stroke-width="0.9" fill="none"/><path d="M64.6 21l-3.2 5.2h6.4z M372.4 128.1l-5.2 -3.2v6.4z" fill="#801f1f"/><text x="215.8" y="15.4" text-anchor="middle">Null - IP Protocol Statistics</text><text x="46.3" y="123" text-anchor="end">0</text><text x="58.3" y="98.6" text-anchor="end">10 k</text><text x="58.3" y="74.2" text-anchor="end">20 k</text><text x="58.3" y="49.8" text-anchor="end">30 k</text><text x="131.5" y="140.2" text-anchor="middle">Dom 00:00</text><text x="281.5" y="140.2" text-anchor="middle">Dom 12:00</text><text transform="translate(13.9 78) rotate(-90)" text-anchor="middle">per 5 minutes</text><text class="wm" transform="translate(369.3 6.3) rotate(90)">RRDTOOL / TOBI OETIKER</text></svg>
<svg class="ic" style="left:403px;top:736px" width="17" height="17" viewBox="0 0 17 17"><path d="M10 9.8L14.4 14.2" stroke="#6e4410" stroke-width="3.4" stroke-linecap="round"/><path d="M10.2 10L14.3 14.1" stroke="#f2b03c" stroke-width="1.9" stroke-linecap="round"/><path d="M8.6 8.4l1.6 1.6" stroke="#6a6a8a" stroke-width="1.6"/><circle cx="5.5" cy="5.2" r="4.9" fill="#a8e2f8" stroke="#5f86c4" stroke-width="1"/><circle cx="4.4" cy="4.2" r="2.9" fill="#e6fbff" opacity=".8"/></svg>
<svg class="ic" style="left:403px;top:757px" width="17" height="17" viewBox="0 0 17 17"><circle cx="7" cy="7.8" r="6.5" fill="#3a6cf2" stroke="#141ea0" stroke-width="1.1"/><path d="M1.4 8.6a5.6 5.6 0 0 0 11.2 0c-3 2-8 2-11.2 0z" fill="#7ab2ff" opacity=".9"/><path d="M2.2 5.6a5 5 0 0 1 9.6 0c-3-1.4-6.6-1.4-9.6 0z" fill="#2448d0" opacity=".6"/><path d="M7 3.8v5.8M4.2 7.4l2.8 3 2.8-3" stroke="#fff" stroke-width="2" fill="none" stroke-linejoin="round" stroke-linecap="round"/></svg>
<svg class="ic" style="left:403px;top:778px" width="17" height="17" viewBox="0 0 17 17"><path d="M9.4 9L13.3 12.9" stroke="#b45a00" stroke-width="5" stroke-linecap="round"/><path d="M9.2 8.8L13.2 12.8" stroke="#ff9a0c" stroke-width="3.6" stroke-linecap="round"/><path d="M9.6 9.8L12 12.2" stroke="#ffd040" stroke-width="1.3" stroke-linecap="round"/><path d="M4.45 2.37A2.55 2.55 0 1 1 2.27 4.55" stroke="#8288aa" stroke-width="5.1" fill="none"/><path d="M4.45 2.37A2.55 2.55 0 1 1 2.27 4.55" stroke="#e9eaf1" stroke-width="3.5" fill="none"/><path d="M6.6 2.4A3.6 3.6 0 0 1 7.6 7.4" stroke="#fff" stroke-width="1.2" fill="none" opacity=".8"/></svg>
<svg class="ic" style="left:403px;top:800px" width="17" height="17" viewBox="0 0 17 17"><circle cx="7" cy="7.8" r="6.5" fill="#d2646c" stroke="#7a2226" stroke-width="1.1"/><path d="M1.4 7a5.6 5.6 0 0 1 11.2 0c-3-2-8-2-11.2 0z" fill="#ecb0b4" opacity=".75"/><path d="M7 12v-6.4M4.2 8.2l2.8-3 2.8 3" stroke="#fff" stroke-width="1.9" fill="none" stroke-linejoin="round" stroke-linecap="round"/></svg>
<svg class="g" style="left:442px;top:730px" width="380" height="160" viewBox="0 0 380 160"><rect width="380" height="160" fill="#f3f3f3"/><path d="M0 0H380L378 2H2V158L0 160Z" fill="#cfcfcf"/><path d="M380 160H0L2 158H378V2L380 0Z" fill="#9e9e9e"/><rect x="65" y="28" width="300" height="100" fill="#fff"/><clipPath id="c17"><rect x="65" y="28" width="300" height="100"/></clipPath><clipPath id="c17o"><rect x="65" y="26" width="300" height="103"/></clipPath><g clip-path="url(#c17)"><path d="M65 38.4l1.5 .6 1 -2.5 1 4.3 1 .1 1 -2.2 1 3 1 -1.2 1 1.7 1 -2.8 1 3.4 1 .6 1 -2.5 1 -11.4 1 8.1 1 4.5 1 -.4 1 -.8 1 2 1 .3 1 .6 1 -3 1 .3 1 2.7 1 .3 1 .7 1 -.5 1 -1.5 1 .5 1 1.4 1 .1 1 -2.6 1 -.9 1 2.5 1 -2.3 1 2.7 1 .5 1 -1.5 1 1 1 .7 1 -4 1 -10.4 1 11.3 1 1.2 1 -1.2 1 .3 1 -.5 1 -10.1 1 5.7 1 -.2 1 3.3 1 -2.2 1 1.1 1 -.3 1 1 1 -2.9 1 3.5 1 -2.2 1 2 1 .2 1 -9 1 8.7 1 -7.7 1 7.5 1 -1 1 1.9 1 -2.3 1 4 1 -.7 1 -.7 1 1.2 1 -2.5 1 3.5 1 -2.9 1 .6 1 3.2 1 -3.2 1 1.2 1 .1 1 0 1 -11.9 1 11.3 1 1.2 1 .4 1 -3.9 1 3 1 .5 1 -1.2 1 1.3 1 -.5 1 1 1 -.5 1 .1 1 .3 1 -1.4 1 -1.8 1 1.1 1 2.1 1 -11 1 9.9 1 -3.4 1 3.4 1 -.4 1 -.1 1 -1.3 1 -2 1 -1.5 1 1.9 1 .9 1 .5 1 -2.7 1 2.3 1 -7.5 1 6.7 1 -.7 1 .5 1 -.1 1 -.1 1 -6.3 1 8.6 1 1 1 .9 1 -1.7 1 1.8 1 -.6 1 -.5 1 0 1 -8.5 1 10.7 1 -3.2 1 2.5 1 .6 1 .2 1 -.7 1 .9 1 .6 1 -1.4 1 -1.6 1 2.4 1 -1.6 1 1.7 1 0 1 -7.1 1 7.7 1 -1.7 1 -1.1 1 2.9 1 .1 1 -3.1 1 2.8 1 .3 1 -.7 1 -1.1 1 -.2 1 -.1 1 .6 1 .9 1 -1 1 1 1 -.2 2 0 1 -1.8 1 1.3 1 -.3 1 -.4 1 -.7 1 2.4 1 .2 1 -2.8 1 2.4 1 .1 1 .2 1 -5.7 1 6.5 1 -3.3 1 2.4 2 0 1 1 1 -1.2 1 .5 1 .1 1 .1 1 .3 1 -1.4 1 1.5 1 -.5 1 .6 1 -.1 1 -1.2 1 .8 1 .1 1 -1.5 1 .4 1 .9 1 .3 1 .1 1 -.4 1 -1.5 1 1.1 1 -2 1 .9 1 1.2 1 -.1 1 -2.6 1 .8 1 -1 1 3.1 1 -.4 1 .7 1 -2.3 1 1.6 1 .3 1 .4 1 -3 1 -4.2 1 6.4 1 -.4 1 -1 1 .3 1 1.2 1 -.6 1 -.4 1 -.7 1 .1 1 1.6 1 -1 1 .1 1 -.9 1 1.1 1 -.4 1 1.6 1 .1 1 -.6 1 .5 1 -7 1 5.2 1 0 1 1.1 1 -.8 1 1 1 .2 1 -1 1 -.7 1 1.4 1 .6 1 -.6 1 .1 1 -.8 1 .8 1 .5 1 -1.3 1 .9 1 -2.2 1 2.7 1 -.7 1 .8 1 -1.1 1 1.2 1 0 1 -1.7 1 1.7 1 -.6 1 -1.5 1 .4 1 1.8 1 -3 1 -4.4 1 6.6 1 -.7 1 -1.4 1 2.3 1 .4 1 -.4 1 .4 1 -1.9 1 .9 1 -2.7 1 .1 1 2.6 1 -3.4 1 2.1 1 .5 1 -.1 1 0 1 -2.7 1 1.6 1 -.9 1 -1.1 1 1.3 1 .8 1 -13.8 1 12.9 1 -2.4 1 .4 1 1.8 1 .2 1 -10.4 1 9.9V129.5H65Z" fill="#f6dd9e"/><path d="M65 38.4l1.5 1.6 1 -3.5 1 4.5 1 .5 1 -2.8 1 3.8 1 -2 1 1.7 1 -2.8 1 5.3 1 -.2 1 -3.6 1 -11.4 1 8.1 1 6.3 1 -2.2 1 -.8 1 3.4 1 -.1 1 3.1 1 -6.5 1 .3 1 3.7 1 -.7 1 2.3 1 -2.1 1 -1.5 1 .5 1 2.8 1 -1.3 1 -2.6 1 -.9 1 2.5 1 -2.3 1 2.7 1 .5 1 -1.5 1 1 1 1.5 1 -4.8 1 -10.4 1 11.3 1 1.2 1 -1.2 1 1.4 1 -.7 1 -11 1 5.7 1 -.2 1 5.6 1 -4.5 1 1.1 1 -.3 1 3.2 1 -5.1 1 4.2 1 -2.9 1 4 1 1.7 1 -12.5 1 9.5 1 -8.5 1 7.9 1 -1.4 1 1.9 1 -2.3 1 4 1 -.7 1 -.7 1 1.2 1 -2.5 1 5.8 1 -5.2 1 .6 1 4 1 -4 1 1.2 1 .1 1 0 1 -11.9 1 11.3 1 3.5 1 .4 1 -6.2 1 3.5 1 1.1 1 -2.3 1 3.2 1 -2.4 1 1.2 1 -.2 1 0 1 1.6 1 -3.1 1 -1.8 1 1.1 1 3.9 1 -12.8 1 12.1 1 -5.6 1 4.4 1 2.1 1 -3.5 1 -1.4 1 -2 1 -1.5 1 1.9 1 .9 1 1.5 1 -3.7 1 4.3 1 -9.5 1 6.7 1 -.7 1 2.9 1 -1 1 0 1 -7.9 1 8.6 1 4.5 1 -1 1 -3.3 1 3.7 1 -2.5 1 -.5 1 0 1 -8.5 1 10.8 1 -3.3 1 2.5 1 .6 1 1.4 1 -1.9 1 .9 1 1.4 1 -2.2 1 -1.6 1 2.4 1 -1.6 1 2.2 1 -.5 1 -7.1 1 8.5 1 -2.5 1 -1.1 1 3.3 1 .1 1 -3.5 1 4.3 1 2.3 1 -2.6 1 -2.7 1 -.2 1 -.1 1 .6 1 .9 1 -1 1 1.2 1 .4 1 .7 1 -.2 1 -3.1 1 1.3 1 -.3 1 -.4 1 -.7 1 4 1 -1.1 1 -3.1 1 2.4 1 .5 1 .7 1 -6.6 1 7.6 1 -4.4 1 3.1 1 -.7 1 3.5 1 -1.7 1 -2 1 1.7 1 -1.1 1 1.4 1 .8 1 -3.2 1 3.2 1 -1.6 1 1.1 1 -.6 1 -1.8 1 2.2 1 -1.3 1 -1.5 1 .4 1 1.5 1 .1 1 .8 1 .1 1 -3.1 1 1.1 1 -2 1 .9 1 1.6 1 -.5 1 -2.6 1 .8 1 -1 1 3.1 1 -.2 1 .5 1 -2.3 1 3 1 -1 1 .5 1 -3.2 1 -4.2 1 7.6 1 -1.6 1 -1 1 .3 1 2.2 1 -1.6 1 -.4 1 -.7 1 .1 1 1.6 1 -1 1 .1 1 -.9 1 1.1 1 -.4 1 3.1 1 2.1 1 -3.3 1 0 1 -7.3 1 5.2 1 0 1 1.1 1 -.8 1 1 1 1.5 1 -2.3 1 -.7 1 2 1 1.1 1 -1.7 1 1.7 1 -2.4 1 .8 1 1.8 1 -2.6 1 1.8 1 -3.1 1 4.1 1 -2.1 1 .8 1 -1.1 1 1.7 1 -.4 1 -1.8 1 3.4 1 -.9 1 -2.9 1 .4 1 3.4 1 -4.6 1 -4.4 1 6.7 1 -.8 1 -1.4 1 4 1 -.3 1 -.2 1 2.7 1 -5.4 1 1.4 1 -3.2 1 .1 1 3.6 1 -4.4 1 2.1 1 1.4 1 -.3 1 .3 1 -3.7 1 1.6 1 -.9 1 -1.1 1 1.3 1 2.5 1 -15.5 1 12.9 1 -2.4 1 .4 1 3 1 .1 1 -11.5 1 9.9" fill="none" stroke="#eacc00" stroke-width="1.0" stroke-linejoin="round"/><path d="M65 38.8l1.5 .2 1 1 1 .8 1 .1 1 .4 1 .4 1 .4 1 .6 1 .3 1 -.2 1 .6 1 -.1 1 -6.1 1 2.4 1 2.5 1 .9 1 .2 1 -.3 1 .3 1 .6 1 -.3 1 .1 1 .2 1 .8 1 .2 1 .5 1 -.8 1 .7 1 -.5 1 .1 2 0 1 -.4 1 .2 1 .3 1 .1 1 -.4 1 -.4 1 .7 1 -.6 1 -.4 1 -.1 1 -.5 1 -1 1 -.2 1 -.5 1 -.6 1 -.1 1 -.7 1 .1 1 0 1 .2 1 -.6 1 0 1 .2 1 .4 1 -.1 1 -.1 1 .2 1 -.5 1 .2 1 .4 1 -.6 1 .4 1 .6 1 .7 1 .9 1 .9 1 -.4 1 .9 1 -.5 1 -.1 1 .5 1 -.3 1 .7 1 -.3 1 0 1 -.2 1 -.4 1 .5 1 -.3 1 -.6 1 .4 1 .1 1 -1 1 .5 1 .6 1 -.5 1 .5 1 0 1 -.5 1 .1 1 .3 1 -.1 1 0 1 -.1 1 .2 1 -.9 1 -.2 1 .2 1 -.2 1 -.4 1 -.1 1 -.1 1 -.7 1 -.2 1 .5 1 -.2 1 -.8 1 -.4 1 0 1 .2 1 .1 1 -1 1 -.3 1 -.1 1 -.1 1 .9 1 1.6 1 .8 1 .9 1 .5 1 -.4 1 .4 1 .2 1 .8 1 -.1 1 -.2 1 .6 1 -.1 1 -.2 1 -.2 1 .3 1 .4 1 .1 1 -.1 1 -.2 1 -.3 1 1 1 -.9 1 .1 1 .8 1 -.3 1 0 1 .1 1 0 1 .1 1 -.6 1 .3 1 .3 1 -.7 1 0 1 .5 1 -.5 1 0 1 .3 1 .4 1 -.6 1 -.2 2 0 1 .8 1 -.8 1 .9 1 -.2 1 -.1 1 -.1 1 .2 1 -.4 1 .2 1 -.1 1 .2 1 .3 1 .5 1 -.6 1 -.3 1 .8 1 -.8 1 1 1 -.3 1 -.4 1 .1 1 .1 1 .3 1 0 1 .1 1 -.5 1 .6 1 -.1 1 -.6 1 .2 1 .5 1 -.5 1 -.5 1 .4 1 .3 1 .1 1 -.4 1 .3 1 -.1 1 .2 1 -.5 1 -.2 1 .3 1 -.1 1 .3 1 -.7 1 .7 1 -.7 1 .9 1 -.6 1 -.3 1 .3 1 .4 1 0 1 -.8 1 0 1 .7 1 -.1 1 -.5 1 0 1 .8 1 -.5 1 .3 1 .1 1 -.6 1 .2 1 .3 1 -.6 1 .5 2 0 1 .1 1 -.6 1 .5 1 -.6 1 .3 1 .1 1 -.3 1 .5 1 .3 1 -.6 1 .6 1 -.8 1 -.1 1 .6 1 .3 1 -.8 1 .7 1 -.7 1 .5 1 -.4 1 0 1 .7 1 -.2 1 -.1 1 .3 1 -.7 1 .7 3 0 1 -.6 1 .6 1 -.4 1 .5 1 -.7 1 0 1 -.1 1 .8 1 -.6 1 0 1 .4 1 -.4 1 .4 1 -.5 1 -.5 1 -.2 1 .3 1 -.1 1 -.9 1 .5 1 -.4 1 -.1 1 0 1 -.3 1 .3 1 -.5 1 -.3 1 -.3 1 .1 1 0 1 -.3 1 -.2 1 -.2 1 -.4 1 .2 1 -.2 1 .5" fill="none" stroke="#ff2200" stroke-width="1.5" stroke-linejoin="round"/><rect x="364.5" y="27" width="1" height="102" fill="#fff"/></g><path d="M62 118.5H367M62 98.5H367M62 78.5H367M62 58.5H367M62 38.5H367M68.5 26V130M80.5 26V130M93.5 26V130M105.5 26V130M118.5 26V130M143.5 26V130M155.5 26V130M168.5 26V130M180.5 26V130M193.5 26V130M218.5 26V130M230.5 26V130M243.5 26V130M255.5 26V130M268.5 26V130M293.5 26V130M305.5 26V130M318.5 26V130M330.5 26V130M343.5 26V130" stroke="rgba(143,143,143,0.38)" stroke-width="1" stroke-dasharray="1 1" fill="none" shape-rendering="crispEdges"/><path d="M62 128.5H367M62 108.5H367M62 88.5H367M62 68.5H367M62 48.5H367M62 28.5H367M130.5 26V132M205.5 26V132M280.5 26V132M355.5 26V132" stroke="rgba(222,79,79,0.47)" stroke-width="1" stroke-dasharray="1 1" fill="none" shape-rendering="crispEdges"/><path d="M64.6 26V131.4 M61.6 128.1H368" stroke="#4d4d4d" stroke-width="0.9" fill="none"/><path d="M64.6 21l-3.2 5.2h6.4z M372.4 128.1l-5.2 -3.2v6.4z" fill="#801f1f"/><text x="215.8" y="15.4" text-anchor="middle">Null - Load Average</text><text x="58.3" y="132.2" text-anchor="end">0.0</text><text x="58.3" y="112.2" text-anchor="end">1.0</text><text x="58.3" y="92.2" text-anchor="end">2.0</text><text x="58.3" y="72.2" text-anchor="end">3.0</text><text x="58.3" y="52.2" text-anchor="end">4.0</text><text x="58.3" y="32.2" text-anchor="end">5.0</text><text x="131.5" y="140.2" text-anchor="middle">Dom 00:00</text><text x="281.5" y="140.2" text-anchor="middle">Dom 12:00</text><text transform="translate(13.9 78) rotate(-90)" text-anchor="middle">processes in the run queue</text><text class="wm" transform="translate(369.3 6.3) rotate(90)">RRDTOOL / TOBI OETIKER</text></svg>
<svg class="ic" style="left:830px;top:736px" width="17" height="17" viewBox="0 0 17 17"><path d="M10 9.8L14.4 14.2" stroke="#6e4410" stroke-width="3.4" stroke-linecap="round"/><path d="M10.2 10L14.3 14.1" stroke="#f2b03c" stroke-width="1.9" stroke-linecap="round"/><path d="M8.6 8.4l1.6 1.6" stroke="#6a6a8a" stroke-width="1.6"/><circle cx="5.5" cy="5.2" r="4.9" fill="#a8e2f8" stroke="#5f86c4" stroke-width="1"/><circle cx="4.4" cy="4.2" r="2.9" fill="#e6fbff" opacity=".8"/></svg>
<svg class="ic" style="left:830px;top:757px" width="17" height="17" viewBox="0 0 17 17"><circle cx="7" cy="7.8" r="6.5" fill="#3a6cf2" stroke="#141ea0" stroke-width="1.1"/><path d="M1.4 8.6a5.6 5.6 0 0 0 11.2 0c-3 2-8 2-11.2 0z" fill="#7ab2ff" opacity=".9"/><path d="M2.2 5.6a5 5 0 0 1 9.6 0c-3-1.4-6.6-1.4-9.6 0z" fill="#2448d0" opacity=".6"/><path d="M7 3.8v5.8M4.2 7.4l2.8 3 2.8-3" stroke="#fff" stroke-width="2" fill="none" stroke-linejoin="round" stroke-linecap="round"/></svg>
<svg class="ic" style="left:830px;top:778px" width="17" height="17" viewBox="0 0 17 17"><path d="M9.4 9L13.3 12.9" stroke="#b45a00" stroke-width="5" stroke-linecap="round"/><path d="M9.2 8.8L13.2 12.8" stroke="#ff9a0c" stroke-width="3.6" stroke-linecap="round"/><path d="M9.6 9.8L12 12.2" stroke="#ffd040" stroke-width="1.3" stroke-linecap="round"/><path d="M4.45 2.37A2.55 2.55 0 1 1 2.27 4.55" stroke="#8288aa" stroke-width="5.1" fill="none"/><path d="M4.45 2.37A2.55 2.55 0 1 1 2.27 4.55" stroke="#e9eaf1" stroke-width="3.5" fill="none"/><path d="M6.6 2.4A3.6 3.6 0 0 1 7.6 7.4" stroke="#fff" stroke-width="1.2" fill="none" opacity=".8"/></svg>
<svg class="ic" style="left:830px;top:800px" width="17" height="17" viewBox="0 0 17 17"><circle cx="7" cy="7.8" r="6.5" fill="#d2646c" stroke="#7a2226" stroke-width="1.1"/><path d="M1.4 7a5.6 5.6 0 0 1 11.2 0c-3-2-8-2-11.2 0z" fill="#ecb0b4" opacity=".75"/><path d="M7 12v-6.4M4.2 8.2l2.8-3 2.8 3" stroke="#fff" stroke-width="1.9" fill="none" stroke-linejoin="round" stroke-linecap="round"/></svg>
<svg class="g" style="left:868px;top:730px" width="380" height="160" viewBox="0 0 380 160"><rect width="380" height="160" fill="#f3f3f3"/><path d="M0 0H380L378 2H2V158L0 160Z" fill="#cfcfcf"/><path d="M380 160H0L2 158H378V2L380 0Z" fill="#9e9e9e"/><rect x="65" y="28" width="300" height="100" fill="#fff"/><clipPath id="c18"><rect x="65" y="28" width="300" height="100"/></clipPath><clipPath id="c18o"><rect x="65" y="26" width="300" height="103"/></clipPath><g clip-path="url(#c18)"><path d="M65 37.8l299.5 0V128H65Z" fill="#6ec066"/><path d="M65 59.9l1.5 -.1 1 .2 1 0 1 .1 1 -.4 1 .4 1 .1 2 0 1 -.1 1 .1 1 .1 1 -.2 1 0 1 1.9 1 -1 1 -1.2 1 -.4 1 -.5 1 -.1 1 -.5 1 -.4 2 0 1 -.7 1 -.3 1 0 1 -.5 1 0 1 -.7 1 0 1 -.1 1 -.2 1 .4 1 -.3 1 -.2 1 -.2 1 .2 1 .1 1 -.4 1 .2 1 -.5 1 .4 1 -.4 1 -.1 1 .2 1 -1 1 -.8 1 1.6 1 1.1 1 -.1 1 -.2 1 .2 1 0 1 -.5 1 0 1 -.6 1 .2 1 -.7 1 -.8 1 2.4 1 -.4 1 0 1 -.1 1 -.4 1 .3 1 -.3 1 -.5 1 -.2 1 .3 1 -.3 1 -.6 1 -.4 1 .1 1 -.6 1 -.1 1 -.2 1 -.4 1 -.4 1 -.4 1 -.1 1 -.7 1 -.5 1 -.2 1 .1 1 -.8 1 -.3 1 0 1 -.6 1 -.5 1 -.4 1 -.2 1 .1 1 -.3 1 -.4 1 .3 1 -.4 1 .1 1 -.7 1 -.1 1 -.2 1 -.5 1 -.7 1 -.6 1 -.1 1 -.6 1 -.6 1 -.4 1 -.9 1 -.4 1 -.4 1 0 1 -.4 1 .1 1 -.3 1 -.1 1 -.2 1 .2 1 -.4 1 .5 1 -.1 1 -.2 1 .4 1 6.2 1 .5 1 -.2 1 .1 2 0 1 -.1 1 -.2 1 -.1 1 .6 1 -.4 1 .1 1 .1 1 .2 1 -.2 2 0 1 -.2 1 .2 1 0 1 .1 1 -.5 1 .4 1 -.4 1 .5 1 -.3 1 .1 1 -.1 1 .1 1 -.3 1 .2 1 .4 1 -.4 1 0 1 .3 1 -.4 1 0 1 .4 1 0 1 -.1 1 -.2 1 .1 1 .3 1 -.3 1 0 1 -.1 1 .2 1 -.3 1 .1 1 .3 1 -.1 1 -.4 1 .5 1 -.2 1 .1 1 -.2 1 -.1 1 .5 1 -.1 1 .1 1 0 1 -.3 1 0 1 -.3 1 .3 1 0 1 .3 1 -.1 1 -.1 1 .1 1 -.4 1 .3 1 .2 1 -.3 1 .2 1 0 1 -.3 1 .4 1 -.5 1 .2 1 .3 1 -.4 1 -.2 1 .1 1 0 1 -.1 1 .5 1 -.2 1 -.2 1 .3 1 -.4 1 .4 1 .2 1 0 1 -.2 1 .2 1 -.4 1 -.2 2 0 1 .5 1 0 1 .1 1 -.6 1 .6 1 0 1 -.4 1 -.2 1 .3 1 .3 1 0 1 -.5 1 -.2 1 .1 1 -.7 1 .3 1 -.2 1 -.8 1 .5 1 -.5 1 -.1 1 0 1 .5 1 .5 1 -.3 1 .4 1 -.6 1 .1 1 .4 1 -.3 1 .3 1 -.3 1 .2 1 .1 1 -.2 1 .3 1 -.6 1 .1 1 .4 1 -.3 1 .3 1 0 1 -.1 1 -.3 1 .5 1 -.6 1 .5 1 0 1 -.2 1 -.3 1 .4 1 -.1 1 -.3 1 .3 1 .1 1 .1 1 -.2 1 -.8 1 -.6 1 -.4 1 -.6 1 -1.3 1 .1 1 -.2 1 -.1 1 .2 1 .1 1 -.6 1 -.1 1 .5 1 -.4 1 0 1 .3 1 -.4 1 -.1 1 0V128H65Z" fill="#ffc73b"/><path d="M65 108l3.5 0 1 -.1 4 0 1 -.1 6 0 1 -.1 4 0 1 -.1 6 0 1 -.1 4 0 1 .1 6 0 1 .1 4 0 1 .1 6 0 1 .1 4 0 1 .1 8 0 1 -.1 8 0 1 -.1 10 0 1 -.1 8 0 1 -.1 10 0 1 -.1 4 0 1 -.1 1 0 1 -.1 1 -.1 1 0 1 -.1 1 0 1 -.1 5 0 1 4.4 1 -3 115 0 1 -.2 1 -.1 1 -.1 1 -.2 1 -.2 1 -.1 34 0 1 -.1 1 -.2 1 -.2 1 -.1 1 -.1 1 -.2 1 -.2 1 -.1 1 -.1 1 -.2 1 -.1 1 0 1 -.1 1 0 1 -.1 1 0 1 -.1 1 0 1 -.1V128H65Z" fill="#e89a1c"/><path d="M65 111l3.5 0 1 -.1 4 0 1 -.1 6 0 1 -.1 4 0 1 -.1 6 0 1 -.1 4 0 1 .1 6 0 1 .1 4 0 1 .1 6 0 1 .1 4 0 1 .1 8 0 1 -.1 8 0 1 -.1 10 0 1 -.1 8 0 1 -.1 10 0 1 -.1 4 0 1 -.1 1 0 1 -.1 1 -.1 1 0 1 -.1 1 0 1 -.1 5 0 1 4.4 116 0 1 -.2 1 -.1 1 -.1 1 -.2 1 -.2 1 -.1 34 0 1 -.1 1 -.2 1 -.2 1 -.1 1 -.1 1 -.2 1 -.2 1 -.1 1 -.1 1 -.2 1 -.1 1 0 1 -.1 1 0 1 -.1 1 0 1 -.1 1 0 1 -.1V128H65Z" fill="#b04444"/><rect x="364.5" y="27" width="1" height="102" fill="#fff"/></g><path d="M62 116.5H367M62 92.5H367M62 69.5H367M62 45.5H367M68.5 26V130M80.5 26V130M93.5 26V130M105.5 26V130M118.5 26V130M143.5 26V130M155.5 26V130M168.5 26V130M180.5 26V130M193.5 26V130M218.5 26V130M230.5 26V130M243.5 26V130M255.5 26V130M268.5 26V130M293.5 26V130M305.5 26V130M318.5 26V130M330.5 26V130M343.5 26V130" stroke="rgba(143,143,143,0.38)" stroke-width="1" stroke-dasharray="1 1" fill="none" shape-rendering="crispEdges"/><path d="M62 128.5H367M62 104.5H367M62 80.5H367M62 57.5H367M62 33.5H367M130.5 26V132M205.5 26V132M280.5 26V132M355.5 26V132" stroke="rgba(222,79,79,0.47)" stroke-width="1" stroke-dasharray="1 1" fill="none" shape-rendering="crispEdges"/><path d="M65 36.9l299.5 0" fill="none" stroke="#000" stroke-width="2.0" clip-path="url(#c18o)"/><path d="M64.6 26V131.4 M61.6 128.1H368" stroke="#4d4d4d" stroke-width="0.9" fill="none"/><path d="M64.6 21l-3.2 5.2h6.4z M372.4 128.1l-5.2 -3.2v6.4z" fill="#801f1f"/><text x="215.8" y="15.4" text-anchor="middle">Null - Memory Usage</text><text x="46.3" y="131.7" text-anchor="end">0.0</text><text x="58.3" y="108.1" text-anchor="end">2.0 G</text><text x="58.3" y="84.5" text-anchor="end">4.0 G</text><text x="58.3" y="60.9" text-anchor="end">6.0 G</text><text x="58.3" y="37.3" text-anchor="end">8.0 G</text><text x="131.5" y="140.2" text-anchor="middle">Dom 00:00</text><text x="281.5" y="140.2" text-anchor="middle">Dom 12:00</text><text transform="translate(13.9 78) rotate(-90)" text-anchor="middle">bytes</text><text class="wm" transform="translate(369.3 6.3) rotate(90)">RRDTOOL / TOBI OETIKER</text></svg>
<svg class="ic" style="left:1256px;top:736px" width="17" height="17" viewBox="0 0 17 17"><path d="M10 9.8L14.4 14.2" stroke="#6e4410" stroke-width="3.4" stroke-linecap="round"/><path d="M10.2 10L14.3 14.1" stroke="#f2b03c" stroke-width="1.9" stroke-linecap="round"/><path d="M8.6 8.4l1.6 1.6" stroke="#6a6a8a" stroke-width="1.6"/><circle cx="5.5" cy="5.2" r="4.9" fill="#a8e2f8" stroke="#5f86c4" stroke-width="1"/><circle cx="4.4" cy="4.2" r="2.9" fill="#e6fbff" opacity=".8"/></svg>
<svg class="ic" style="left:1256px;top:757px" width="17" height="17" viewBox="0 0 17 17"><circle cx="7" cy="7.8" r="6.5" fill="#3a6cf2" stroke="#141ea0" stroke-width="1.1"/><path d="M1.4 8.6a5.6 5.6 0 0 0 11.2 0c-3 2-8 2-11.2 0z" fill="#7ab2ff" opacity=".9"/><path d="M2.2 5.6a5 5 0 0 1 9.6 0c-3-1.4-6.6-1.4-9.6 0z" fill="#2448d0" opacity=".6"/><path d="M7 3.8v5.8M4.2 7.4l2.8 3 2.8-3" stroke="#fff" stroke-width="2" fill="none" stroke-linejoin="round" stroke-linecap="round"/></svg>
<svg class="ic" style="left:1256px;top:778px" width="17" height="17" viewBox="0 0 17 17"><path d="M9.4 9L13.3 12.9" stroke="#b45a00" stroke-width="5" stroke-linecap="round"/><path d="M9.2 8.8L13.2 12.8" stroke="#ff9a0c" stroke-width="3.6" stroke-linecap="round"/><path d="M9.6 9.8L12 12.2" stroke="#ffd040" stroke-width="1.3" stroke-linecap="round"/><path d="M4.45 2.37A2.55 2.55 0 1 1 2.27 4.55" stroke="#8288aa" stroke-width="5.1" fill="none"/><path d="M4.45 2.37A2.55 2.55 0 1 1 2.27 4.55" stroke="#e9eaf1" stroke-width="3.5" fill="none"/><path d="M6.6 2.4A3.6 3.6 0 0 1 7.6 7.4" stroke="#fff" stroke-width="1.2" fill="none" opacity=".8"/></svg>
<svg class="ic" style="left:1256px;top:800px" width="17" height="17" viewBox="0 0 17 17"><circle cx="7" cy="7.8" r="6.5" fill="#d2646c" stroke="#7a2226" stroke-width="1.1"/><path d="M1.4 7a5.6 5.6 0 0 1 11.2 0c-3-2-8-2-11.2 0z" fill="#ecb0b4" opacity=".75"/><path d="M7 12v-6.4M4.2 8.2l2.8-3 2.8 3" stroke="#fff" stroke-width="1.9" fill="none" stroke-linejoin="round" stroke-linecap="round"/></svg>
<svg class="g" style="left:1294px;top:730px" width="380" height="160" viewBox="0 0 380 160"><rect width="380" height="160" fill="#f3f3f3"/><path d="M0 0H380L378 2H2V158L0 160Z" fill="#cfcfcf"/><path d="M380 160H0L2 158H378V2L380 0Z" fill="#9e9e9e"/><rect x="65" y="28" width="300" height="100" fill="#fff"/><clipPath id="c19"><rect x="65" y="28" width="300" height="100"/></clipPath><clipPath id="c19o"><rect x="65" y="26" width="300" height="103"/></clipPath><g clip-path="url(#c19)"><path d="M65 38l1.5 1 1 1.2 1 1 1 -.2 1 .4 1 .3 1 -.5 1 -.7 1 .6 1 .8 1 .8 1 -.1 1 .5 1 .8 1 .1 1 .3 1 .6 1 -.9 1 -1.6 1 .6 1 .6 1 .1 1 -.2 1 -.3 1 .3 1 -.3 1 .1 1 0 1 .3 1 -.2 1 .2 1 -.3 1 0 1 -.6 1 -.1 1 -.2 1 -.7 1 -.4 1 .1 1 .6 1 0 1 .1 1 .5 1 .5 1 .4 1 -.2 1 .3 1 -.1 1 0 1 -.2 1 .5 1 -.1 1 -.1 1 .2 1 -.3 1 -.1 1 -.1 1 .3 1 -.1 1 0 1 1 1 .7 1 -.4 1 .4 1 -.5 1 .4 1 -.2 1 .2 1 -.3 1 -.8 1 .2 1 -.5 1 .4 1 -.3 1 .2 1 -.1 1 -.2 1 .4 1 -.8 1 -.4 1 .4 1 .8 1 -.2 1 -.1 1 0 1 .2 1 .2 1 -.3 1 .1 1 .4 1 0 1 -.2 1 .1 1 -.1 1 .2 1 0 1 -.1 2 0 1 .1 1 -1.6 1 -1.6 1 1.4 1 1.4 1 -1.5 1 -1.2 1 1 1 .6 1 1.3 1 1 1 -1.1 1 -.7 1 0 1 .2 1 -.3 1 .1 1 .3 1 -.3 1 -.6 1 -1.4 1 .8 1 .3 1 .3 1 .7 1 .3 1 .6 1 .1 1 0 1 .3 1 -.3 1 .3 1 -.2 1 -.3 1 .1 1 .3 1 -.4 1 .5 1 -.6 1 .4 1 0 1 -.2 1 .2 1 -.1 1 -.1 1 0 1 -.2 1 .4 1 .1 1 -.3 1 .3 1 -.3 1 0 1 .3 1 .1 1 -.5 1 .4 1 -.3 1 .3 1 -.3 1 .4 1 -.4 1 -.1 1 -.1 1 .1 1 0 1 .4 1 -.5 1 .1 2 0 1 .4 1 -.5 1 .4 1 -.2 1 -.1 1 0 1 .2 1 -.2 1 .1 1 0 1 .1 1 .1 1 -.2 1 .2 1 0 1 -.2 1 .3 1 -.5 1 1 1 .7 1 -.1 1 .3 1 .1 1 -.2 1 -.1 1 .3 1 .1 1 -.2 1 -.1 1 .1 2 0 1 -.1 1 .2 1 -.1 1 0 1 -.1 1 -.1 1 -.1 1 .2 1 -.1 1 .1 1 -.2 1 .4 1 -.4 1 .4 1 -.2 1 .2 1 0 1 -.4 1 .1 1 .4 1 -.2 1 -.3 1 .1 1 -.1 1 .1 1 -.2 2 0 1 .2 1 0 1 -.3 1 0 1 -.1 1 -.5 1 .2 1 -.2 1 -.1 1 .2 1 -.4 2 0 1 -.7 1 -.7 1 .8 1 .9 1 .8 1 1.1 1 .8 1 .5 1 0 1 -.1 1 -.3 1 0 1 .4 1 0 1 -.1 1 .1 1 -.4 1 .1 1 .1 1 0 1 -.1 1 -.1 1 .4 1 -.4 1 .2 1 .2 1 -.4 1 .1 2 0 1 .3 1 0 1 -.4 1 -.1 1 .4 1 -.1 1 -2.8 1 -2 1 -.7 1 -1 1 1 1 1.3 1 .4 1 -.1 1 -.1 1 -.6 1 -1.3 1 -.5 1 .6 1 .5 1 .1 1 .8 1 .4 1 .6 1 -.1 1 .8V129.2H65Z" fill="#f51d30"/><rect x="364.5" y="27" width="1" height="102" fill="#fff"/></g><path d="M62 122.5H367M62 116.5H367M62 110.5H367M62 104.5H367M62 92.5H367M62 86.5H367M62 80.5H367M62 74.5H367M62 63.5H367M62 57.5H367M62 51.5H367M62 45.5H367M62 33.5H367M62 27.5H367M68.5 26V130M80.5 26V130M93.5 26V130M105.5 26V130M118.5 26V130M143.5 26V130M155.5 26V130M168.5 26V130M180.5 26V130M193.5 26V130M218.5 26V130M230.5 26V130M243.5 26V130M255.5 26V130M268.5 26V130M293.5 26V130M305.5 26V130M318.5 26V130M330.5 26V130M343.5 26V130" stroke="rgba(143,143,143,0.38)" stroke-width="1" stroke-dasharray="1 1" fill="none" shape-rendering="crispEdges"/><path d="M62 128.5H367M62 98.5H367M62 69.5H367M62 39.5H367M130.5 26V132M205.5 26V132M280.5 26V132M355.5 26V132" stroke="rgba(222,79,79,0.47)" stroke-width="1" stroke-dasharray="1 1" fill="none" shape-rendering="crispEdges"/><path d="M64.6 26V131.4 M61.6 128.1H368" stroke="#4d4d4d" stroke-width="0.9" fill="none"/><path d="M64.6 21l-3.2 5.2h6.4z M372.4 128.1l-5.2 -3.2v6.4z" fill="#801f1f"/><text x="215.8" y="15.4" text-anchor="middle">Null - Processes</text><text x="58.3" y="131.9" text-anchor="end">0</text><text x="58.3" y="102.3" text-anchor="end">50</text><text x="58.3" y="72.7" text-anchor="end">100</text><text x="58.3" y="43.1" text-anchor="end">150</text><text x="131.5" y="140.2" text-anchor="middle">Dom 00:00</text><text x="281.5" y="140.2" text-anchor="middle">Dom 12:00</text><text transform="translate(13.9 78) rotate(-90)" text-anchor="middle">processes</text><text class="wm" transform="translate(369.3 6.3) rotate(90)">RRDTOOL / TOBI OETIKER</text></svg>
<svg class="ic" style="left:1682px;top:736px" width="17" height="17" viewBox="0 0 17 17"><path d="M10 9.8L14.4 14.2" stroke="#6e4410" stroke-width="3.4" stroke-linecap="round"/><path d="M10.2 10L14.3 14.1" stroke="#f2b03c" stroke-width="1.9" stroke-linecap="round"/><path d="M8.6 8.4l1.6 1.6" stroke="#6a6a8a" stroke-width="1.6"/><circle cx="5.5" cy="5.2" r="4.9" fill="#a8e2f8" stroke="#5f86c4" stroke-width="1"/><circle cx="4.4" cy="4.2" r="2.9" fill="#e6fbff" opacity=".8"/></svg>
<svg class="ic" style="left:1682px;top:757px" width="17" height="17" viewBox="0 0 17 17"><circle cx="7" cy="7.8" r="6.5" fill="#3a6cf2" stroke="#141ea0" stroke-width="1.1"/><path d="M1.4 8.6a5.6 5.6 0 0 0 11.2 0c-3 2-8 2-11.2 0z" fill="#7ab2ff" opacity=".9"/><path d="M2.2 5.6a5 5 0 0 1 9.6 0c-3-1.4-6.6-1.4-9.6 0z" fill="#2448d0" opacity=".6"/><path d="M7 3.8v5.8M4.2 7.4l2.8 3 2.8-3" stroke="#fff" stroke-width="2" fill="none" stroke-linejoin="round" stroke-linecap="round"/></svg>
<svg class="ic" style="left:1682px;top:778px" width="17" height="17" viewBox="0 0 17 17"><path d="M9.4 9L13.3 12.9" stroke="#b45a00" stroke-width="5" stroke-linecap="round"/><path d="M9.2 8.8L13.2 12.8" stroke="#ff9a0c" stroke-width="3.6" stroke-linecap="round"/><path d="M9.6 9.8L12 12.2" stroke="#ffd040" stroke-width="1.3" stroke-linecap="round"/><path d="M4.45 2.37A2.55 2.55 0 1 1 2.27 4.55" stroke="#8288aa" stroke-width="5.1" fill="none"/><path d="M4.45 2.37A2.55 2.55 0 1 1 2.27 4.55" stroke="#e9eaf1" stroke-width="3.5" fill="none"/><path d="M6.6 2.4A3.6 3.6 0 0 1 7.6 7.4" stroke="#fff" stroke-width="1.2" fill="none" opacity=".8"/></svg>
<svg class="ic" style="left:1682px;top:800px" width="17" height="17" viewBox="0 0 17 17"><circle cx="7" cy="7.8" r="6.5" fill="#d2646c" stroke="#7a2226" stroke-width="1.1"/><path d="M1.4 7a5.6 5.6 0 0 1 11.2 0c-3-2-8-2-11.2 0z" fill="#ecb0b4" opacity=".75"/><path d="M7 12v-6.4M4.2 8.2l2.8-3 2.8 3" stroke="#fff" stroke-width="1.9" fill="none" stroke-linejoin="round" stroke-linecap="round"/></svg>
<svg class="g" style="left:15px;top:896px" width="380" height="160" viewBox="0 0 380 160"><rect width="380" height="160" fill="#f3f3f3"/><path d="M0 0H380L378 2H2V158L0 160Z" fill="#cfcfcf"/><path d="M380 160H0L2 158H378V2L380 0Z" fill="#9e9e9e"/><rect x="65" y="28" width="300" height="100" fill="#fff"/><clipPath id="c20"><rect x="65" y="28" width="300" height="100"/></clipPath><clipPath id="c20o"><rect x="65" y="26" width="300" height="103"/></clipPath><g clip-path="url(#c20)"><rect x="65" y="36.2" width="299.5" height="28" fill="#373737"/><rect x="65" y="64.1" width="299.5" height="28.6" fill="#8f005c"/><rect x="65" y="92.6" width="299.5" height="27.5" fill="#afeced"/><rect x="65" y="92.1" width="299.5" height="0.9" fill="#4a0030"/></g><path d="M62 123.5H367M62 113.5H367M62 108.5H367M62 103.5H367M62 97.5H367M62 87.5H367M62 82.5H367M62 76.5H367M62 71.5H367M62 61.5H367M62 56.5H367M62 50.5H367M62 45.5H367M62 35.5H367M62 29.5H367M68.5 26V130M80.5 26V130M93.5 26V130M105.5 26V130M118.5 26V130M143.5 26V130M155.5 26V130M168.5 26V130M180.5 26V130M193.5 26V130M218.5 26V130M230.5 26V130M243.5 26V130M255.5 26V130M268.5 26V130M293.5 26V130M305.5 26V130M318.5 26V130M330.5 26V130M343.5 26V130" stroke="rgba(143,143,143,0.38)" stroke-width="1" stroke-dasharray="1 1" fill="none" shape-rendering="crispEdges"/><path d="M62 118.5H367M62 92.5H367M62 66.5H367M62 40.5H367M130.5 26V132M205.5 26V132M280.5 26V132M355.5 26V132" stroke="rgba(222,79,79,0.47)" stroke-width="1" stroke-dasharray="1 1" fill="none" shape-rendering="crispEdges"/><path d="M64.6 26V131.4 M61.6 128.1H368" stroke="#4d4d4d" stroke-width="0.9" fill="none"/><path d="M64.6 21l-3.2 5.2h6.4z M372.4 128.1l-5.2 -3.2v6.4z" fill="#801f1f"/><text x="215.8" y="15.4" text-anchor="middle">Null - SNMP Protocol Statistics</text><text x="58.3" y="122.4" text-anchor="end">-100</text><text x="58.3" y="96.3" text-anchor="end">0</text><text x="58.3" y="70.2" text-anchor="end">100</text><text x="58.3" y="44.1" text-anchor="end">200</text><text x="131.5" y="140.2" text-anchor="middle">Dom 00:00</text><text x="281.5" y="140.2" text-anchor="middle">Dom 12:00</text><text transform="translate(13.9 78) rotate(-90)" text-anchor="middle">per 5 minutes</text><text class="wm" transform="translate(369.3 6.3) rotate(90)">RRDTOOL / TOBI OETIKER</text></svg>
<svg class="ic" style="left:403px;top:902px" width="17" height="17" viewBox="0 0 17 17"><path d="M10 9.8L14.4 14.2" stroke="#6e4410" stroke-width="3.4" stroke-linecap="round"/><path d="M10.2 10L14.3 14.1" stroke="#f2b03c" stroke-width="1.9" stroke-linecap="round"/><path d="M8.6 8.4l1.6 1.6" stroke="#6a6a8a" stroke-width="1.6"/><circle cx="5.5" cy="5.2" r="4.9" fill="#a8e2f8" stroke="#5f86c4" stroke-width="1"/><circle cx="4.4" cy="4.2" r="2.9" fill="#e6fbff" opacity=".8"/></svg>
<svg class="ic" style="left:403px;top:923px" width="17" height="17" viewBox="0 0 17 17"><circle cx="7" cy="7.8" r="6.5" fill="#3a6cf2" stroke="#141ea0" stroke-width="1.1"/><path d="M1.4 8.6a5.6 5.6 0 0 0 11.2 0c-3 2-8 2-11.2 0z" fill="#7ab2ff" opacity=".9"/><path d="M2.2 5.6a5 5 0 0 1 9.6 0c-3-1.4-6.6-1.4-9.6 0z" fill="#2448d0" opacity=".6"/><path d="M7 3.8v5.8M4.2 7.4l2.8 3 2.8-3" stroke="#fff" stroke-width="2" fill="none" stroke-linejoin="round" stroke-linecap="round"/></svg>
<svg class="ic" style="left:403px;top:944px" width="17" height="17" viewBox="0 0 17 17"><path d="M9.4 9L13.3 12.9" stroke="#b45a00" stroke-width="5" stroke-linecap="round"/><path d="M9.2 8.8L13.2 12.8" stroke="#ff9a0c" stroke-width="3.6" stroke-linecap="round"/><path d="M9.6 9.8L12 12.2" stroke="#ffd040" stroke-width="1.3" stroke-linecap="round"/><path d="M4.45 2.37A2.55 2.55 0 1 1 2.27 4.55" stroke="#8288aa" stroke-width="5.1" fill="none"/><path d="M4.45 2.37A2.55 2.55 0 1 1 2.27 4.55" stroke="#e9eaf1" stroke-width="3.5" fill="none"/><path d="M6.6 2.4A3.6 3.6 0 0 1 7.6 7.4" stroke="#fff" stroke-width="1.2" fill="none" opacity=".8"/></svg>
<svg class="ic" style="left:403px;top:966px" width="17" height="17" viewBox="0 0 17 17"><circle cx="7" cy="7.8" r="6.5" fill="#d2646c" stroke="#7a2226" stroke-width="1.1"/><path d="M1.4 7a5.6 5.6 0 0 1 11.2 0c-3-2-8-2-11.2 0z" fill="#ecb0b4" opacity=".75"/><path d="M7 12v-6.4M4.2 8.2l2.8-3 2.8 3" stroke="#fff" stroke-width="1.9" fill="none" stroke-linejoin="round" stroke-linecap="round"/></svg>
<svg class="g" style="left:442px;top:896px" width="380" height="160" viewBox="0 0 380 160"><rect width="380" height="160" fill="#f3f3f3"/><path d="M0 0H380L378 2H2V158L0 160Z" fill="#cfcfcf"/><path d="M380 160H0L2 158H378V2L380 0Z" fill="#9e9e9e"/><rect x="65" y="28" width="300" height="100" fill="#fff"/><clipPath id="c21"><rect x="65" y="28" width="300" height="100"/></clipPath><clipPath id="c21o"><rect x="65" y="26" width="300" height="103"/></clipPath><g clip-path="url(#c21)"><path d="M65 118.5l1.5 3.5 1 -2.9 1 -5.3 1 5.4 1 -4.5 1 -8.3 1 -20.7 1 -35.7 1 36.2 1 11.6 1 10.2 1 10.5 1 2.1 1 2.3 1 1.9 1 -1.1 1 .8 1 -21.2 1 -21.6 1 21.7 1 18.5 1 2.2 1 .9 1 0 1 .7 1 -1.1 1 .2 1 0 1 -.2 1 -1.9 1 -4.5 1 -9.5 1 9.7 1 -27 1 -31.8 1 31.9 1 29.3 1 2.9 1 -1.9 1 -1.7 1 2.2 1 2.3 1 -3.1 1 -3.6 1 3.2 1 -10.4 1 -12.5 1 12.6 1 -7.1 1 -15.8 1 16.8 1 1.9 1 -13 1 13.4 1 7.4 1 5 1 1.9 1 -3.4 1 4 1 -.9 1 -6.1 1 -6.1 1 6.5 1 -.5 1 -15.1 1 14.6 1 -10.7 1 -24.8 1 24.3 1 11.5 1 4.4 1 4.6 1 .9 1 -2.5 1 -1.9 1 2.3 1 1.2 1 1.6 1 -12.2 1 -14.3 1 14.6 1 6.2 1 -41 1 -40 1 40.1 1 37.8 1 3.5 1 4.4 1 .5 1 0 1 -2.7 1 -4.4 1 4.1 1 -3.9 1 -9.8 1 10.2 1 -16.9 1 -23.8 1 23.7 1 11.8 1 4.9 1 4.6 1 -5.2 1 -5.6 1 5.6 1 5.9 1 -1.4 1 -3.5 1 3 1 -8.4 1 -14.6 1 15.4 1 9.6 1 -4.2 1 -5.4 1 4.7 1 5.3 1 -.1 1 -3.7 1 -4.1 1 4.4 1 4.2 1 -.9 1 -1.1 1 1.5 1 2.3 1 1.2 1 0 1 -.3 1 1 1 -.6 1 0 1 .3 1 -.4 1 .6 1 -.8 1 .5 1 .2 1 -.3 1 .4 1 -.3 1 -.3 1 -.2 1 .3 1 0 1 -.1 1 .2 1 .5 1 -.9 1 .7 1 -.1 1 .3 1 0 1 -.4 1 .2 1 -.4 1 .6 1 -.5 1 .4 1 0 1 -.2 1 -.4 1 .7 1 -.5 1 .4 1 0 1 -.2 1 -.5 1 .8 1 -.2 1 -.8 1 .8 1 -.2 1 .4 1 0 1 -.2 1 .2 1 -.7 1 .5 1 -.6 1 .7 1 .1 1 0 1 -.3 1 .3 1 0 1 -.7 1 .7 1 -.8 1 .5 1 0 1 .3 1 -.4 1 .3 1 .1 1 -.9 1 .1 1 .1 1 .7 1 -.5 1 .4 1 -.8 1 .4 1 .5 1 -.4 1 .3 1 0 1 -.5 1 .5 1 -.2 1 .2 1 -.7 1 .1 1 .7 1 0 1 -.6 1 -.2 1 .7 1 0 1 -.1 1 .1 1 -.6 1 .4 1 -.5 1 0 1 .8 1 -.4 1 -.4 1 0 1 -.1 1 .8 1 -.6 1 .7 1 -.6 1 -.1 1 .2 1 -.1 1 .6 1 0 1 -.1 1 .1 1 -.7 1 -.1 1 -11.6 1 -13.1 1 12.5 1 5 1 3.2 1 1.7 1 2.7 1 .4 1 -.3 1 .1 1 -.2 1 .3 1 -.8 1 .4 1 -.4 1 .4 1 0 1 -.4 1 .4 1 -.5 1 1 1 0 1 -.7 1 .2 1 .3 1 0 1 -.6 1 .6 1 0 1 -.7 1 .9 1 -.5 1 -.1 1 .6 1 0 1 -5.3 1 -4.5 1 4.1 1 -6.3 1 -6.1 1 5.7 1 5.3 1 -6.5 1 -5.8 1 5.8 1 7.3 1 -7 1 -7.2 1 7.6 1 6.6 1 -2.8 1 -4.6 1 4.4 1 5.1 1 -2 1 2.8V128.2H65Z" fill="#e9c0c8"/><path d="M65 121.5l1.5 2.9 1 -1.5 1 -3.9 1 3.7 1 -2.3 1 -6 1 -12.4 1 -22.5 1 22.6 1 7 1 6.9 1 5.9 1 .9 1 1.9 1 1.1 1 -.3 1 .6 1 -13.8 1 -12.7 1 13.2 1 12 1 .6 1 .7 1 -.3 1 .1 1 -.2 1 .4 1 -.1 1 0 1 -.7 1 -3.8 1 -5.5 1 5.7 1 -17 1 -18.8 1 19.7 1 17.3 1 2.7 1 -.8 1 -1.1 1 .7 1 1.8 1 -2.6 1 -1.6 1 2 1 -6.9 1 -7.7 1 7.2 1 -3.1 1 -10 1 9.7 1 2.2 1 -9 1 8.7 1 4.5 1 2.6 1 1.8 1 -1.6 1 1.2 1 .6 1 -4.2 1 -4.1 1 3.6 1 -.4 1 -8.3 1 8.8 1 -6.5 1 -16.3 1 16.2 1 6.5 1 3.1 1 2.9 1 .4 1 -1.1 1 -1.1 1 .7 1 1 1 .7 1 -6.9 1 -9.8 1 9.9 1 3.9 1 -25.8 1 -25.4 1 25.8 1 22.6 1 2.8 1 2.5 1 .4 1 -.5 1 -1.8 1 -1.8 1 1.8 1 -1.9 1 -6 1 5.8 1 -10.7 1 -13.9 1 13.7 1 8.6 1 2.6 1 2.8 1 -3.1 1 -3.1 1 2.8 1 3.6 1 -.7 1 -1.8 1 1.1 1 -4.6 1 -9 1 9.2 1 6.4 1 -3.6 1 -2.2 1 2.8 1 3.1 1 .1 1 -2.3 1 -2.6 1 2.1 1 2.3 1 .1 1 -.5 1 .9 1 .8 1 1.6 1 0 1 -.3 1 .1 1 -.4 1 .1 1 .2 1 .3 1 0 1 -.1 1 .1 1 -.5 1 .5 1 -.7 1 .3 1 .4 1 -.3 1 -.1 1 .4 1 -.3 1 .3 1 -.6 1 .6 1 -.4 1 -.4 1 .2 1 .6 1 -.3 1 .3 1 -.1 1 -.6 1 .1 1 .6 1 -.2 1 -.2 1 .4 1 -.6 1 -.1 1 .3 1 .2 1 -.4 1 .3 1 .3 1 -.1 1 .1 1 -.6 1 .3 1 -.2 1 -.1 1 -.2 1 .8 1 -.2 1 -.5 1 .1 1 .4 1 -.3 1 .5 2 0 1 -.2 1 .2 1 -.3 1 -.5 1 .8 1 -.4 1 -.3 1 .3 1 .1 1 -.3 1 .6 1 -.7 1 .2 1 -.1 1 0 1 .6 2 0 1 -.3 1 -.4 1 0 1 .5 1 -.2 1 -.1 1 .4 1 -.7 1 .1 1 .2 1 -.2 1 .1 1 .1 1 .4 1 0 1 .1 1 0 1 -.7 1 .6 1 .1 1 -.1 1 .1 1 -.2 1 .1 1 .1 1 -.3 1 .1 1 0 1 -.4 1 .5 1 -.2 1 -.4 1 -.1 1 .6 1 .2 1 -.8 1 .5 1 .3 2 0 1 -7.6 1 -7.5 1 7.8 1 1.8 1 1.9 1 2.3 1 1 1 -.3 1 .3 1 .3 1 -.1 1 -.1 1 -.5 1 .3 1 .1 1 -.1 1 .4 1 -.5 1 -.1 1 .1 1 .3 1 .1 1 .1 2 0 1 -.3 1 -.3 1 .6 1 -.3 1 -.1 1 0 1 .4 1 -.7 1 .3 1 .3 1 -2.7 1 -3.6 1 2.2 1 -3.1 1 -3.8 1 3.6 1 3.7 1 -4.4 1 -4.6 1 4.5 1 3.8 1 -3.5 1 -4.8 1 4.3 1 4.6 1 -1.9 1 -3.1 1 3 1 2.9 1 -.5 1 1.4V128.2H65Z" fill="#fad663"/><path d="M65 120.9l1.5 2.9 1 -1.9 1 -3 1 3 1 -3.2 1 -5.8 1 -14.1 1 -24.7 1 23.9 1 9.6 1 6.6 1 7 1 1.5 1 2 1 1.2 1 -.4 1 -.2 1 -15.1 1 -14.6 1 15.5 1 13.1 1 1.7 1 -.2 1 -.2 1 .2 1 .4 1 -.2 1 .1 1 -.5 1 -1.1 1 -3.3 1 -6.9 1 6.6 1 -18.7 1 -21.2 1 20.9 1 20.7 1 2.5 1 -.9 1 -1.5 1 1.3 1 1.5 1 -1.4 1 -2.5 1 2.2 1 -7.6 1 -8.4 1 7.7 1 -4.3 1 -11.1 1 11.5 1 1.6 1 -9.3 1 10.1 1 4.7 1 2.7 1 1.9 1 -2.3 1 2.7 1 .3 1 -4.9 1 -4.8 1 4.8 1 -.2 1 -9.8 1 9.3 1 -7.1 1 -17.7 1 17.5 1 7.7 1 3.3 1 2.6 1 .8 1 -1.1 1 -2 1 2.1 1 1.5 1 0 1 -8.5 1 -10.4 1 11.2 1 3.9 1 -28.3 1 -28.5 1 28.3 1 26.5 1 2.5 1 3.1 1 0 1 -.2 1 -1.6 1 -2.9 1 2.6 1 -2.6 1 -6.9 1 7.3 1 -12.3 1 -15.9 1 15.9 1 8.7 1 3.9 1 3 1 -4 1 -3.2 1 3.2 1 4.2 1 -1.3 1 -2.5 1 2.9 1 -6 1 -11 1 10.7 1 6.8 1 -2.3 1 -3.9 1 3.6 1 3 1 .3 1 -2.8 1 -2.2 1 2.8 1 2.2 1 -.3 1 -.4 1 1 1 .8 1 1.9 1 -.6 1 .4 1 -.1 1 .2 1 -.3 1 -.3 1 .1 1 .4 1 -.4 1 .5 1 -.1 1 -.3 1 .5 1 -.4 1 0 1 -.3 1 .3 1 .2 1 0 1 .2 1 -.2 1 -.3 1 .1 1 -.3 1 .7 1 -.1 1 .1 1 -.7 1 0 1 .7 1 -.4 1 -.1 1 .5 1 -.5 1 .1 1 .2 1 .2 1 -.1 1 -.1 1 .1 1 -.1 1 -.5 1 0 1 .3 1 0 1 -.2 1 -.1 1 0 1 .1 1 0 1 .4 1 -.1 1 -.5 1 .5 1 -.1 1 -.3 1 .4 1 -.5 1 .1 1 .6 1 -.4 1 -.1 1 .5 1 -.2 1 -.1 1 -.3 1 .7 1 -.3 1 -.3 1 .4 1 .2 1 -.4 1 -.2 1 0 1 .3 1 .3 1 -.8 1 .8 1 -.3 1 -.2 1 -.2 1 .3 1 -.3 1 .7 1 -.1 1 -.6 1 .7 1 0 1 -.4 1 0 1 .3 1 -.4 1 .4 1 -.4 1 .5 1 0 1 -.8 1 .3 1 -.3 1 .7 1 0 1 -.5 1 -.1 1 .6 1 .1 1 -.3 1 -.4 1 0 1 .7 1 0 1 -.2 1 .2 1 -.6 2 0 1 -.1 1 -7.6 1 -9.2 1 9.1 1 3.2 1 1.7 1 1.4 1 1.5 1 -.2 1 .6 1 .2 1 0 1 -.4 1 .4 1 -.2 1 -.3 1 .2 1 -.3 1 .2 1 .4 1 -.3 1 .3 1 -.3 1 -.4 1 .2 1 -.2 1 .1 1 0 1 .4 1 -.4 1 .3 1 -.2 1 -.1 1 .1 1 .5 1 -.5 1 -2.9 1 -4.1 1 3.4 1 -4.5 1 -4.1 1 4.4 1 3.9 1 -5 1 -4.7 1 4.4 1 4.7 1 -4.5 1 -4.8 1 4.9 1 4.5 1 -2 1 -2.9 1 3.3 1 3.3 1 -1.3 1 1.8" fill="none" stroke="#aef03c" stroke-width="0.9" stroke-linejoin="round"/><path d="M65 118.5l1.5 3.5 1 -2.9 1 -5.3 1 5.4 1 -4.5 1 -8.3 1 -20.7 1 -35.7 1 36.2 1 11.6 1 10.2 1 10.5 1 2.1 1 2.3 1 1.9 1 -1.1 1 .8 1 -21.2 1 -21.6 1 21.7 1 18.5 1 2.2 1 .9 1 0 1 .7 1 -1.1 1 .2 1 0 1 -.2 1 -1.9 1 -4.5 1 -9.5 1 9.7 1 -27 1 -31.8 1 31.9 1 29.3 1 2.9 1 -1.9 1 -1.7 1 2.2 1 2.3 1 -3.1 1 -3.6 1 3.2 1 -10.4 1 -12.5 1 12.6 1 -7.1 1 -15.8 1 16.8 1 1.9 1 -13 1 13.4 1 7.4 1 5 1 1.9 1 -3.4 1 4 1 -.9 1 -6.1 1 -6.1 1 6.5 1 -.5 1 -15.1 1 14.6 1 -10.7 1 -24.8 1 24.3 1 11.5 1 4.4 1 4.6 1 .9 1 -2.5 1 -1.9 1 2.3 1 1.2 1 1.6 1 -12.2 1 -14.3 1 14.6 1 6.2 1 -41 1 -40 1 40.1 1 37.8 1 3.5 1 4.4 1 .5 1 0 1 -2.7 1 -4.4 1 4.1 1 -3.9 1 -9.8 1 10.2 1 -16.9 1 -23.8 1 23.7 1 11.8 1 4.9 1 4.6 1 -5.2 1 -5.6 1 5.6 1 5.9 1 -1.4 1 -3.5 1 3 1 -8.4 1 -14.6 1 15.4 1 9.6 1 -4.2 1 -5.4 1 4.7 1 5.3 1 -.1 1 -3.7 1 -4.1 1 4.4 1 4.2 1 -.9 1 -1.1 1 1.5 1 2.3 1 1.2 1 0 1 -.3 1 1 1 -.6 1 0 1 .3 1 -.4 1 .6 1 -.8 1 .5 1 .2 1 -.3 1 .4 1 -.3 1 -.3 1 -.2 1 .3 1 0 1 -.1 1 .2 1 .5 1 -.9 1 .7 1 -.1 1 .3 1 0 1 -.4 1 .2 1 -.4 1 .6 1 -.5 1 .4 1 0 1 -.2 1 -.4 1 .7 1 -.5 1 .4 1 0 1 -.2 1 -.5 1 .8 1 -.2 1 -.8 1 .8 1 -.2 1 .4 1 0 1 -.2 1 .2 1 -.7 1 .5 1 -.6 1 .7 1 .1 1 0 1 -.3 1 .3 1 0 1 -.7 1 .7 1 -.8 1 .5 1 0 1 .3 1 -.4 1 .3 1 .1 1 -.9 1 .1 1 .1 1 .7 1 -.5 1 .4 1 -.8 1 .4 1 .5 1 -.4 1 .3 1 0 1 -.5 1 .5 1 -.2 1 .2 1 -.7 1 .1 1 .7 1 0 1 -.6 1 -.2 1 .7 1 0 1 -.1 1 .1 1 -.6 1 .4 1 -.5 1 0 1 .8 1 -.4 1 -.4 1 0 1 -.1 1 .8 1 -.6 1 .7 1 -.6 1 -.1 1 .2 1 -.1 1 .6 1 0 1 -.1 1 .1 1 -.7 1 -.1 1 -11.6 1 -13.1 1 12.5 1 5 1 3.2 1 1.7 1 2.7 1 .4 1 -.3 1 .1 1 -.2 1 .3 1 -.8 1 .4 1 -.4 1 .4 1 0 1 -.4 1 .4 1 -.5 1 1 1 0 1 -.7 1 .2 1 .3 1 0 1 -.6 1 .6 1 0 1 -.7 1 .9 1 -.5 1 -.1 1 .6 1 0 1 -5.3 1 -4.5 1 4.1 1 -6.3 1 -6.1 1 5.7 1 5.3 1 -6.5 1 -5.8 1 5.8 1 7.3 1 -7 1 -7.2 1 7.6 1 6.6 1 -2.8 1 -4.6 1 4.4 1 5.1 1 -2 1 2.8" fill="none" stroke="#a3306e" stroke-width="1.0" stroke-linejoin="round"/><path d="M65 126.7l1.5 .1 1 0 1 .1 1 0 1 .2 1 .1 1 -.3 1 .2 1 .1 1 -.2 1 .4 1 -.3 1 .2 1 -.8 1 .3 2 0 1 -.3 1 .6 1 0 1 .3 1 -.6 1 .4 1 0 1 -.2 1 -.3 1 -.1 1 .6 1 -.7 1 .7 1 -.3 1 -.4 1 .3 1 .1 1 .3 1 -.4 1 .3 1 .1 1 -.2 1 -.4 1 .1 1 .5 1 -.3 1 .1 1 .3 1 -.4 1 .4 1 -.9 1 .6 1 -.4 1 -.1 1 0 1 .5 1 .3 1 -.5 1 .6 1 -1 1 .1 1 .2 1 0 1 .1 1 -.2 1 .6 1 -.5 1 -.3 1 .5 1 -.4 1 0 1 .7 1 -.2 1 -.2 1 -.4 1 .2 1 0 1 .4 1 .3 1 -.4 1 .3 1 -.2 1 -.5 1 -.1 1 .6 1 .3 1 -.4 1 .3 1 -.4 1 -.3 1 .4 1 .4 1 0 1 -.3 1 -.5 1 .6 1 -.1 1 .3 1 -.4 1 0 1 .3 1 -.4 1 .6 1 -.8 1 .5 1 -.6 1 .4 1 .3 1 -.7 1 .2 1 .5 1 -.8 1 .4 1 -.2 1 .6 1 -.3 1 0 1 .3 1 -.1 1 -.3 1 .3 1 0 1 .1 1 -.8 1 0 1 .8 1 -.4 1 -.3 1 .3 1 -.2 1 .1 1 0 1 -.3 1 .8 1 0 1 -.6 1 .7 1 -.7 1 .2 1 .2 1 0 1 -.1 1 .1 1 -.4 1 .3 1 .1 1 -.1 1 -.1 1 .6 1 -.9 1 .6 1 -.4 1 .3 1 -.2 1 .2 1 -.5 1 .5 1 -.5 1 .9 1 -.8 1 .4 1 -.1 1 .4 1 -.5 1 -.3 1 .4 1 0 1 .5 1 -.1 1 -.5 1 -.2 1 .7 1 -.3 1 .1 1 -.2 1 .1 1 -.2 1 0 1 .4 1 -.2 1 .4 1 -.3 1 -.7 1 1 1 -.1 1 -.5 1 .1 1 0 1 .5 1 -.4 1 .4 1 -.3 1 -.4 1 .3 1 .1 1 .2 1 -.4 1 .4 1 -.1 1 .1 1 -.8 1 .1 1 .1 1 .1 1 -.4 1 .3 1 .3 1 .3 1 .1 1 -.4 1 -.5 1 .8 1 -.1 1 0 1 .1 1 -.8 1 .1 1 .4 1 -.3 1 -.2 1 .5 1 -.3 1 .6 1 -.1 1 -.3 1 .3 1 -.4 1 .3 1 -.6 1 .4 1 -.1 1 .2 1 -.1 1 -.3 1 .3 1 .4 1 -.9 1 .5 1 -.5 1 .6 1 -.4 1 .5 1 -.1 1 -.2 1 -.2 1 .4 1 -.1 1 .3 1 .1 1 -.8 1 0 1 .7 1 -.2 1 .3 1 -.3 1 .1 1 -.5 1 .3 1 -.4 1 .8 1 -.6 1 .6 1 0 1 -.7 1 .7 1 -.8 1 .8 1 -.4 1 -.3 1 .5 1 -.1 1 .1 1 -.1 1 .2 1 .1 1 -.8 1 .5 1 -.1 1 .1 1 .2 1 .2 1 -.8 1 0 1 .7 1 -.2 2 0 1 .3 1 -.3 1 -.3 1 -.3 1 .3 1 .1 1 -.3 1 -.2 1 .2 1 -.1 1 0 1 .9 1 -.1 1 .1 1 -.7" fill="none" stroke="#3030e0" stroke-width="1.0" stroke-linejoin="round"/></g><path d="M62 122.5H367M62 116.5H367M62 111.5H367M62 105.5H367M62 94.5H367M62 88.5H367M62 83.5H367M62 77.5H367M62 66.5H367M62 60.5H367M62 55.5H367M62 49.5H367M62 38.5H367M62 32.5H367M68.5 26V130M80.5 26V130M93.5 26V130M105.5 26V130M118.5 26V130M143.5 26V130M155.5 26V130M168.5 26V130M180.5 26V130M193.5 26V130M218.5 26V130M230.5 26V130M243.5 26V130M255.5 26V130M268.5 26V130M293.5 26V130M305.5 26V130M318.5 26V130M330.5 26V130M343.5 26V130" stroke="rgba(143,143,143,0.38)" stroke-width="1" stroke-dasharray="1 1" fill="none" shape-rendering="crispEdges"/><path d="M62 128.5H367M62 100.5H367M62 72.5H367M62 43.5H367M130.5 26V132M205.5 26V132M280.5 26V132M355.5 26V132" stroke="rgba(222,79,79,0.47)" stroke-width="1" stroke-dasharray="1 1" fill="none" shape-rendering="crispEdges"/><path d="M64.6 26V131.4 M61.6 128.1H368" stroke="#4d4d4d" stroke-width="0.9" fill="none"/><path d="M64.6 21l-3.2 5.2h6.4z M372.4 128.1l-5.2 -3.2v6.4z" fill="#801f1f"/><text x="215.8" y="15.4" text-anchor="middle">Null - TCP Protocol Statistics</text><text x="46.3" y="131.9" text-anchor="end">0.0</text><text x="58.3" y="103.8" text-anchor="end">0.5 k</text><text x="58.3" y="75.7" text-anchor="end">1.0 k</text><text x="58.3" y="47.6" text-anchor="end">1.5 k</text><text x="131.5" y="140.2" text-anchor="middle">Dom 00:00</text><text x="281.5" y="140.2" text-anchor="middle">Dom 12:00</text><text transform="translate(13.9 78) rotate(-90)" text-anchor="middle">per 5 minutes</text><text class="wm" transform="translate(369.3 6.3) rotate(90)">RRDTOOL / TOBI OETIKER</text></svg>
<svg class="ic" style="left:830px;top:902px" width="17" height="17" viewBox="0 0 17 17"><path d="M10 9.8L14.4 14.2" stroke="#6e4410" stroke-width="3.4" stroke-linecap="round"/><path d="M10.2 10L14.3 14.1" stroke="#f2b03c" stroke-width="1.9" stroke-linecap="round"/><path d="M8.6 8.4l1.6 1.6" stroke="#6a6a8a" stroke-width="1.6"/><circle cx="5.5" cy="5.2" r="4.9" fill="#a8e2f8" stroke="#5f86c4" stroke-width="1"/><circle cx="4.4" cy="4.2" r="2.9" fill="#e6fbff" opacity=".8"/></svg>
<svg class="ic" style="left:830px;top:923px" width="17" height="17" viewBox="0 0 17 17"><circle cx="7" cy="7.8" r="6.5" fill="#3a6cf2" stroke="#141ea0" stroke-width="1.1"/><path d="M1.4 8.6a5.6 5.6 0 0 0 11.2 0c-3 2-8 2-11.2 0z" fill="#7ab2ff" opacity=".9"/><path d="M2.2 5.6a5 5 0 0 1 9.6 0c-3-1.4-6.6-1.4-9.6 0z" fill="#2448d0" opacity=".6"/><path d="M7 3.8v5.8M4.2 7.4l2.8 3 2.8-3" stroke="#fff" stroke-width="2" fill="none" stroke-linejoin="round" stroke-linecap="round"/></svg>
<svg class="ic" style="left:830px;top:944px" width="17" height="17" viewBox="0 0 17 17"><path d="M9.4 9L13.3 12.9" stroke="#b45a00" stroke-width="5" stroke-linecap="round"/><path d="M9.2 8.8L13.2 12.8" stroke="#ff9a0c" stroke-width="3.6" stroke-linecap="round"/><path d="M9.6 9.8L12 12.2" stroke="#ffd040" stroke-width="1.3" stroke-linecap="round"/><path d="M4.45 2.37A2.55 2.55 0 1 1 2.27 4.55" stroke="#8288aa" stroke-width="5.1" fill="none"/><path d="M4.45 2.37A2.55 2.55 0 1 1 2.27 4.55" stroke="#e9eaf1" stroke-width="3.5" fill="none"/><path d="M6.6 2.4A3.6 3.6 0 0 1 7.6 7.4" stroke="#fff" stroke-width="1.2" fill="none" opacity=".8"/></svg>
<svg class="ic" style="left:830px;top:966px" width="17" height="17" viewBox="0 0 17 17"><circle cx="7" cy="7.8" r="6.5" fill="#d2646c" stroke="#7a2226" stroke-width="1.1"/><path d="M1.4 7a5.6 5.6 0 0 1 11.2 0c-3-2-8-2-11.2 0z" fill="#ecb0b4" opacity=".75"/><path d="M7 12v-6.4M4.2 8.2l2.8-3 2.8 3" stroke="#fff" stroke-width="1.9" fill="none" stroke-linejoin="round" stroke-linecap="round"/></svg>
<svg class="g" style="left:868px;top:896px" width="380" height="160" viewBox="0 0 380 160"><rect width="380" height="160" fill="#f3f3f3"/><path d="M0 0H380L378 2H2V158L0 160Z" fill="#cfcfcf"/><path d="M380 160H0L2 158H378V2L380 0Z" fill="#9e9e9e"/><rect x="65" y="28" width="300" height="100" fill="#fff"/><clipPath id="c22"><rect x="65" y="28" width="300" height="100"/></clipPath><clipPath id="c22o"><rect x="65" y="26" width="300" height="103"/></clipPath><g clip-path="url(#c22)"><path d="M65 128.2l1.5 0 1 -7 1 -14 1 14 1 -11 1 12 1 4 1 -2 1 2 1 -4.5 1 -6.5 1 6.5 1 6.5 4 0 1 -17.3 1 -34.7 1 34.7 1 17.3 7 0 1 -10.3 1 -20.7 1 20.7 1 2.3 1 4 1 -3 1 4.7 1 -3.7 1 4 1 2 3 0 1 -2.5 1 -2.5 1 2.5 1 -5.8 1 -16.7 1 16 1 -18 1 18 1 -14 1 -23 1 23 1 -5 1 18.7 1 -2.7 1 6 1 3 1 -3 1 3 1 3 1 -5.3 1 -10.7 1 10.7 1 -3.4 1 -17.3 1 17.3 1 -9.3 1 12 1 6 9 0 1 -20 1 -40 1 40 1 14 1 3 1 3 2 0 1 -1.5 1 -1.5 1 1.5 1 1.5 4 0 1 -13.5 1 -13.5 1 13.5 1 -10.5 1 16 1 4 1 -4 1 3.3 1 -9.3 1 9.3 1 4.7 4 0 1 -22 1 -44 1 44 1 16 1 1.3 1 -9.3 1 9.3 1 -32.8 1 -62.5 1 62.5 1 29.5 1 4 1 4 1 -1.5 1 -1.5 1 1.5 1 1.5 109 0 1 -.5 1 -.5 1 .5 1 .5 4 0 1 -1.8 1 -1.7 1 1.7 1 1.8 33 0 1 -8.7 1 -17.3 1 17.3 1 -9.3 1 -30 1 30 1 6 1 6 1 -10 1 7.8 1 -13.8 1 13.8 1 .2 1 4 1 3 1 -1 1 1 1 -.5 1 -1.5V128.2H65Z" fill="#fbd0d0"/><path d="M65 128.2l1.5 0 1 -7 1 -14 1 14 1 -11 1 12 1 4 1 -2 1 2 1 -4.5 1 -6.5 1 6.5 1 6.5 4 0 1 -17.3 1 -34.7 1 34.7 1 17.3 7 0 1 -10.3 1 -20.7 1 20.7 1 2.3 1 4 1 -3 1 4.7 1 -3.7 1 4 1 2 3 0 1 -2.5 1 -2.5 1 2.5 1 -5.8 1 -16.7 1 16 1 -18 1 18 1 -14 1 -23 1 23 1 -5 1 18.7 1 -2.7 1 6 1 3 1 -3 1 3 1 3 1 -5.3 1 -10.7 1 10.7 1 -3.4 1 -17.3 1 17.3 1 -9.3 1 12 1 6 9 0 1 -20 1 -40 1 40 1 14 1 3 1 3 2 0 1 -1.5 1 -1.5 1 1.5 1 1.5 4 0 1 -13.5 1 -13.5 1 13.5 1 -10.5 1 16 1 4 1 -4 1 3.3 1 -9.3 1 9.3 1 4.7 4 0 1 -22 1 -44 1 44 1 16 1 1.3 1 -9.3 1 9.3 1 -32.8 1 -62.5 1 62.5 1 29.5 1 4 1 4 1 -1.5 1 -1.5 1 1.5 1 1.5 109 0 1 -.5 1 -.5 1 .5 1 .5 4 0 1 -1.8 1 -1.7 1 1.7 1 1.8 33 0 1 -8.7 1 -17.3 1 17.3 1 -9.3 1 -30 1 30 1 6 1 6 1 -10 1 7.8 1 -13.8 1 13.8 1 .2 1 4 1 3 1 -1 1 1 1 -.5 1 -1.5" fill="none" stroke="#e01010" stroke-width="1.0" stroke-linejoin="round"/><path d="M65 127.6l1.5 0 1 -.9 1 -1.5 1 1.5 1 .9 4 0 1 -.9 1 -1.5 1 1.5 1 .9 4 0 1 -1.1 1 -3.3 1 3.3 1 1.1 7 0 1 -1.4 1 -2 1 2 1 1.4 11 0 1 -.2 1 -.7 1 -.7 1 -.8 1 .8 1 .7 1 0 1 -.7 1 -.8 1 .8 1 .7 1 .7 1 .2 3 0 1 -.4 1 -1 1 -1 1 1 1 0 1 -1 1 1 1 1 1 .4 10 0 1 -1.9 1 -2.5 1 2.5 1 1.9 11 0 1 -.7 1 -1.4 1 -1.3 1 1.3 1 1.4 1 .7 10 0 1 -1.4 1 -2 1 2 1 1.4 3 0 1 -1.9 1 -2.5 1 2.5 1 1.9 5 0 1 .6 153 0 1 -.6 2 0 1 -1.4 1 -2 1 2 1 1.4 2 0 1 -1.2 1 -1.7 1 1.7 1 1.2 7 0" fill="none" stroke="#2020c0" stroke-width="1.0" stroke-linejoin="round"/></g><path d="M62 119.5H367M62 103.5H367M62 86.5H367M62 70.5H367M62 53.5H367M62 36.5H367M68.5 26V130M80.5 26V130M93.5 26V130M105.5 26V130M118.5 26V130M143.5 26V130M155.5 26V130M168.5 26V130M180.5 26V130M193.5 26V130M218.5 26V130M230.5 26V130M243.5 26V130M255.5 26V130M268.5 26V130M293.5 26V130M305.5 26V130M318.5 26V130M330.5 26V130M343.5 26V130" stroke="rgba(143,143,143,0.38)" stroke-width="1" stroke-dasharray="1 1" fill="none" shape-rendering="crispEdges"/><path d="M62 128.5H367M62 111.5H367M62 95.5H367M62 78.5H367M62 61.5H367M62 45.5H367M130.5 26V132M205.5 26V132M280.5 26V132M355.5 26V132" stroke="rgba(222,79,79,0.47)" stroke-width="1" stroke-dasharray="1 1" fill="none" shape-rendering="crispEdges"/><path d="M64.6 26V131.4 M61.6 128.1H368" stroke="#4d4d4d" stroke-width="0.9" fill="none"/><path d="M64.6 21l-3.2 5.2h6.4z M372.4 128.1l-5.2 -3.2v6.4z" fill="#801f1f"/><text x="215.8" y="15.4" text-anchor="middle">Null - Traffic - eth0</text><text x="46.3" y="131.9" text-anchor="end">0.0</text><text x="58.3" y="115.3" text-anchor="end">0.2 M</text><text x="58.3" y="98.7" text-anchor="end">0.4 M</text><text x="58.3" y="82.1" text-anchor="end">0.6 M</text><text x="58.3" y="65.5" text-anchor="end">0.8 M</text><text x="58.3" y="48.9" text-anchor="end">1.0 M</text><text x="131.5" y="140.2" text-anchor="middle">Dom 00:00</text><text x="281.5" y="140.2" text-anchor="middle">Dom 12:00</text><text transform="translate(13.9 78) rotate(-90)" text-anchor="middle">bits per second</text><text class="wm" transform="translate(369.3 6.3) rotate(90)">RRDTOOL / TOBI OETIKER</text></svg>
<svg class="ic" style="left:1256px;top:902px" width="17" height="17" viewBox="0 0 17 17"><path d="M10 9.8L14.4 14.2" stroke="#6e4410" stroke-width="3.4" stroke-linecap="round"/><path d="M10.2 10L14.3 14.1" stroke="#f2b03c" stroke-width="1.9" stroke-linecap="round"/><path d="M8.6 8.4l1.6 1.6" stroke="#6a6a8a" stroke-width="1.6"/><circle cx="5.5" cy="5.2" r="4.9" fill="#a8e2f8" stroke="#5f86c4" stroke-width="1"/><circle cx="4.4" cy="4.2" r="2.9" fill="#e6fbff" opacity=".8"/></svg>
<svg class="ic" style="left:1256px;top:923px" width="17" height="17" viewBox="0 0 17 17"><circle cx="7" cy="7.8" r="6.5" fill="#3a6cf2" stroke="#141ea0" stroke-width="1.1"/><path d="M1.4 8.6a5.6 5.6 0 0 0 11.2 0c-3 2-8 2-11.2 0z" fill="#7ab2ff" opacity=".9"/><path d="M2.2 5.6a5 5 0 0 1 9.6 0c-3-1.4-6.6-1.4-9.6 0z" fill="#2448d0" opacity=".6"/><path d="M7 3.8v5.8M4.2 7.4l2.8 3 2.8-3" stroke="#fff" stroke-width="2" fill="none" stroke-linejoin="round" stroke-linecap="round"/></svg>
<svg class="ic" style="left:1256px;top:944px" width="17" height="17" viewBox="0 0 17 17"><path d="M9.4 9L13.3 12.9" stroke="#b45a00" stroke-width="5" stroke-linecap="round"/><path d="M9.2 8.8L13.2 12.8" stroke="#ff9a0c" stroke-width="3.6" stroke-linecap="round"/><path d="M9.6 9.8L12 12.2" stroke="#ffd040" stroke-width="1.3" stroke-linecap="round"/><path d="M4.45 2.37A2.55 2.55 0 1 1 2.27 4.55" stroke="#8288aa" stroke-width="5.1" fill="none"/><path d="M4.45 2.37A2.55 2.55 0 1 1 2.27 4.55" stroke="#e9eaf1" stroke-width="3.5" fill="none"/><path d="M6.6 2.4A3.6 3.6 0 0 1 7.6 7.4" stroke="#fff" stroke-width="1.2" fill="none" opacity=".8"/></svg>
<svg class="ic" style="left:1256px;top:966px" width="17" height="17" viewBox="0 0 17 17"><circle cx="7" cy="7.8" r="6.5" fill="#d2646c" stroke="#7a2226" stroke-width="1.1"/><path d="M1.4 7a5.6 5.6 0 0 1 11.2 0c-3-2-8-2-11.2 0z" fill="#ecb0b4" opacity=".75"/><path d="M7 12v-6.4M4.2 8.2l2.8-3 2.8 3" stroke="#fff" stroke-width="1.9" fill="none" stroke-linejoin="round" stroke-linecap="round"/></svg>
<svg class="g" style="left:1294px;top:896px" width="380" height="160" viewBox="0 0 380 160"><rect width="380" height="160" fill="#f3f3f3"/><path d="M0 0H380L378 2H2V158L0 160Z" fill="#cfcfcf"/><path d="M380 160H0L2 158H378V2L380 0Z" fill="#9e9e9e"/><rect x="65" y="28" width="300" height="100" fill="#fff"/><clipPath id="c23"><rect x="65" y="28" width="300" height="100"/></clipPath><clipPath id="c23o"><rect x="65" y="26" width="300" height="103"/></clipPath><g clip-path="url(#c23)"><path d="M65 128.2l11.5 0 1 -2 1 2 4 0 1 -2 1 2 12 0 1 -4 1 4 8 0 1 -.7 1 -1.3 1 1 1 -2 1 2 1 -2 1 2 1 1 2 0 1 -1 1 -2 1 2 1 -2 1 2 1 1 9 0 1 -4 1 4 55 0 1 -22 1 22 112 0 1 -8 1 8 1 0 1 -3 1 3 1 0 1 -4 1 4 3 0 1 -92 1 86 1 3 1 0 1 -3 1 3 1 -1 1 -8 1 7.3 1 -23.3 1 23.3 1 -9.3 1 11 1 -15 1 14.7 1 -16.7 1 10 1 6.7 1 1 1 -11.7 1 9.8 1 -20.8 1 20.8 1 -5.8 1 6.7 1 -10.7 1 10.7 1 -16.7 1 16.7 1 -8.7 1 9.3 1 -13.3 1 8 1 6.7 1 1.3 1 -2 1 2 7 0 1 -2 1 2 5 0V128.2H65Z" fill="#c4fd3d"/></g><path d="M62 122.5H367M62 117.5H367M62 111.5H367M62 105.5H367M62 94.5H367M62 89.5H367M62 83.5H367M62 77.5H367M62 66.5H367M62 61.5H367M62 55.5H367M62 49.5H367M62 38.5H367M62 33.5H367M62 27.5H367M68.5 26V130M80.5 26V130M93.5 26V130M105.5 26V130M118.5 26V130M143.5 26V130M155.5 26V130M168.5 26V130M180.5 26V130M193.5 26V130M218.5 26V130M230.5 26V130M243.5 26V130M255.5 26V130M268.5 26V130M293.5 26V130M305.5 26V130M318.5 26V130M330.5 26V130M343.5 26V130" stroke="rgba(143,143,143,0.38)" stroke-width="1" stroke-dasharray="1 1" fill="none" shape-rendering="crispEdges"/><path d="M62 128.5H367M62 100.5H367M62 72.5H367M62 44.5H367M130.5 26V132M205.5 26V132M280.5 26V132M355.5 26V132" stroke="rgba(222,79,79,0.47)" stroke-width="1" stroke-dasharray="1 1" fill="none" shape-rendering="crispEdges"/><path d="M64.6 26V131.4 M61.6 128.1H368" stroke="#4d4d4d" stroke-width="0.9" fill="none"/><path d="M64.6 21l-3.2 5.2h6.4z M372.4 128.1l-5.2 -3.2v6.4z" fill="#801f1f"/><text x="215.8" y="15.4" text-anchor="middle">Null - UDP Protocol Statistics</text><text x="58.3" y="131.9" text-anchor="end">0</text><text x="58.3" y="103.9" text-anchor="end">10</text><text x="58.3" y="75.9" text-anchor="end">20</text><text x="58.3" y="47.9" text-anchor="end">30</text><text x="131.5" y="140.2" text-anchor="middle">Dom 00:00</text><text x="281.5" y="140.2" text-anchor="middle">Dom 12:00</text><text transform="translate(13.9 78) rotate(-90)" text-anchor="middle">per 5 minutes</text><text class="wm" transform="translate(369.3 6.3) rotate(90)">RRDTOOL / TOBI OETIKER</text></svg>
<svg class="ic" style="left:1682px;top:902px" width="17" height="17" viewBox="0 0 17 17"><path d="M10 9.8L14.4 14.2" stroke="#6e4410" stroke-width="3.4" stroke-linecap="round"/><path d="M10.2 10L14.3 14.1" stroke="#f2b03c" stroke-width="1.9" stroke-linecap="round"/><path d="M8.6 8.4l1.6 1.6" stroke="#6a6a8a" stroke-width="1.6"/><circle cx="5.5" cy="5.2" r="4.9" fill="#a8e2f8" stroke="#5f86c4" stroke-width="1"/><circle cx="4.4" cy="4.2" r="2.9" fill="#e6fbff" opacity=".8"/></svg>
<svg class="ic" style="left:1682px;top:923px" width="17" height="17" viewBox="0 0 17 17"><circle cx="7" cy="7.8" r="6.5" fill="#3a6cf2" stroke="#141ea0" stroke-width="1.1"/><path d="M1.4 8.6a5.6 5.6 0 0 0 11.2 0c-3 2-8 2-11.2 0z" fill="#7ab2ff" opacity=".9"/><path d="M2.2 5.6a5 5 0 0 1 9.6 0c-3-1.4-6.6-1.4-9.6 0z" fill="#2448d0" opacity=".6"/><path d="M7 3.8v5.8M4.2 7.4l2.8 3 2.8-3" stroke="#fff" stroke-width="2" fill="none" stroke-linejoin="round" stroke-linecap="round"/></svg>
<svg class="ic" style="left:1682px;top:944px" width="17" height="17" viewBox="0 0 17 17"><path d="M9.4 9L13.3 12.9" stroke="#b45a00" stroke-width="5" stroke-linecap="round"/><path d="M9.2 8.8L13.2 12.8" stroke="#ff9a0c" stroke-width="3.6" stroke-linecap="round"/><path d="M9.6 9.8L12 12.2" stroke="#ffd040" stroke-width="1.3" stroke-linecap="round"/><path d="M4.45 2.37A2.55 2.55 0 1 1 2.27 4.55" stroke="#8288aa" stroke-width="5.1" fill="none"/><path d="M4.45 2.37A2.55 2.55 0 1 1 2.27 4.55" stroke="#e9eaf1" stroke-width="3.5" fill="none"/><path d="M6.6 2.4A3.6 3.6 0 0 1 7.6 7.4" stroke="#fff" stroke-width="1.2" fill="none" opacity=".8"/></svg>
<svg class="ic" style="left:1682px;top:966px" width="17" height="17" viewBox="0 0 17 17"><circle cx="7" cy="7.8" r="6.5" fill="#d2646c" stroke="#7a2226" stroke-width="1.1"/><path d="M1.4 7a5.6 5.6 0 0 1 11.2 0c-3-2-8-2-11.2 0z" fill="#ecb0b4" opacity=".75"/><path d="M7 12v-6.4M4.2 8.2l2.8-3 2.8 3" stroke="#fff" stroke-width="1.9" fill="none" stroke-linejoin="round" stroke-linecap="round"/></svg>
<div id="status"><span style="left:2px">http://localhost/cacti/graph_view.php?action=preview&amp;host_id=0&amp;rows=5000&amp;graph_template_id=0&amp;filter= [+]</span><span style="right:2px">[1/2] 80%</span></div>
<div id="side"></div><svg style="left:1760px;top:16px" width="130" height="130" viewBox="0 0 1080 1080"><defs><radialGradient id="tf" cx="45%" cy="40%" r="65%"><stop offset="0" stop-color="#ffd02a"/><stop offset="0.7" stop-color="#f9bd0c"/><stop offset="1" stop-color="#c98a00"/></radialGradient><radialGradient id="tb" cx="45%" cy="45%" r="60%"><stop offset="0.75" stop-color="#fff"/><stop offset="1" stop-color="#c8c8c8"/></radialGradient></defs><ellipse cx="520" cy="975" rx="400" ry="45" fill="#262626" opacity=".7"/><path d="M530 65C440 65 395 130 400 210C402 260 405 300 410 340C400 400 330 480 290 570C260 630 250 680 260 720L330 760L420 880L440 935L640 935L660 880L700 760L830 700C850 640 800 520 740 440C700 380 680 300 672 220C665 120 610 65 530 65Z" fill="#000"/><path d="M428 375C388 450 318 560 318 660C318 780 400 882 520 888C620 888 692 800 702 700C707 600 662 480 612 380C560 412 470 412 428 375Z" fill="url(#tb)"/><path d="M458 478q17 20 38 0" stroke="#aaa" stroke-width="8" fill="none"/><path d="M572 482q70 -8 100 70" stroke="#bdbdbd" stroke-width="16" fill="none"/><path d="M455 605q-12 60 0 115" stroke="#8a8a8a" stroke-width="9" fill="none"/><path d="M700 520q50 80 40 170" stroke="#333" stroke-width="10" fill="none"/><ellipse cx="440" cy="232" rx="43" ry="62" fill="#fff"/><ellipse cx="562" cy="232" rx="46" ry="66" fill="#fff"/><ellipse cx="414" cy="232" rx="11" ry="17" fill="#000"/><ellipse cx="535" cy="232" rx="11" ry="17" fill="#000"/><path d="M415 312C440 292 480 272 500 258C530 268 580 290 606 306C612 342 560 380 500 390C450 386 420 352 415 312Z" fill="url(#tf)"/><path d="M432 345q70 32 165 -28" stroke="#a87000" stroke-width="7" fill="none"/><path d="M585 100l35 32 -50 6z" fill="#9a9a9a"/><ellipse cx="655" cy="352" rx="16" ry="24" fill="#8a8a8a" transform="rotate(-30 655 352)"/><path d="M270 685C300 680 340 740 380 800C420 860 450 900 430 950C410 990 360 980 300 955C240 935 150 920 135 890C130 860 160 840 150 800C145 770 200 760 220 740C240 710 250 690 270 685Z" fill="url(#tf)"/><path d="M665 700C700 700 720 745 760 748C800 740 820 710 845 720C860 760 900 810 915 840C900 880 820 920 760 960C720 985 660 980 650 930C640 880 660 820 655 770C655 730 655 705 665 700Z" fill="url(#tf)"/><ellipse cx="762" cy="722" rx="54" ry="42" fill="#000"/><path d="M340 715q45 55 90 95q-8 22 -28 14z" fill="#000"/></svg><div class="sl" style="top:143.9px;left:1750.3px"><span class="v" style="left:0px">Linux 3.2.1-gentoo-r2 x86_64</span></div><div class="sl" style="top:153.8px;left:1749px"><span style="left:0px">Host</span><span class="v" style="left:25px">null</span><span style="left:50px">Uptime</span><span class="v" style="left:85px">25d 22h 31m</span></div><div class="sh" style="left:1813.8px;top:174.2px">CPU</div><div class="sl" style="top:197.7px"><span style="left:0px">Cpu0</span><span class="v" style="left:45px">100%</span></div><div class="sl" style="top:207.7px"><span class="v" style="left:0px">3.30GHz 55C</span></div><div class="cpb" style="top:198.5px"></div><div class="sl" style="top:227.7px"><span style="left:0px">Cpu1</span><span class="v" style="left:45px">100%</span></div><div class="sl" style="top:237.7px"><span class="v" style="left:0px">3.30GHz 58C</span></div><div class="cpb" style="top:228.5px"></div><div class="sl" style="top:257.7px"><span style="left:0px">Cpu2</span><span class="v" style="left:45px">100%</span></div><div class="sl" style="top:267.7px"><span class="v" style="left:0px">3.30GHz 59C</span></div><div class="cpb" style="top:258.5px"></div><div class="sl" style="top:287.7px"><span style="left:0px">Cpu3</span><span class="v" style="left:45px">100%</span></div><div class="sl" style="top:297.7px"><span class="v" style="left:0px">3.30GHz 53C</span></div><div class="cpb" style="top:288.5px"></div><div class="sl" style="top:317.6px"><span style="left:0px">Load</span><span class="v" style="left:25px">4.39 4.30 4.32</span><span class="v" style="left:155px">5 / 130</span></div><div class="bar" style="top:330px"><div style="width:189px"></div></div><div class="sl" style="top:337.75px"><span style="left:0px">proc</span><span style="left:90px">cpu%</span><span style="left:170px">time</span></div><div class="sl" style="top:347.75px"><span class="v" style="left:0px">primegrid_cllr_</span><span class="v" style="left:85px">24.94</span><span class="v" style="left:145px">891:07.37</span></div><div class="sl" style="top:357.75px"><span class="v" style="left:0px">primegrid_cllr_</span><span class="v" style="left:85px">24.94</span><span class="v" style="left:155px">2497:05</span></div><div class="sl" style="top:367.75px"><span class="v" style="left:0px">primegrid_gcwsi</span><span class="v" style="left:85px">24.69</span><span class="v" style="left:145px">524:13.57</span></div><div class="sh" style="left:1803.8px;top:388.4px">Memory</div><div class="sl" style="top:411.6px"><span style="left:0px">Buffers</span><span class="v" style="left:45px">262M</span><span style="left:130px">Cached</span><span class="v" style="left:165px">5.62G</span></div><div class="sl" style="top:421.6px"><span style="left:0px">Used</span><span class="v" style="left:85px">18%</span><span class="v" style="left:125px">1.42G / 7.64G</span></div><div class="bar" style="top:434.2px"><div style="width:34.02px"></div></div><div class="sl" style="top:442px"><span style="left:0px">Swap</span><span class="v" style="left:90px">0%</span><span class="v" style="left:130px">212K / 8.00G</span></div><div class="bar" style="top:454.2px"><div style="width:0px"></div></div><div class="sl" style="top:462px"><span style="left:0px">proc</span><span style="left:90px">mem%</span><span style="left:175px">res</span></div><div class="sl" style="top:472px"><span class="v" style="left:0px">luakit</span><span class="v" style="left:90px">3.84</span><span class="v" style="left:170px">293M</span></div><div class="sl" style="top:482px"><span class="v" style="left:0px">X</span><span class="v" style="left:90px">1.99</span><span class="v" style="left:170px">152M</span></div><div class="sl" style="top:492px"><span class="v" style="left:0px">primegrid_cllr_</span><span class="v" style="left:90px">1.09</span><span class="v" style="left:165px">83.7M</span></div><div class="sh" style="left:1800.8px;top:512.15px">Storage</div><div class="sl" style="top:535.75px"><span style="left:0px">Root</span><span class="v" style="left:85px">31%</span><span class="v" style="left:125px">12.5G / 39.9G</span></div><div class="bar" style="top:548.15px"><div style="width:57.64px"></div></div><div class="sl" style="top:555.75px"><span style="left:0px">Var</span><span class="v" style="left:90px">5%</span><span class="v" style="left:125px">1.19G / 19.9G</span></div><div class="bar" style="top:568.15px"><div style="width:10.96px"></div></div><div class="sl" style="top:575.75px"><span style="left:0px">Home</span><span class="v" style="left:85px">66%</span><span class="v" style="left:130px">134G /  200G</span></div><div class="bar" style="top:588.15px"><div style="width:125.69px"></div></div><div class="sl" style="top:595.75px"><span style="left:0px">Portage</span><span class="v" style="left:85px">20%</span><span class="v" style="left:130px">423M / 1.99G</span></div><div class="bar" style="top:608.15px"><div style="width:37.8px"></div></div><div class="sl" style="top:615.75px"><span style="left:0px">proc</span><span style="left:85px">read</span><span style="left:165px">write</span></div><div class="sl" style="top:625.75px"><span class="v" style="left:0px">xeyes</span><span class="v" style="left:95px">0B</span><span class="v" style="left:180px">0B</span></div><div class="sl" style="top:635.75px"><span class="v" style="left:0px">xcompmgr</span><span class="v" style="left:95px">0B</span><span class="v" style="left:180px">0B</span></div><div class="sl" style="top:645.75px"><span class="v" style="left:0px">zsh</span><span class="v" style="left:95px">0B</span><span class="v" style="left:180px">0B</span></div><div class="sl" style="top:665.75px;left:1788px"><span style="left:0px">/dev/sda</span><span class="v" style="left:50px">27C</span></div><div class="sl" style="top:675.75px"><span style="left:0px">Read</span><span class="v" style="left:40px">0B</span><span style="left:100px">Write</span><span class="v" style="left:145px">0B</span></div><div class="mg" style="left:1725px;top:689.45px;height:20px"></div><div class="mg" style="left:1825px;top:689.45px;height:20px"></div><svg style="left:1825px;top:689.45px" width="91" height="20"><path d="M11.5 19v-2M15.5 19v-1M19.5 19v-1M23.5 19v-2M27.5 19v-1M31.5 19v-1M35.5 19v-2M39.5 19v-1M43.5 19v-1M47.5 19v-2M51.5 19v-1M55.5 19v-1M59.5 19v-2M63.5 19v-1M42.5 19v-3M43.5 19v-2M66.5 19v-3M68.5 19v-5M70.5 19v-6M72.5 19v-4M74.5 19v-2M80.5 19v-18M81.5 19v-14M88.5 19v-2" stroke="#e8e8e8" stroke-width="1" fill="none"/></svg><div class="sl" style="top:715.75px;left:1788px"><span style="left:0px">/dev/sdb</span><span class="v" style="left:50px">26C</span></div><div class="sl" style="top:725.75px"><span style="left:0px">Read</span><span class="v" style="left:40px">0B</span><span style="left:100px">Write</span><span class="v" style="left:145px">0B</span></div><div class="mg" style="left:1725px;top:739.45px;height:20px"></div><div class="mg" style="left:1825px;top:739.45px;height:20px"></div><svg style="left:1825px;top:739.45px" width="91" height="20"><path d="M11.5 19v-2M15.5 19v-1M19.5 19v-1M23.5 19v-2M27.5 19v-1M31.5 19v-1M35.5 19v-2M39.5 19v-1M43.5 19v-1M47.5 19v-2M51.5 19v-1M55.5 19v-1M59.5 19v-2M63.5 19v-1M42.5 19v-3M43.5 19v-2M66.5 19v-3M68.5 19v-5M70.5 19v-6M72.5 19v-4M74.5 19v-2M80.5 19v-18M81.5 19v-14M88.5 19v-2" stroke="#e8e8e8" stroke-width="1" fill="none"/></svg><div class="sh" style="left:1804px;top:776.4px">Network</div><div class="sl" style="top:800px"><span style="left:0px">Connections</span><span class="v" style="left:60px">14</span></div><div class="sl" style="top:820px;left:1750.5px"><span style="left:0px">eth0</span><span class="v" style="left:25px">192.168.1.23, 10.0.0.23</span></div><div class="sl" style="top:830px"><span style="left:0px">Up</span><span class="v" style="left:30px">0B</span><span style="left:100px">Down</span><span class="v" style="left:135px">29B</span></div><div class="mg" style="left:1725px;top:843.5px;height:19.5px"></div><svg style="left:1725px;top:843.5px" width="91" height="19.5"><path d="M15.5 18.5v-1M27.5 18.5v-2M29.5 18.5v-1M45.5 18.5v-2M47.5 18.5v-2M50.5 18.5v-1M54.5 18.5v-2M60.5 18.5v-2M63.5 18.5v-3M66.5 18.5v-1M72.5 18.5v-8M73.5 18.5v-7M75.5 18.5v-1" stroke="#e8e8e8" stroke-width="1" fill="none"/></svg><div class="mg" style="left:1825px;top:843.5px;height:19.5px"></div><svg style="left:1825px;top:843.5px" width="91" height="19.5"><path d="M3.5 18.5v-1M5.5 18.5v-1M7.5 18.5v-1M9.5 18.5v-1M11.5 18.5v-1M13.5 18.5v-1M15.5 18.5v-1M17.5 18.5v-1M19.5 18.5v-1M21.5 18.5v-1M23.5 18.5v-1M25.5 18.5v-1M27.5 18.5v-1M29.5 18.5v-1M31.5 18.5v-1M33.5 18.5v-1M35.5 18.5v-1M37.5 18.5v-1M39.5 18.5v-1M41.5 18.5v-1M43.5 18.5v-1M45.5 18.5v-1M47.5 18.5v-1M49.5 18.5v-1M51.5 18.5v-1M53.5 18.5v-1M55.5 18.5v-1M57.5 18.5v-1M59.5 18.5v-1M61.5 18.5v-1M63.5 18.5v-1M65.5 18.5v-1M67.5 18.5v-1M69.5 18.5v-1M52.5 18.5v-2M56.5 18.5v-2M60.5 18.5v-2M66.5 18.5v-3M72.5 18.5v-6M73.5 18.5v-5M74.5 18.5v-1.6M75.5 18.5v-1.6M76.5 18.5v-1.6M77.5 18.5v-1.6M78.5 18.5v-1.6M79.5 18.5v-1.6M80.5 18.5v-1.6M81.5 18.5v-1.6M82.5 18.5v-1.6M83.5 18.5v-1.6M84.5 18.5v-1.6M85.5 18.5v-1.6M86.5 18.5v-1.6M87.5 18.5v-1.6M88.5 18.5v-1.6M89.5 18.5v-1.6" stroke="#e8e8e8" stroke-width="1" fill="none"/></svg><div class="sh" style="left:1804px;top:880.4px">Portage</div><div class="sl" style="top:903.8px;left:1763.5px"><span style="left:0px">Last sync</span><span class="v" style="left:65px">0 days ago</span></div><div class="sl" style="top:914px;left:1763.5px"><span style="left:0px">Last update</span><span class="v" style="left:65px">0 days ago</span></div><div class="sh" style="left:1814px;top:934.4px">MPD</div><div class="sl" style="top:958px;left:1788.7px"><span class="v" style="left:0px">Eternal Glory</span></div><div class="bar" style="top:969.8px"><div style="width:10.39px"></div></div>
<div id="term"><span style="top:1.6px"><b style="color:#ff1010">null</b> <span class="i" style="color:#1a34c8">~</span> <b style="color:#18e018">:)</b> <span class="i" style="color:#20d820">gentoo-info</span></span><span class="tm" style="top:13.6px">                                           .</span><span class="tm" style="top:25.6px">     .vir.                                d$b</span><span class="tm" style="top:37.6px">  .d$$$$$$b.    .cd$$b.     .d$$b.   d$$$$$$$$$$$b  .d$$b.      .d$$b.</span><span class="tm" style="top:49.6px">  $$$$( )$$$b d$$$()$$$.   d$$$$$$$b Q$$$$$$$P$$$P.$$$$$$$b.  .$$$$$$$b.</span><span class="tm" style="top:61.6px">  Q$$$$$$$$$$B$$$$$$$$P"  d$$$PQ$$$$b.   $$$$.   .$$$P' `$$$ .$$$P' `$$$</span><span class="tm" style="top:73.6px">    "$$$$$$$P Q$$$$$$$b  d$$$P   Q$$$$b  $$$$b   $$$$b..d$$$ $$$$b..d$$$</span><span class="tm" style="top:85.6px">   d$$$$$$P"   "$$$$$$$$ Q$$$     Q$$$$  $$$$$   `Q$$$$$$$P  `Q$$$$$$$P</span><span class="tm" style="top:97.6px">  $$$$$$$P       `"""""   ""        ""   Q$$$P     "Q$$$P"     "Q$$$P"</span><span class="tm" style="top:109.6px">  `Q$$P"                                  """</span><span style="top:145.6px">        <span class="i ty">Distro</span>                  <span class="i tw">Gentoo Linux (Gentoo Base System release 2.0.3)</span></span><span style="top:157.6px">        <span class="i ty">Kernel</span>                  <span class="i tw">3.2.1-gentoo-r2 #1 SMP Sat Feb 4 15:20:23 WET 2012 x86_64</span></span><span style="top:169.6px">        <span class="i ty">Window manager</span>          <span class="i tw">awesome</span></span><span style="top:181.6px">        <span class="i ty">Terminal</span>                <span class="i tw">rxvt-unicode</span></span><span style="top:193.6px">        <span class="i ty">Shell</span>                   <span class="i tw">/bin/zsh</span></span><span style="top:205.6px">        <span class="i ty">Font</span>                    <span class="i tw">Monospace 8</span></span><span style="top:229.6px"><b style="color:#ff1010">null</b> <span class="i" style="color:#1a34c8">~</span> <b style="color:#18e018">:)</b> </span><div style="left:62.7px;top:230.1px;width:6px;height:12px;border:1px solid #fff"></div></div>
</body></html>
